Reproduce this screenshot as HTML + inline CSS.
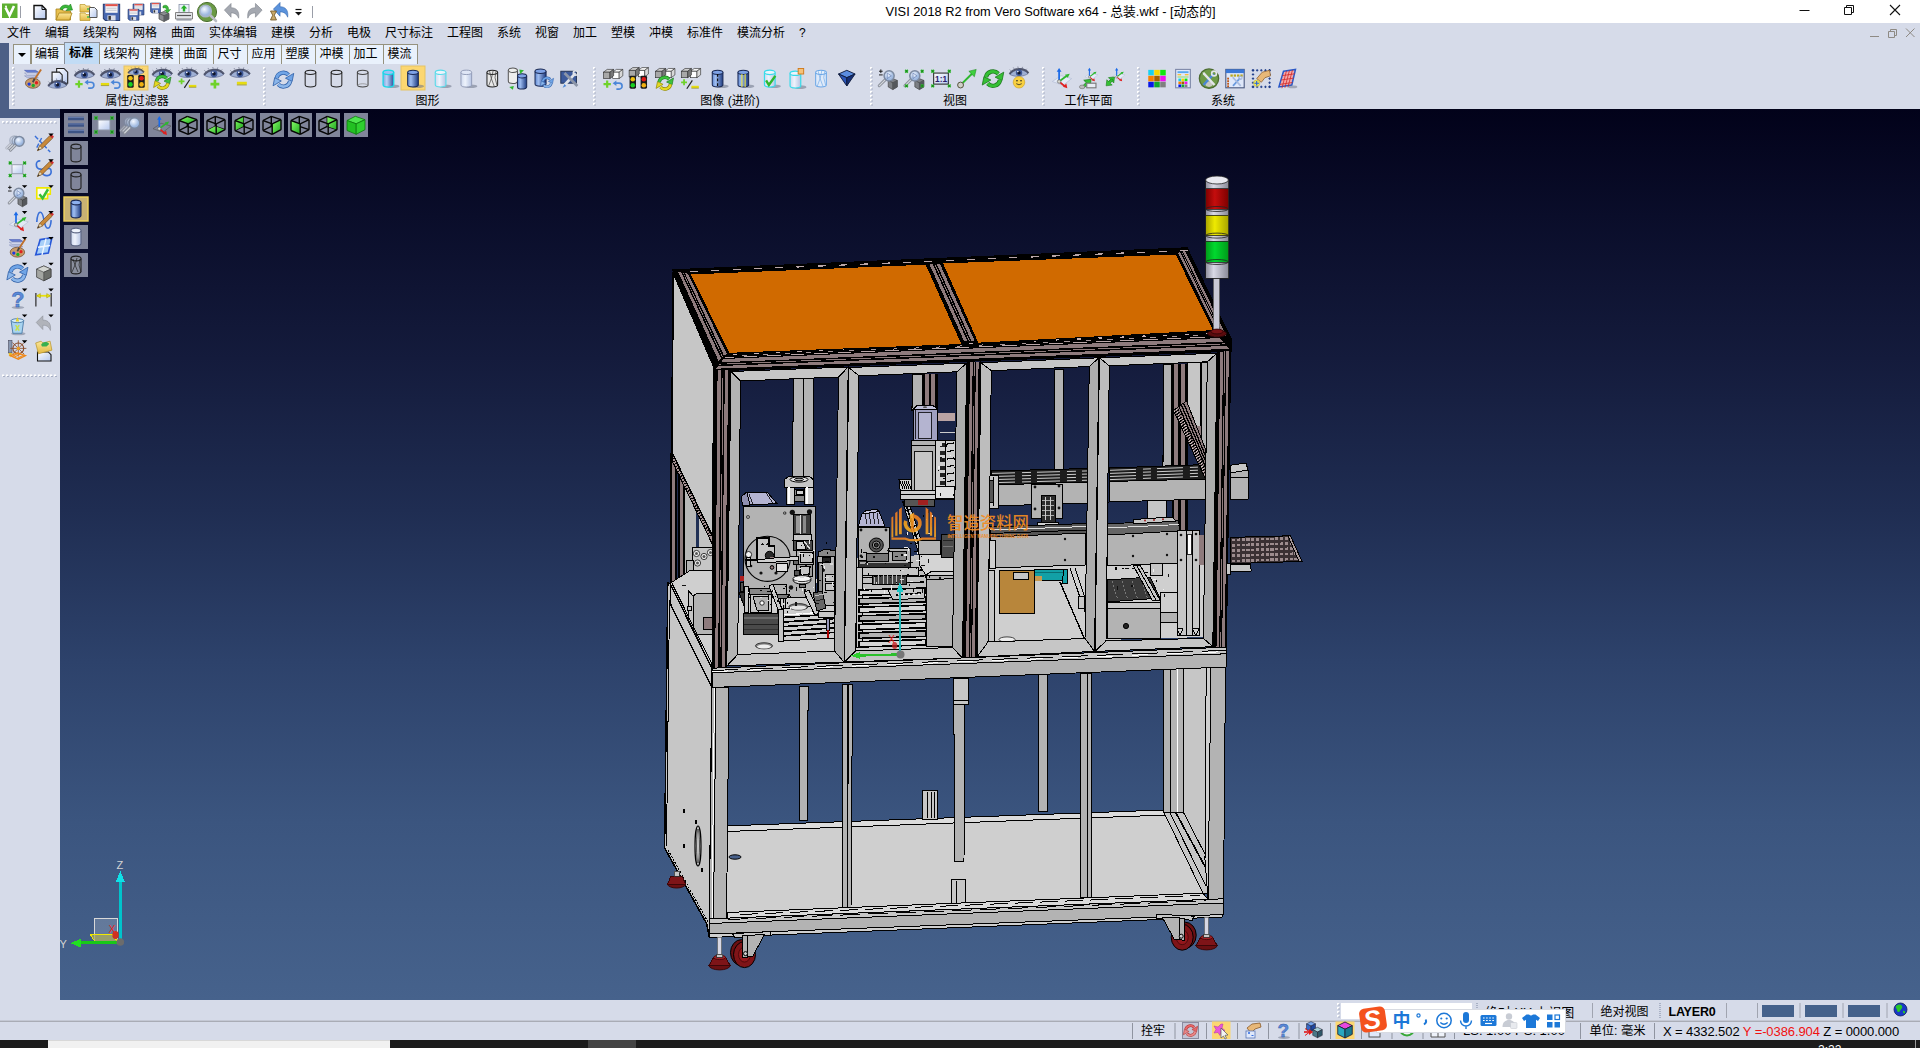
<!DOCTYPE html>
<html lang="zh-CN">
<head>
<meta charset="utf-8">
<title>VISI 2018 R2 from Vero Software x64 - 总装.wkf - [动态的]</title>
<style>
*{box-sizing:border-box;margin:0;padding:0}
html,body{width:1920px;height:1048px;overflow:hidden;background:#d6dbe9}
body{position:relative;font-family:"Liberation Sans","Noto Sans CJK SC",sans-serif;font-size:12px;color:#000}
.abs{position:absolute}
#titlebar{left:0;top:0;width:1920px;height:23px;background:#fff}
#title{left:0;top:1px;width:1920px;text-align:center;font-size:12.8px;letter-spacing:0px;padding-left:181px;white-space:nowrap}
#menubar{left:0;top:23px;width:1920px;height:20px;background:#d6dbe9}
.mi{position:absolute;top:26px;font-size:12px;line-height:15px;white-space:nowrap}
#leftblk{left:0;top:43px;width:9px;height:66px;background:#4c5f86}
.tab{position:absolute;top:44px;height:20px;background:#e9f1fc;border:1px solid #96927e;border-bottom:none;font-size:12px;line-height:18px;text-align:center;white-space:nowrap}
.tab.sel{top:42px;height:22px;background:#c2dcf5;border-color:#8a8f9a;font-weight:bold;line-height:20px}
.glabel{position:absolute;top:93.5px;font-size:12px;line-height:15px;white-space:nowrap;transform:translateX(-50%)}
.sep{position:absolute;top:66px;width:3px;height:40px;border-left:1px dotted #fff;border-right:1px dotted #9aa3b8}
#viewport{left:60px;top:109px;width:1860px;height:891px;background:linear-gradient(#02021a 0%,#0a0d2a 12%,#141b3c 28%,#1f2d52 45%,#2d426b 62%,#3b557f 80%,#46628c 100%)}
#leftpanel{left:0;top:109px;width:60px;height:911px;background:#d6dbe9}
#status1{left:0;top:1000px;width:1920px;height:21px;background:#d6dbe9}
#status2{left:0;top:1021px;width:1920px;height:19px;background:#d6dbe9;border-top:1px solid #a9acb5}
#taskbar{left:0;top:1040px;width:1920px;height:8px;background:#1c1c1c}
.st{position:absolute;font-size:12px;line-height:15px;white-space:nowrap}
</style>
</head>
<body>
<div id="titlebar" class="abs"></div>
<div id="title" class="abs">VISI 2018 R2 from Vero Software x64 - 总装.wkf - [动态的]</div>
<div id="menubar" class="abs"></div>
<div class="mi" style="left:7px">文件</div><div class="mi" style="left:45px">编辑</div><div class="mi" style="left:83px">线架构</div><div class="mi" style="left:133px">网格</div><div class="mi" style="left:171px">曲面</div><div class="mi" style="left:209px">实体编辑</div><div class="mi" style="left:271px">建模</div><div class="mi" style="left:309px">分析</div><div class="mi" style="left:347px">电极</div><div class="mi" style="left:385px">尺寸标注</div><div class="mi" style="left:447px">工程图</div><div class="mi" style="left:497px">系统</div><div class="mi" style="left:535px">视窗</div><div class="mi" style="left:573px">加工</div><div class="mi" style="left:611px">塑模</div><div class="mi" style="left:649px">冲模</div><div class="mi" style="left:687px">标准件</div><div class="mi" style="left:737px">模流分析</div><div class="mi" style="left:799px">?</div>

<div id="leftblk" class="abs"></div>
<div class="tab" style="left:13px;width:18px"><svg width="16" height="18" style="position:absolute;left:0;top:0"><path d="M4 8h8l-4 4z" fill="#000"/></svg></div><div class="tab" style="left:31px;width:34px;padding-right:2px">编辑</div><div class="tab sel" style="left:64px;width:36px;padding-right:2px">标准</div><div class="tab" style="left:99px;width:47px;padding-right:2px">线架构</div><div class="tab" style="left:145px;width:35px;padding-right:2px">建模</div><div class="tab" style="left:179px;width:35px;padding-right:2px">曲面</div><div class="tab" style="left:213px;width:35px;padding-right:2px">尺寸</div><div class="tab" style="left:247px;width:35px;padding-right:2px">应用</div><div class="tab" style="left:281px;width:35px;padding-right:2px">塑膜</div><div class="tab" style="left:315px;width:35px;padding-right:2px">冲模</div><div class="tab" style="left:349px;width:35px;padding-right:2px">加工</div><div class="tab" style="left:383px;width:35px;padding-right:2px">模流</div>

<svg class="abs" style="left:0;top:0" width="1920" height="110" viewBox="0 0 1920 110"><defs><linearGradient id="cb"><stop offset="0" stop-color="#7fa3e0"/><stop offset="0.35" stop-color="#bcd3f6"/><stop offset="1" stop-color="#2c4f9c"/></linearGradient><linearGradient id="cb2"><stop offset="0" stop-color="#5d86d0"/><stop offset="0.3" stop-color="#9fbdf0"/><stop offset="1" stop-color="#1d3a80"/></linearGradient><linearGradient id="ct"><stop offset="0" stop-color="#cfd9ee"/><stop offset="0.4" stop-color="#eef3fc"/><stop offset="1" stop-color="#b5c3e2"/></linearGradient><radialGradient id="mag" cx="0.4" cy="0.35"><stop offset="0" stop-color="#f4f8ff"/><stop offset="1" stop-color="#9db8e0"/></radialGradient><linearGradient id="pg" x2="1" y2="1"><stop offset="0" stop-color="#fff"/><stop offset="1" stop-color="#b5c8ef"/></linearGradient><linearGradient id="fold" x2="0" y2="1"><stop offset="0" stop-color="#fbe79a"/><stop offset="1" stop-color="#e3b944"/></linearGradient><linearGradient id="gcube" x2="1" y2="1"><stop offset="0" stop-color="#8aff6a"/><stop offset="1" stop-color="#1fa81f"/></linearGradient></defs>
<path d="M13 67v40" stroke="#fff" stroke-width="2" stroke-dasharray="2 2"/><path d="M14 68v40" stroke="#a8b0c4" stroke-width="1" stroke-dasharray="2 2"/>
<path d="M264 67v40" stroke="#fff" stroke-width="2" stroke-dasharray="2 2"/><path d="M265 68v40" stroke="#a8b0c4" stroke-width="1" stroke-dasharray="2 2"/>
<path d="M594 67v40" stroke="#fff" stroke-width="2" stroke-dasharray="2 2"/><path d="M595 68v40" stroke="#a8b0c4" stroke-width="1" stroke-dasharray="2 2"/>
<path d="M871 67v40" stroke="#fff" stroke-width="2" stroke-dasharray="2 2"/><path d="M872 68v40" stroke="#a8b0c4" stroke-width="1" stroke-dasharray="2 2"/>
<path d="M1043 67v40" stroke="#fff" stroke-width="2" stroke-dasharray="2 2"/><path d="M1044 68v40" stroke="#a8b0c4" stroke-width="1" stroke-dasharray="2 2"/>
<path d="M1138 67v40" stroke="#fff" stroke-width="2" stroke-dasharray="2 2"/><path d="M1139 68v40" stroke="#a8b0c4" stroke-width="1" stroke-dasharray="2 2"/>
<g transform="translate(32.8,78.6) scale(0.92)"><path d="M-9 -9h12l3 2h-12z" fill="#6c86dc" stroke="#3d50a8" stroke-width="0.6"/><path d="M-9 -6h12l3 2h-12z" fill="#e8ecfa" stroke="#7d88b8" stroke-width="0.6"/><path d="M-9 -3h12l3 2h-12z" fill="#c8cee8" stroke="#7d88b8" stroke-width="0.6"/><ellipse cx="0" cy="5" rx="8" ry="5.5" fill="#c99a6a" stroke="#6a4a2a" stroke-width="0.8"/><circle cx="-4" cy="6" r="1.8" fill="#1a3ae0"/><circle cx="0.5" cy="7.5" r="1.8" fill="#18b028"/><circle cx="4" cy="4.5" r="1.8" fill="#e02020"/><path d="M9 -10L1 2" stroke="#c0702a" stroke-width="2"/><path d="M2 0l-2 4" stroke="#444" stroke-width="2"/></g>
<g transform="translate(58.5,78.6) scale(0.92)"><path d="M-2 -11h8l4 4v12h-12z" fill="url(#pg)" stroke="#222" stroke-width="1.2"/><path d="M-7 -7h8l3 3v11h-11z" fill="url(#pg)" stroke="#222" stroke-width="1.2"/><g transform="translate(-1,7) scale(0.95)"><path d="M-10.5 1.5C-6 -4.5 5 -5.5 10.5 0.5C6 4.2 -5 5 -10.500 1.500Z" fill="#9fb0d4" stroke="#5a6488" stroke-width="0.700"/><path d="M-10.800 1C-6 -6 6 -6.800 10.800 0" fill="none" stroke="#3a4058" stroke-width="2.200" opacity="0.850"/><path d="M-9 -2.500l-1.500 -1.500M-5.500 -4.800l-1 -1.600M-1 -5.800l-0.300 -1.700M3.500 -5.500l0.600 -1.600M7.500 -3.500l1.300 -1.400" stroke="#3a4058" stroke-width="0.800" opacity="0.700"/><circle cx="0" cy="-0.300" r="3.700" fill="#3f5896"/><circle cx="0" cy="-0.300" r="1.900" fill="#10162c"/><circle cx="-1.300" cy="-1.700" r="0.900" fill="#eef2fc"/></g></g>
<g transform="translate(84.5,78.6) scale(0.92)"><g transform="translate(0,-4) scale(1)"><path d="M-10.5 1.5C-6 -4.5 5 -5.5 10.5 0.5C6 4.2 -5 5 -10.500 1.500Z" fill="#9fb0d4" stroke="#5a6488" stroke-width="0.700"/><path d="M-10.800 1C-6 -6 6 -6.800 10.800 0" fill="none" stroke="#3a4058" stroke-width="2.200" opacity="0.850"/><path d="M-9 -2.500l-1.500 -1.500M-5.500 -4.800l-1 -1.600M-1 -5.800l-0.300 -1.700M3.500 -5.500l0.600 -1.600M7.500 -3.500l1.300 -1.400" stroke="#3a4058" stroke-width="0.800" opacity="0.700"/><circle cx="0" cy="-0.300" r="3.700" fill="#3f5896"/><circle cx="0" cy="-0.300" r="1.900" fill="#10162c"/><circle cx="-1.300" cy="-1.700" r="0.900" fill="#eef2fc"/></g><path d="M-10 6h8M-6 2v8" stroke="#6fd22a" stroke-width="2.4" fill="none"/><path d="M2 4h5a3.2 3.2 0 0 1 0 6.4h-3" fill="none" stroke="#4a86d8" stroke-width="1.8"/><path d="M0 4l4 -3v6z" fill="#4a86d8"/></g>
<g transform="translate(110.5,78.6) scale(0.92)"><g transform="translate(0,-4) scale(1)"><path d="M-10.5 1.5C-6 -4.5 5 -5.5 10.5 0.5C6 4.2 -5 5 -10.500 1.500Z" fill="#9fb0d4" stroke="#5a6488" stroke-width="0.700"/><path d="M-10.800 1C-6 -6 6 -6.800 10.800 0" fill="none" stroke="#3a4058" stroke-width="2.200" opacity="0.850"/><path d="M-9 -2.500l-1.500 -1.500M-5.500 -4.800l-1 -1.600M-1 -5.800l-0.300 -1.700M3.500 -5.500l0.600 -1.600M7.500 -3.500l1.300 -1.400" stroke="#3a4058" stroke-width="0.800" opacity="0.700"/><circle cx="0" cy="-0.300" r="3.700" fill="#3f5896"/><circle cx="0" cy="-0.300" r="1.900" fill="#10162c"/><circle cx="-1.300" cy="-1.700" r="0.900" fill="#eef2fc"/></g><path d="M-10.5 6h9" stroke="#e6dc10" stroke-width="2.6" fill="none"/><path d="M-10.5 7.6h9" stroke="#8b8400" stroke-width="0.7" fill="none"/><path d="M2 4h5a3.2 3.2 0 0 1 0 6.4h-3" fill="none" stroke="#4a86d8" stroke-width="1.8"/><path d="M0 4l4 -3v6z" fill="#4a86d8"/></g>
<rect x="124" y="66" width="24" height="24" fill="#fcd771" stroke="#e5c365" stroke-width="1"/>
<g transform="translate(136.0,78.6) scale(0.92)"><g transform="translate(0,-7) scale(0.8)"><path d="M-10.5 1.5C-6 -4.5 5 -5.5 10.5 0.5C6 4.2 -5 5 -10.500 1.500Z" fill="#9fb0d4" stroke="#5a6488" stroke-width="0.700"/><path d="M-10.800 1C-6 -6 6 -6.800 10.800 0" fill="none" stroke="#3a4058" stroke-width="2.200" opacity="0.850"/><path d="M-9 -2.500l-1.500 -1.500M-5.500 -4.800l-1 -1.600M-1 -5.800l-0.300 -1.700M3.500 -5.500l0.600 -1.600M7.500 -3.500l1.300 -1.400" stroke="#3a4058" stroke-width="0.800" opacity="0.700"/><circle cx="0" cy="-0.300" r="3.700" fill="#3f5896"/><circle cx="0" cy="-0.300" r="1.900" fill="#10162c"/><circle cx="-1.300" cy="-1.700" r="0.900" fill="#eef2fc"/></g><rect x="-9.5" y="-4" width="7" height="14" rx="1.5" fill="#1a1a1a"/><circle cx="-6" cy="-0.2999999999999998" r="2.5" fill="#f0c010"/><circle cx="-6" cy="6.3" r="2.5" fill="#18d020"/><rect x="2.5" y="-4" width="7" height="14" rx="1.5" fill="#1a1a1a"/><circle cx="6" cy="-0.2999999999999998" r="2.5" fill="#e01818"/><circle cx="6" cy="6.3" r="2.5" fill="#f0b010"/></g>
<g transform="translate(162.3,78.6) scale(0.92)"><g transform="translate(0,-5) scale(1)"><path d="M-10.5 1.5C-6 -4.5 5 -5.5 10.5 0.5C6 4.2 -5 5 -10.500 1.500Z" fill="#9fb0d4" stroke="#5a6488" stroke-width="0.700"/><path d="M-10.800 1C-6 -6 6 -6.800 10.800 0" fill="none" stroke="#3a4058" stroke-width="2.200" opacity="0.850"/><path d="M-9 -2.500l-1.500 -1.500M-5.500 -4.800l-1 -1.600M-1 -5.800l-0.300 -1.700M3.500 -5.500l0.600 -1.600M7.500 -3.500l1.300 -1.400" stroke="#3a4058" stroke-width="0.800" opacity="0.700"/><circle cx="0" cy="-0.300" r="3.700" fill="#3f5896"/><circle cx="0" cy="-0.300" r="1.900" fill="#10162c"/><circle cx="-1.300" cy="-1.700" r="0.900" fill="#eef2fc"/></g><g transform="translate(0,4) scale(1.05)"><g transform="rotate(0)"><path d="M-5.9 -1.2A6 6 0 0 1 4.4 -4.1" fill="none" stroke="#1f7a1f" stroke-width="3.6"/><path d="M9 -5.4L1.8 -1.2L7.6 1.6Z" fill="#3cc23c" stroke="#1f7a1f" stroke-width="0.7"/><path d="M-5.9 -1.2A6 6 0 0 1 4.4 -4.1" fill="none" stroke="#3cc23c" stroke-width="2.4"/></g><g transform="rotate(180)"><path d="M-5.9 -1.2A6 6 0 0 1 4.4 -4.1" fill="none" stroke="#8b8400" stroke-width="3.6"/><path d="M9 -5.4L1.8 -1.2L7.6 1.6Z" fill="#e4d820" stroke="#8b8400" stroke-width="0.7"/><path d="M-5.9 -1.2A6 6 0 0 1 4.4 -4.1" fill="none" stroke="#e4d820" stroke-width="2.4"/></g></g></g>
<g transform="translate(188.0,78.6) scale(0.92)"><g transform="translate(0,-5) scale(1)"><path d="M-10.5 1.5C-6 -4.5 5 -5.5 10.5 0.5C6 4.2 -5 5 -10.500 1.500Z" fill="#9fb0d4" stroke="#5a6488" stroke-width="0.700"/><path d="M-10.800 1C-6 -6 6 -6.800 10.800 0" fill="none" stroke="#3a4058" stroke-width="2.200" opacity="0.850"/><path d="M-9 -2.500l-1.500 -1.500M-5.500 -4.800l-1 -1.600M-1 -5.800l-0.300 -1.700M3.500 -5.500l0.600 -1.600M7.500 -3.500l1.300 -1.400" stroke="#3a4058" stroke-width="0.800" opacity="0.700"/><circle cx="0" cy="-0.300" r="3.700" fill="#3f5896"/><circle cx="0" cy="-0.300" r="1.900" fill="#10162c"/><circle cx="-1.300" cy="-1.700" r="0.900" fill="#eef2fc"/></g><path d="M-10.2 3h6.4M-7 -0.20000000000000018v6.4" stroke="#6fd22a" stroke-width="1.92" fill="none"/><path d="M-4 10l6 -9" stroke="#222" stroke-width="1.3"/><path d="M0.9500000000000002 8h8.1" stroke="#e6dc10" stroke-width="2.3400000000000003" fill="none"/><path d="M0.9500000000000002 9.44h8.1" stroke="#8b8400" stroke-width="0.7" fill="none"/></g>
<g transform="translate(214.0,78.6) scale(0.92)"><g transform="translate(0,-5) scale(1)"><path d="M-10.5 1.5C-6 -4.5 5 -5.5 10.5 0.5C6 4.2 -5 5 -10.500 1.500Z" fill="#9fb0d4" stroke="#5a6488" stroke-width="0.700"/><path d="M-10.800 1C-6 -6 6 -6.800 10.800 0" fill="none" stroke="#3a4058" stroke-width="2.200" opacity="0.850"/><path d="M-9 -2.500l-1.500 -1.500M-5.500 -4.800l-1 -1.600M-1 -5.800l-0.300 -1.700M3.500 -5.500l0.600 -1.600M7.500 -3.500l1.300 -1.400" stroke="#3a4058" stroke-width="0.800" opacity="0.700"/><circle cx="0" cy="-0.300" r="3.700" fill="#3f5896"/><circle cx="0" cy="-0.300" r="1.900" fill="#10162c"/><circle cx="-1.300" cy="-1.700" r="0.900" fill="#eef2fc"/></g><path d="M-3.8 6h9.6M1 1.2000000000000002v9.6" stroke="#6fd22a" stroke-width="2.88" fill="none"/></g>
<g transform="translate(240.0,78.6) scale(0.92)"><g transform="translate(0,-5) scale(1)"><path d="M-10.5 1.5C-6 -4.5 5 -5.5 10.5 0.5C6 4.2 -5 5 -10.500 1.500Z" fill="#9fb0d4" stroke="#5a6488" stroke-width="0.700"/><path d="M-10.800 1C-6 -6 6 -6.800 10.800 0" fill="none" stroke="#3a4058" stroke-width="2.200" opacity="0.850"/><path d="M-9 -2.500l-1.500 -1.500M-5.500 -4.800l-1 -1.600M-1 -5.800l-0.300 -1.700M3.500 -5.500l0.600 -1.600M7.500 -3.500l1.300 -1.400" stroke="#3a4058" stroke-width="0.800" opacity="0.700"/><circle cx="0" cy="-0.300" r="3.700" fill="#3f5896"/><circle cx="0" cy="-0.300" r="1.900" fill="#10162c"/><circle cx="-1.300" cy="-1.700" r="0.900" fill="#eef2fc"/></g><path d="M-3.3999999999999995 5h10.799999999999999" stroke="#e6dc10" stroke-width="3.12" fill="none"/><path d="M-3.3999999999999995 6.92h10.799999999999999" stroke="#8b8400" stroke-width="0.7" fill="none"/></g>
<g transform="translate(283.4,79.6) scale(0.92)"><g transform="translate(0,0) scale(1.25)"><g transform="rotate(0)"><path d="M-5.9 -1.2A6 6 0 0 1 4.4 -4.1" fill="none" stroke="#2d5fa8" stroke-width="3.6"/><path d="M9 -5.4L1.8 -1.2L7.6 1.6Z" fill="#6fa4e6" stroke="#2d5fa8" stroke-width="0.7"/><path d="M-5.9 -1.2A6 6 0 0 1 4.4 -4.1" fill="none" stroke="#6fa4e6" stroke-width="2.4"/></g><g transform="rotate(180)"><path d="M-5.9 -1.2A6 6 0 0 1 4.4 -4.1" fill="none" stroke="#2d5fa8" stroke-width="3.6"/><path d="M9 -5.4L1.8 -1.2L7.6 1.6Z" fill="#8bb6ea" stroke="#2d5fa8" stroke-width="0.7"/><path d="M-5.9 -1.2A6 6 0 0 1 4.4 -4.1" fill="none" stroke="#8bb6ea" stroke-width="2.4"/></g></g></g>
<g transform="translate(310.5,78.6) scale(0.92)"><path d="M-5.8 -6.8v13.6a5.8 2.4 0 0 0 11.6 0v-13.6" fill="none" stroke="#222" stroke-width="1.1"/><ellipse cx="0" cy="-6.8" rx="5.8" ry="2.4" fill="none" stroke="#222" stroke-width="1.1"/></g>
<g transform="translate(336.5,78.6) scale(0.92)"><path d="M-5.8 -6.8v13.6a5.8 2.4 0 0 0 11.6 0v-13.6" fill="none" stroke="#222" stroke-width="1.1"/><ellipse cx="0" cy="-6.8" rx="5.8" ry="2.4" fill="none" stroke="#222" stroke-width="1.1"/></g>
<g transform="translate(362.7,78.6) scale(0.92)"><path d="M-5.8 -6.8v13.6a5.8 2.4 0 0 0 11.6 0v-13.6" fill="none" stroke="#444" stroke-width="1.1"/><ellipse cx="0" cy="-6.8" rx="5.8" ry="2.4" fill="none" stroke="#444" stroke-width="1.1"/><path d="M-6 8a6 2.4 0 0 1 12 0" fill="none" stroke="#888" stroke-width="0.8"/></g>
<g transform="translate(388.4,78.6) scale(0.92)"><ellipse cx="5" cy="8.3" rx="7" ry="2" fill="#6c7386" opacity="0.55"/><path d="M-5.8 -6.8v13.6a5.8 2.4 0 0 0 11.6 0v-13.6" fill="url(#cb)" stroke="#18d8e8" stroke-width="1.4"/><ellipse cx="0" cy="-6.8" rx="5.8" ry="2.4" fill="#9fc0f4" stroke="#18d8e8" stroke-width="1.4"/></g>
<rect x="401" y="66" width="24" height="24" fill="#fcd771" stroke="#e5c365" stroke-width="1"/>
<g transform="translate(413.0,78.6) scale(0.92)"><ellipse cx="5" cy="8.3" rx="7" ry="2" fill="#6c7386" opacity="0.55"/><path d="M-5.8 -6.8v13.6a5.8 2.4 0 0 0 11.6 0v-13.6" fill="url(#cb2)" stroke="#1b2a55" stroke-width="1.1"/><ellipse cx="0" cy="-6.8" rx="5.8" ry="2.4" fill="#7ea2e6" stroke="#1b2a55" stroke-width="1.1"/></g>
<g transform="translate(440.6,78.6) scale(0.92)"><ellipse cx="5" cy="8.3" rx="7" ry="2" fill="#6c7386" opacity="0.55"/><path d="M-5.8 -6.8v13.6a5.8 2.4 0 0 0 11.6 0v-13.6" fill="url(#ct)" stroke="#58dcea" stroke-width="1.2"/><ellipse cx="0" cy="-6.8" rx="5.8" ry="2.4" fill="#eef3fc" stroke="#58dcea" stroke-width="1.2"/></g>
<g transform="translate(466.3,78.6) scale(0.92)"><ellipse cx="5" cy="8.3" rx="7" ry="2" fill="#6c7386" opacity="0.55"/><path d="M-5.8 -6.8v13.6a5.8 2.4 0 0 0 11.6 0v-13.6" fill="url(#ct)" stroke="#8e98b4" stroke-width="1"/><ellipse cx="0" cy="-6.8" rx="5.8" ry="2.4" fill="#dfe6f6" stroke="#8e98b4" stroke-width="1"/></g>
<g transform="translate(492.3,78.6) scale(0.92)"><path d="M-5.8 -6.8v13.6a5.8 2.4 0 0 0 11.6 0v-13.6" fill="#e8e8e8" stroke="#222" stroke-width="1.1"/><ellipse cx="0" cy="-6.8" rx="5.8" ry="2.4" fill="#e8e8e8" stroke="#222" stroke-width="1.1"/><path d="M-3 -8l2 8l-3 8M1 -9l-2 9l3 8M4 -8l-1 7l2 8" fill="none" stroke="#333" stroke-width="0.7"/></g>
<g transform="translate(517.5,78.6) scale(0.92)"><path d="M-10 -9v12a5 2.4 0 0 0 10 0v-12" fill="#eee" stroke="#555" stroke-width="1.1"/><ellipse cx="-5" cy="-9" rx="5" ry="2.4" fill="#eee" stroke="#555" stroke-width="1.1"/><path d="M0 -3v12a5 2.4 0 0 0 10 0v-12" fill="url(#cb2)" stroke="#1b2a55" stroke-width="1.1"/><ellipse cx="5" cy="-3" rx="5" ry="2.4" fill="#7ea2e6" stroke="#1b2a55" stroke-width="1.1"/><path d="M2 -10l5 1l-4 4z" fill="#2fb82f"/><path d="M-9 9l5 -1l-1 4z" fill="#2fb82f"/></g>
<g transform="translate(543.3,78.6) scale(0.92)"><path d="M-9 -8v14a6 2.4 0 0 0 12 0v-14" fill="url(#cb2)" stroke="#1b2a55" stroke-width="1.1"/><ellipse cx="-3" cy="-8" rx="6" ry="2.4" fill="#7ea2e6" stroke="#1b2a55" stroke-width="1.1"/><g transform="translate(4,4) scale(0.8)"><g transform="rotate(0)"><path d="M-5.9 -1.2A6 6 0 0 1 4.4 -4.1" fill="none" stroke="#2d5fa8" stroke-width="3.6"/><path d="M9 -5.4L1.8 -1.2L7.6 1.6Z" fill="#6fa4e6" stroke="#2d5fa8" stroke-width="0.7"/><path d="M-5.9 -1.2A6 6 0 0 1 4.4 -4.1" fill="none" stroke="#6fa4e6" stroke-width="2.4"/></g><g transform="rotate(180)"><path d="M-5.9 -1.2A6 6 0 0 1 4.4 -4.1" fill="none" stroke="#2d5fa8" stroke-width="3.6"/><path d="M9 -5.4L1.8 -1.2L7.6 1.6Z" fill="#8bb6ea" stroke="#2d5fa8" stroke-width="0.7"/><path d="M-5.9 -1.2A6 6 0 0 1 4.4 -4.1" fill="none" stroke="#8bb6ea" stroke-width="2.4"/></g></g></g>
<g transform="translate(570.0,78.6) scale(0.92)"><rect x="-10" y="-8" width="17" height="13" fill="#3c5a9c" stroke="#22304f" stroke-width="1"/><path d="M-7 8L6 -6" stroke="#dfe3ea" stroke-width="3"/><path d="M-6 -6L8 8" stroke="#8d96a8" stroke-width="3"/><path d="M-8 10l4 -2l-2 -2z" fill="#4a86d8"/><circle cx="6" cy="-6" r="2.5" fill="none" stroke="#dfe3ea" stroke-width="1.6"/></g>
<g transform="translate(612.7,78.6) scale(0.92)"><path d="M0 -7l4 -3h7l-4 3z" fill="#f4f4f4" stroke="#333" stroke-width="0.7"/><rect x="0" y="-7" width="7" height="7" fill="#ffffff" stroke="#333" stroke-width="0.7"/><path d="M7 -7l4 -3v7l-4 3z" fill="#d8d8d8" stroke="#333" stroke-width="0.7"/><path d="M-10 -7l4 -3h7l-4 3z" fill="#d0d0d0" stroke="#333" stroke-width="0.7"/><rect x="-10" y="-7" width="7" height="7" fill="#a8a8a8" stroke="#333" stroke-width="0.7"/><path d="M-3 -7l4 -3v7l-4 3z" fill="#787878" stroke="#333" stroke-width="0.7"/><path d="M-10 6h8M-6 2v8" stroke="#6fd22a" stroke-width="2.4" fill="none"/><path d="M2 5h5a3.2 3.2 0 0 1 0 6.4h-3" fill="none" stroke="#4a86d8" stroke-width="1.8"/><path d="M0 5l4 -3v6z" fill="#4a86d8"/></g>
<g transform="translate(638.3,78.6) scale(0.92)"><path d="M0 -9l4 -3h7l-4 3z" fill="#f4f4f4" stroke="#333" stroke-width="0.7"/><rect x="0" y="-9" width="7" height="7" fill="#ffffff" stroke="#333" stroke-width="0.7"/><path d="M7 -9l4 -3v7l-4 3z" fill="#d8d8d8" stroke="#333" stroke-width="0.7"/><path d="M-10 -9l4 -3h7l-4 3z" fill="#d0d0d0" stroke="#333" stroke-width="0.7"/><rect x="-10" y="-9" width="7" height="7" fill="#a8a8a8" stroke="#333" stroke-width="0.7"/><path d="M-3 -9l4 -3v7l-4 3z" fill="#787878" stroke="#333" stroke-width="0.7"/><rect x="-9.5" y="-3" width="7" height="14" rx="1.5" fill="#1a1a1a"/><circle cx="-6" cy="0.7000000000000002" r="2.5" fill="#f0c010"/><circle cx="-6" cy="7.3" r="2.5" fill="#18d020"/><rect x="2.5" y="-3" width="7" height="14" rx="1.5" fill="#1a1a1a"/><circle cx="6" cy="0.7000000000000002" r="2.5" fill="#e01818"/><circle cx="6" cy="7.3" r="2.5" fill="#f0b010"/></g>
<g transform="translate(664.8,78.6) scale(0.92)"><path d="M0 -8l4 -3h7l-4 3z" fill="#f4f4f4" stroke="#333" stroke-width="0.7"/><rect x="0" y="-8" width="7" height="7" fill="#ffffff" stroke="#333" stroke-width="0.7"/><path d="M7 -8l4 -3v7l-4 3z" fill="#d8d8d8" stroke="#333" stroke-width="0.7"/><path d="M-10 -8l4 -3h7l-4 3z" fill="#d0d0d0" stroke="#333" stroke-width="0.7"/><rect x="-10" y="-8" width="7" height="7" fill="#a8a8a8" stroke="#333" stroke-width="0.7"/><path d="M-3 -8l4 -3v7l-4 3z" fill="#787878" stroke="#333" stroke-width="0.7"/><g transform="translate(0,5) scale(1.05)"><g transform="rotate(0)"><path d="M-5.9 -1.2A6 6 0 0 1 4.4 -4.1" fill="none" stroke="#1f7a1f" stroke-width="3.6"/><path d="M9 -5.4L1.8 -1.2L7.6 1.6Z" fill="#3cc23c" stroke="#1f7a1f" stroke-width="0.7"/><path d="M-5.9 -1.2A6 6 0 0 1 4.4 -4.1" fill="none" stroke="#3cc23c" stroke-width="2.4"/></g><g transform="rotate(180)"><path d="M-5.9 -1.2A6 6 0 0 1 4.4 -4.1" fill="none" stroke="#8b8400" stroke-width="3.6"/><path d="M9 -5.4L1.8 -1.2L7.6 1.6Z" fill="#e4d820" stroke="#8b8400" stroke-width="0.7"/><path d="M-5.9 -1.2A6 6 0 0 1 4.4 -4.1" fill="none" stroke="#e4d820" stroke-width="2.4"/></g></g></g>
<g transform="translate(690.5,78.6) scale(0.92)"><path d="M0 -8l4 -3h7l-4 3z" fill="#f4f4f4" stroke="#333" stroke-width="0.7"/><rect x="0" y="-8" width="7" height="7" fill="#ffffff" stroke="#333" stroke-width="0.7"/><path d="M7 -8l4 -3v7l-4 3z" fill="#d8d8d8" stroke="#333" stroke-width="0.7"/><path d="M-10 -8l4 -3h7l-4 3z" fill="#d0d0d0" stroke="#333" stroke-width="0.7"/><rect x="-10" y="-8" width="7" height="7" fill="#a8a8a8" stroke="#333" stroke-width="0.7"/><path d="M-3 -8l4 -3v7l-4 3z" fill="#787878" stroke="#333" stroke-width="0.7"/><path d="M-10.2 4h6.4M-7 0.7999999999999998v6.4" stroke="#6fd22a" stroke-width="1.92" fill="none"/><path d="M-4 11l6 -9" stroke="#222" stroke-width="1.3"/><path d="M0.9500000000000002 9h8.1" stroke="#e6dc10" stroke-width="2.3400000000000003" fill="none"/><path d="M0.9500000000000002 10.44h8.1" stroke="#8b8400" stroke-width="0.7" fill="none"/></g>
<g transform="translate(717.6,78.6) scale(0.92)"><ellipse cx="5" cy="8.3" rx="7" ry="2" fill="#6c7386" opacity="0.55"/><path d="M-5.8 -6.8v13.6a5.8 2.4 0 0 0 11.6 0v-13.6" fill="url(#cb2)" stroke="#1b2a55" stroke-width="1.1"/><ellipse cx="0" cy="-6.8" rx="5.8" ry="2.4" fill="#7ea2e6" stroke="#1b2a55" stroke-width="1.1"/><path d="M0 -5v14" stroke="#111" stroke-width="1.3" stroke-dasharray="3 2"/></g>
<g transform="translate(743.3,78.6) scale(0.92)"><ellipse cx="5" cy="8.3" rx="7" ry="2" fill="#6c7386" opacity="0.55"/><path d="M-5.8 -6.8v13.6a5.8 2.4 0 0 0 11.6 0v-13.6" fill="url(#cb2)" stroke="#1b2a55" stroke-width="1.1"/><ellipse cx="0" cy="-6.8" rx="5.8" ry="2.4" fill="#7ea2e6" stroke="#1b2a55" stroke-width="1.1"/><path d="M-1.5 -5v14M2 -5v14" stroke="#e8e040" stroke-width="1.2"/></g>
<g transform="translate(769.8,78.6) scale(0.92)"><ellipse cx="5" cy="8.3" rx="7" ry="2" fill="#6c7386" opacity="0.55"/><path d="M-5.8 -6.8v13.6a5.8 2.4 0 0 0 11.6 0v-13.6" fill="url(#ct)" stroke="#38dcea" stroke-width="1.3"/><ellipse cx="0" cy="-6.8" rx="5.8" ry="2.4" fill="#eef3fc" stroke="#38dcea" stroke-width="1.3"/><path d="M-4 2l3 5l7 -10" fill="none" stroke="#2eb82e" stroke-width="2.6"/></g>
<g transform="translate(795.4,78.6) scale(0.92)"><ellipse cx="5" cy="9.3" rx="7" ry="2" fill="#6c7386" opacity="0.55"/><path d="M-5.8 -5.8v13.6a5.8 2.4 0 0 0 11.6 0v-13.6" fill="url(#ct)" stroke="#38dcea" stroke-width="1.3"/><ellipse cx="0" cy="-5.8" rx="5.8" ry="2.4" fill="#eef3fc" stroke="#38dcea" stroke-width="1.3"/><rect x="3" y="-11" width="6" height="6" fill="#f4c27a" stroke="#d07818" stroke-width="1"/></g>
<g transform="translate(821.0,78.6) scale(0.92)"><path d="M-5.8 -6.8v13.6a5.8 2.4 0 0 0 11.6 0v-13.6" fill="#dfeaf9" stroke="#6aa6e6" stroke-width="1.1"/><ellipse cx="0" cy="-6.8" rx="5.8" ry="2.4" fill="#eaf2fc" stroke="#6aa6e6" stroke-width="1.1"/><path d="M-3 -8l2 8l-3 8M1 -9l-2 9l3 8M4 -8l-1 7l2 8" fill="none" stroke="#6aa6e6" stroke-width="0.7"/></g>
<g transform="translate(846.8,78.6) scale(0.92)"><path d="M-9 -5l9 -4l9 4l-9 4z" fill="#5b8de0" stroke="#0e1a3c" stroke-width="1"/><path d="M-9 -5l9 4v9z" fill="#2a55b8" stroke="#0e1a3c" stroke-width="1"/><path d="M9 -5l-9 4v9z" fill="#152f78" stroke="#0e1a3c" stroke-width="1"/></g>
<g transform="translate(888.2,78.6) scale(0.92)"><path d="M0 2l5 -2l5 2v7l-5 3l-5 -3z" fill="#7c7f84" stroke="#333" stroke-width="0.6"/><path d="M0 2l5 2.5l5 -2.5" fill="none" stroke="#333" stroke-width="0.6"/><path d="M5 4.5v7" stroke="#333" stroke-width="0.6"/><path d="M5 4.5l5 -2.5v7l-5 3z" fill="#55585c"/><path d="M-2.8 0.8l-7 7" stroke="#8a8f99" stroke-width="3.2" stroke-linecap="round"/><path d="M-2.8 0.8l-7 7" stroke="#d6d9df" stroke-width="1.2" stroke-linecap="round"/><circle cx="1" cy="-3" r="5.5" fill="url(#mag)" stroke="#7d8aa0" stroke-width="1.6"/><path d="M-1 -6l4.5 3l-4.5 3z" fill="none" stroke="#6d86b8" stroke-width="0.8"/><path d="M-10 -8h4M-8 -10v4M-10 -4h4" stroke="#111" stroke-width="1"/></g>
<g transform="translate(914.8,78.6) scale(0.92)"><path d="M0 2l5 -2l5 2v7l-5 3l-5 -3z" fill="#7c7f84" stroke="#333" stroke-width="0.6"/><path d="M0 2l5 2.5l5 -2.5" fill="none" stroke="#333" stroke-width="0.6"/><path d="M5 4.5v7" stroke="#333" stroke-width="0.6"/><path d="M5 4.5l5 -2.5v7l-5 3z" fill="#55585c"/><path d="M-3.8 0.8l-7 7" stroke="#8a8f99" stroke-width="3.2" stroke-linecap="round"/><path d="M-3.8 0.8l-7 7" stroke="#d6d9df" stroke-width="1.2" stroke-linecap="round"/><circle cx="0" cy="-3" r="5.5" fill="url(#mag)" stroke="#7d8aa0" stroke-width="1.6"/><path d="M-2 -6l4.5 3l-4.5 3z" fill="none" stroke="#6d86b8" stroke-width="0.8"/><path d="M-10.5 -9.5l3 3M-7.5 -9.5l-3 3" stroke="#2eb82e" stroke-width="1.6"/><rect x="-10" y="-9" width="2" height="2" fill="#1d8a1d"/><path d="M6.5 -9.5l3 3M9.5 -9.5l-3 3" stroke="#2eb82e" stroke-width="1.6"/><rect x="7" y="-9" width="2" height="2" fill="#1d8a1d"/><path d="M-10.5 6.5l3 3M-7.5 6.5l-3 3" stroke="#2eb82e" stroke-width="1.6"/><rect x="-10" y="7" width="2" height="2" fill="#1d8a1d"/><path d="M6.5 6.5l3 3M9.5 6.5l-3 3" stroke="#2eb82e" stroke-width="1.6"/><rect x="7" y="7" width="2" height="2" fill="#1d8a1d"/></g>
<g transform="translate(941.0,78.6) scale(0.92)"><rect x="-8" y="-6" width="16" height="12" fill="url(#pg)" stroke="#333" stroke-width="1.2"/><path d="M-10.5 -9.5l3 3M-7.5 -9.5l-3 3" stroke="#2eb82e" stroke-width="1.6"/><rect x="-10" y="-9" width="2" height="2" fill="#1d8a1d"/><path d="M7.5 -9.5l3 3M10.5 -9.5l-3 3" stroke="#2eb82e" stroke-width="1.6"/><rect x="8" y="-9" width="2" height="2" fill="#1d8a1d"/><path d="M-10.5 6.5l3 3M-7.5 6.5l-3 3" stroke="#2eb82e" stroke-width="1.6"/><rect x="-10" y="7" width="2" height="2" fill="#1d8a1d"/><path d="M7.5 6.5l3 3M10.5 6.5l-3 3" stroke="#2eb82e" stroke-width="1.6"/><rect x="8" y="7" width="2" height="2" fill="#1d8a1d"/><text x="0" y="3.5" font-size="9" font-weight="bold" text-anchor="middle" fill="#2a1a6a" font-family="Liberation Sans, sans-serif">1:1</text></g>
<g transform="translate(967.0,78.6) scale(0.92)"><path d="M-6 6L7 -7" stroke="#2eb82e" stroke-width="2.2"/><path d="M10 -10l-8 2l6 6z" fill="#3fd03f" stroke="#1d8a1d" stroke-width="0.6"/><circle cx="-7" cy="7" r="3.2" fill="#cfcfc8" stroke="#4a4a30" stroke-width="1"/></g>
<g transform="translate(993.0,78.6) scale(0.92)"><g transform="translate(0,0) scale(1.3)"><g transform="rotate(0)"><path d="M-5.9 -1.2A6 6 0 0 1 4.4 -4.1" fill="none" stroke="#1f7a1f" stroke-width="3.6"/><path d="M9 -5.4L1.8 -1.2L7.6 1.6Z" fill="#35c035" stroke="#1f7a1f" stroke-width="0.7"/><path d="M-5.9 -1.2A6 6 0 0 1 4.4 -4.1" fill="none" stroke="#35c035" stroke-width="2.4"/></g><g transform="rotate(180)"><path d="M-5.9 -1.2A6 6 0 0 1 4.4 -4.1" fill="none" stroke="#1f7a1f" stroke-width="3.6"/><path d="M9 -5.4L1.8 -1.2L7.6 1.6Z" fill="#35c035" stroke="#1f7a1f" stroke-width="0.7"/><path d="M-5.9 -1.2A6 6 0 0 1 4.4 -4.1" fill="none" stroke="#35c035" stroke-width="2.4"/></g></g></g>
<g transform="translate(1019.0,78.6) scale(0.92)"><g transform="translate(0,-6) scale(0.95)"><path d="M-10.5 1.5C-6 -4.5 5 -5.5 10.5 0.5C6 4.2 -5 5 -10.500 1.500Z" fill="#9fb0d4" stroke="#5a6488" stroke-width="0.700"/><path d="M-10.800 1C-6 -6 6 -6.800 10.800 0" fill="none" stroke="#3a4058" stroke-width="2.200" opacity="0.850"/><path d="M-9 -2.500l-1.500 -1.500M-5.500 -4.800l-1 -1.600M-1 -5.800l-0.300 -1.700M3.500 -5.500l0.600 -1.600M7.500 -3.500l1.300 -1.400" stroke="#3a4058" stroke-width="0.800" opacity="0.700"/><circle cx="0" cy="-0.300" r="3.700" fill="#3f5896"/><circle cx="0" cy="-0.300" r="1.900" fill="#10162c"/><circle cx="-1.300" cy="-1.700" r="0.900" fill="#eef2fc"/></g><circle cx="0" cy="4" r="6.3" fill="#f8d040" stroke="#c89a18" stroke-width="0.6"/><circle cx="-2.2" cy="2.3" r="0.9" fill="#222"/><circle cx="2.2" cy="2.3" r="0.9" fill="#222"/><path d="M-3 5.5q3 2.5 6 0" fill="none" stroke="#222" stroke-width="0.8"/></g>
<g transform="translate(1062.0,78.6) scale(0.92)"><g transform="translate(0,0) scale(1.05)"><path d="M-10 3l9 -6l11 3l-9 7z" fill="#e4ebf8" stroke="#b4bdd4" stroke-width="0.7"/><path d="M-3 3V-8" stroke="#1a6ae8" stroke-width="1.8"/><path d="M-3 -11l-2.5 4h5z" fill="#1a6ae8"/><path d="M-3 3L5 -3" stroke="#2eb82e" stroke-width="1.8"/><path d="M8 -5l-5 1l3 3z" fill="#2eb82e"/><path d="M-3 3L3 8" stroke="#e02020" stroke-width="1.8"/><path d="M5.5 10l-1 -5l-3.5 3.5z" fill="#e02020"/><circle cx="-3" cy="3" r="1.8" fill="#d8d8d0" stroke="#555" stroke-width="0.6"/></g></g>
<g transform="translate(1088.6,78.6) scale(0.92)"><g transform="translate(3,-4) scale(0.7)"><path d="M-10 3l9 -6l11 3l-9 7z" fill="#e4ebf8" stroke="#b4bdd4" stroke-width="0.7"/><path d="M-3 3V-8" stroke="#1a6ae8" stroke-width="1.8"/><path d="M-3 -11l-2.5 4h5z" fill="#1a6ae8"/><path d="M-3 3L5 -3" stroke="#2eb82e" stroke-width="1.8"/><path d="M8 -5l-5 1l3 3z" fill="#2eb82e"/><path d="M-3 3L3 8" stroke="#e02020" stroke-width="1.8"/><path d="M5.5 10l-1 -5l-3.5 3.5z" fill="#e02020"/><circle cx="-3" cy="3" r="1.8" fill="#d8d8d0" stroke="#555" stroke-width="0.6"/></g><g transform="translate(-4,3) rotate(-45) scale(0.9)"><path d="M-6 2h6v-4l7 5.5l-7 5.5v-4h-6z" fill="#35c035" stroke="#1a7a1a" stroke-width="0.8"/></g><rect x="-2" y="5" width="10" height="5" fill="#e8ecf4" stroke="#777" stroke-width="1.2"/><ellipse cx="-7" cy="9" rx="3" ry="2" fill="#bbb" stroke="#666" stroke-width="0.6"/></g>
<g transform="translate(1114.0,78.6) scale(0.92)"><g transform="translate(5,-4) scale(0.7)"><path d="M-10 3l9 -6l11 3l-9 7z" fill="#e4ebf8" stroke="#b4bdd4" stroke-width="0.7"/><path d="M-3 3V-8" stroke="#1a6ae8" stroke-width="1.8"/><path d="M-3 -11l-2.5 4h5z" fill="#1a6ae8"/><path d="M-3 3L5 -3" stroke="#2eb82e" stroke-width="1.8"/><path d="M8 -5l-5 1l3 3z" fill="#2eb82e"/><path d="M-3 3L3 8" stroke="#e02020" stroke-width="1.8"/><path d="M5.5 10l-1 -5l-3.5 3.5z" fill="#e02020"/><circle cx="-3" cy="3" r="1.8" fill="#d8d8d0" stroke="#555" stroke-width="0.6"/></g><g transform="translate(-5,0) rotate(-45) scale(0.75)"><path d="M-6 2h6v-4l7 5.5l-7 5.5v-4h-6z" fill="#35c035" stroke="#1a7a1a" stroke-width="0.8"/></g><g transform="translate(-3,6) rotate(135) scale(0.75)"><path d="M-6 2h6v-4l7 5.5l-7 5.5v-4h-6z" fill="#35c035" stroke="#1a7a1a" stroke-width="0.8"/></g></g>
<g transform="translate(1157.0,78.6) scale(0.92)"><rect x="-9.5" y="-9.5" width="6" height="6" fill="#18d0f0"/><rect x="-3.0" y="-9.5" width="6" height="6" fill="#f8d800"/><rect x="3.5" y="-9.5" width="6" height="6" fill="#10e810"/><rect x="-9.5" y="-3.0" width="6" height="6" fill="#f88000"/><rect x="-3.0" y="-3.0" width="6" height="6" fill="#a86000"/><rect x="3.5" y="-3.0" width="6" height="6" fill="#f010f0"/><rect x="-9.5" y="3.5" width="6" height="6" fill="#0818e8"/><rect x="-3.0" y="3.5" width="6" height="6" fill="#10a830"/><rect x="3.5" y="3.5" width="6" height="6" fill="#808080"/></g>
<g transform="translate(1183.0,78.6) scale(0.92)"><rect x="-8" y="-10" width="16" height="20" fill="#dfe8fa" stroke="#7d88a8" stroke-width="1.2"/><rect x="-6" y="-8" width="12" height="2" fill="#58a8f0"/><rect x="-6" y="-5" width="4" height="1.5" fill="#f8c040"/><rect x="2" y="-5" width="4" height="1.5" fill="#f8c040"/><rect x="-6" y="-2.5" width="12" height="1.5" fill="#a8e088"/><rect x="-5.0" y="0.0" width="3" height="2.8" fill="#18d0f0"/><rect x="-1.6" y="0.0" width="3" height="2.8" fill="#f8d800"/><rect x="1.7999999999999998" y="0.0" width="3" height="2.8" fill="#10e810"/><rect x="-5.0" y="3.2" width="3" height="2.8" fill="#f88000"/><rect x="-1.6" y="3.2" width="3" height="2.8" fill="#a86000"/><rect x="1.7999999999999998" y="3.2" width="3" height="2.8" fill="#f010f0"/><rect x="-5.0" y="6.4" width="3" height="2.8" fill="#0818e8"/><rect x="-1.6" y="6.4" width="3" height="2.8" fill="#10a830"/><rect x="1.7999999999999998" y="6.4" width="3" height="2.8" fill="#808080"/></g>
<g transform="translate(1209.0,78.6) scale(0.92)"><circle cx="0" cy="0" r="10.5" fill="#6e9a48" stroke="#4c6c30" stroke-width="1.4"/><ellipse cx="0" cy="6" rx="4" ry="3" fill="#c8c8c0"/><path d="M-6 7L5 -5" stroke="#4a86d8" stroke-width="2.6"/><path d="M-6 -6L6 7" stroke="#e4e6ea" stroke-width="2.6"/><circle cx="5.5" cy="-5.5" r="2.6" fill="none" stroke="#e4e6ea" stroke-width="1.8"/><path d="M-7 -7l3 1l-2 2z" fill="#e4e6ea"/></g>
<g transform="translate(1235.0,78.6) scale(0.92)"><rect x="-10" y="-10" width="20" height="20" fill="#dfe8fa" stroke="#4a5a80" stroke-width="1.2"/><rect x="-10" y="-10" width="20" height="4" fill="#3a78d8"/><rect x="-5.0" y="-4.5" width="2.6" height="2.4" fill="#b8a820"/><rect x="-1.4" y="-4.5" width="2.6" height="2.4" fill="#b8a820"/><rect x="2.2" y="-4.5" width="2.6" height="2.4" fill="#b8a820"/><rect x="5.800000000000001" y="-4.5" width="2.6" height="2.4" fill="#b8a820"/><rect x="-8.5" y="-1.0" width="2" height="2" fill="#c05818"/><rect x="-8.5" y="1.7999999999999998" width="2" height="2" fill="#c05818"/><rect x="-8.5" y="4.6" width="2" height="2" fill="#c05818"/><rect x="-8.5" y="7.399999999999999" width="2" height="2" fill="#c05818"/><g transform="translate(2,3) scale(0.7)" opacity="0.8"><path d="M-6 7L5 -5" stroke="#4a86d8" stroke-width="2.6"/><path d="M-6 -6L6 7" stroke="#9ab0d8" stroke-width="2.6"/><circle cx="5.5" cy="-5.5" r="2.6" fill="none" stroke="#9ab0d8" stroke-width="1.8"/><path d="M-7 -7l3 1l-2 2z" fill="#9ab0d8"/></g></g>
<g transform="translate(1261.3,78.6) scale(0.92)"><path d="M-10.3 -9h2.6M-9.0 -10.3v2.6" stroke="#1a3a88" stroke-width="1"/><path d="M-10.3 9h2.6M-9.0 7.7v2.6" stroke="#1a3a88" stroke-width="1"/><path d="M-10.3 -9.0h2.6M-9 -10.3v2.6" stroke="#1a3a88" stroke-width="1"/><path d="M7.7 -9.0h2.6M9 -10.3v2.6" stroke="#1a3a88" stroke-width="1"/><path d="M-5.8 -9h2.6M-4.5 -10.3v2.6" stroke="#1a3a88" stroke-width="1"/><path d="M-5.8 9h2.6M-4.5 7.7v2.6" stroke="#1a3a88" stroke-width="1"/><path d="M-10.3 -4.5h2.6M-9 -5.8v2.6" stroke="#1a3a88" stroke-width="1"/><path d="M7.7 -4.5h2.6M9 -5.8v2.6" stroke="#1a3a88" stroke-width="1"/><path d="M-1.3 -9h2.6M0.0 -10.3v2.6" stroke="#1a3a88" stroke-width="1"/><path d="M-1.3 9h2.6M0.0 7.7v2.6" stroke="#1a3a88" stroke-width="1"/><path d="M-10.3 0.0h2.6M-9 -1.3v2.6" stroke="#1a3a88" stroke-width="1"/><path d="M7.7 0.0h2.6M9 -1.3v2.6" stroke="#1a3a88" stroke-width="1"/><path d="M3.2 -9h2.6M4.5 -10.3v2.6" stroke="#1a3a88" stroke-width="1"/><path d="M3.2 9h2.6M4.5 7.7v2.6" stroke="#1a3a88" stroke-width="1"/><path d="M-10.3 4.5h2.6M-9 3.2v2.6" stroke="#1a3a88" stroke-width="1"/><path d="M7.7 4.5h2.6M9 3.2v2.6" stroke="#1a3a88" stroke-width="1"/><path d="M7.7 -9h2.6M9.0 -10.3v2.6" stroke="#1a3a88" stroke-width="1"/><path d="M7.7 9h2.6M9.0 7.7v2.6" stroke="#1a3a88" stroke-width="1"/><path d="M-10.3 9.0h2.6M-9 7.7v2.6" stroke="#1a3a88" stroke-width="1"/><path d="M7.7 9.0h2.6M9 7.7v2.6" stroke="#1a3a88" stroke-width="1"/><path d="M-5 0l6 -7l8 -2l1 6l-6 2l-4 5z" fill="#e8b878" stroke="#8a5a28" stroke-width="0.8"/><circle cx="-5" cy="5" r="3.4" fill="#f0e860" stroke="#c8b820" stroke-width="0.6"/><path d="M-7.5 5h5M-5 2.5v5" stroke="#2060e0" stroke-width="1.2"/></g>
<g transform="translate(1287.2,78.6) scale(0.92)"><path d="M-4 -8l13 -2l-4 17l-14 2z" fill="#f4a8a8" stroke="#2858c8" stroke-width="1.6"/><path d="M-0.75 -8.5l-5 19" stroke="#d02020" stroke-width="0.8"/><path d="M-5.25 -3.25l13.5 -2" stroke="#d02020" stroke-width="0.8"/><path d="M2.5 -9.0l-5 19" stroke="#d02020" stroke-width="0.8"/><path d="M-6.5 1.5l13.5 -2" stroke="#d02020" stroke-width="0.8"/><path d="M5.75 -9.5l-5 19" stroke="#d02020" stroke-width="0.8"/><path d="M-7.75 6.25l13.5 -2" stroke="#d02020" stroke-width="0.8"/><ellipse cx="6" cy="9" rx="5" ry="1.5" fill="#6c7386" opacity="0.5"/></g></svg>
<div class="glabel" style="left:137px">属性/过滤器</div><div class="glabel" style="left:427.5px">图形</div><div class="glabel" style="left:730px">图像 (进阶)</div><div class="glabel" style="left:955px">视图</div><div class="glabel" style="left:1088.6px">工作平面</div><div class="glabel" style="left:1223px">系统</div>

<svg class="abs" style="left:0;top:0" width="1920" height="44" viewBox="0 0 1920 44"><rect x="2" y="3.5" width="15.5" height="14.5" fill="#5cb030"/><path d="M5.5 7.5l4 8l4.5 -9.5" fill="none" stroke="#fff" stroke-width="2.6"/><circle cx="6" cy="6.5" r="1" fill="#fff"/>
<path d="M20.5 6v12M312.5 6v12" stroke="#9a9ea8" stroke-width="1"/>
<path d="M34 5.5h8l4 4v9.5h-12z" fill="url(#pg)" stroke="#111" stroke-width="1.4"/><path d="M42 5.5v4h4" fill="none" stroke="#111" stroke-width="1"/>
<path d="M56 9h6l1.5 2h7v9h-14.5z" fill="#e8c050" stroke="#a8841c" stroke-width="0.8"/><path d="M56 20l3 -7h13l-2.5 7z" fill="url(#fold)" stroke="#a8841c" stroke-width="0.8"/><path d="M60 9c1 -4 6 -5 9 -3l1.5 -2l2 6l-6.5 0.5l2 -2c-2 -1.2 -4.5 -1 -5.5 1.5z" fill="#38b838" stroke="#1a7a1a" stroke-width="0.6"/>
<path d="M80 4.5h5l1 1.5h4v6h-10z" fill="url(#fold)" stroke="#b89428" stroke-width="0.7"/><path d="M80 13h5l1 1.5h4v6h-10z" fill="url(#fold)" stroke="#b89428" stroke-width="0.7"/><path d="M87 9h4M87 17h4" stroke="#48c048" stroke-width="1.4"/><path d="M89.5 7.5h5l2.5 2.5v7.5h-7.5z" fill="url(#pg)" stroke="#555" stroke-width="1"/>
<g transform="translate(111.5,12.3) scale(1.02)"><path d="M-8 -8h16v16h-14l-2 -2z" fill="#4868b0" stroke="#283c70" stroke-width="1"/><rect x="-6" y="-8" width="12" height="8.5" fill="#f4f4f6"/><rect x="-6" y="-8" width="12" height="2" fill="#e05048"/><path d="M-5 -4h10M-5 -2h10" stroke="#b8bcc8" stroke-width="0.8"/><rect x="-4" y="3" width="8" height="5" fill="#d8dce8"/><rect x="-3" y="3.6" width="2.4" height="3.8" fill="#333"/></g>
<g transform="translate(138.5,9.5) scale(0.68)"><path d="M-8 -8h16v16h-14l-2 -2z" fill="#4868b0" stroke="#283c70" stroke-width="1"/><rect x="-6" y="-8" width="12" height="8.5" fill="#f4f4f6"/><rect x="-6" y="-8" width="12" height="2" fill="#e05048"/><path d="M-5 -4h10M-5 -2h10" stroke="#b8bcc8" stroke-width="0.8"/><rect x="-4" y="3" width="8" height="5" fill="#d8dce8"/><rect x="-3" y="3.6" width="2.4" height="3.8" fill="#333"/></g><g transform="translate(133.5,14.8) scale(0.68)"><path d="M-8 -8h16v16h-14l-2 -2z" fill="#4868b0" stroke="#283c70" stroke-width="1"/><rect x="-6" y="-8" width="12" height="8.5" fill="#f4f4f6"/><rect x="-6" y="-8" width="12" height="2" fill="#e05048"/><path d="M-5 -4h10M-5 -2h10" stroke="#b8bcc8" stroke-width="0.8"/><rect x="-4" y="3" width="8" height="5" fill="#d8dce8"/><rect x="-3" y="3.6" width="2.4" height="3.8" fill="#333"/></g>
<g transform="translate(155.5,8) scale(0.62)"><path d="M-8 -8h16v16h-14l-2 -2z" fill="#4868b0" stroke="#283c70" stroke-width="1"/><rect x="-6" y="-8" width="12" height="8.5" fill="#f4f4f6"/><rect x="-6" y="-8" width="12" height="2" fill="#e05048"/><path d="M-5 -4h10M-5 -2h10" stroke="#b8bcc8" stroke-width="0.8"/><rect x="-4" y="3" width="8" height="5" fill="#d8dce8"/><rect x="-3" y="3.6" width="2.4" height="3.8" fill="#333"/></g><path d="M159 13.5l5 -2l5 2v5.5l-5 2.5l-5 -2.5z" fill="#8a8d92" stroke="#444" stroke-width="0.7"/><path d="M159 13.5l5 2.2l5 -2.2M164 15.7v5.8" fill="none" stroke="#444" stroke-width="0.7"/><path d="M164 15.7l5 -2.2v5.5l-5 2.5z" fill="#5c5f64"/><path d="M163 6c3 -2 6 0 5.5 4l2 -0.5l-3 3.5l-3 -3l2 0.3c0.3 -2 -1 -3.2 -3.5 -2.3z" fill="#38b838" stroke="#1a7a1a" stroke-width="0.5"/>
<rect x="179" y="4.5" width="10" height="8" fill="#eaf0fa" stroke="#8a94a8" stroke-width="0.8"/><path d="M184 5l3.2 3.5h-2v3h-2.4v-3h-2z" fill="#28b028"/><path d="M175.5 12.5h17v6.5h-17z" fill="#e4e6ea" stroke="#777" stroke-width="0.9"/><path d="M176.5 19h15v1.6h-15z" fill="#9a9ea8"/><path d="M177 15.5h14" stroke="#555" stroke-width="1.2"/>
<circle cx="207" cy="12" r="9.6" fill="#6a9a44" stroke="#4c7030" stroke-width="1"/><path d="M210 15l6 6" stroke="#b8bcc4" stroke-width="2.6" stroke-linecap="round"/><circle cx="205.5" cy="11" r="5.8" fill="url(#mag)" stroke="#a8b4c8" stroke-width="1.6"/>
<g transform="translate(232,12) scale(0.95,0.95)"><path d="M-8 -2l7 -7v4.5c6 0 9 4 8 11c-1.5 -4 -4 -5.5 -8 -5.5v4.5z" fill="#a4a8b0" stroke="#7a7f88" stroke-width="0.6"/></g><g transform="translate(254.5,12) scale(-0.95,0.95)"><path d="M-8 -2l7 -7v4.5c6 0 9 4 8 11c-1.5 -4 -4 -5.5 -8 -5.5v4.5z" fill="#a4a8b0" stroke="#7a7f88" stroke-width="0.6"/></g>
<g transform="translate(281,11) scale(0.95,0.95)"><path d="M-8 -2l7 -7v4.5c6 0 9 4 8 11c-1.5 -4 -4 -5.5 -8 -5.5v4.5z" fill="#5b93dc" stroke="#2d5fa8" stroke-width="0.6"/></g><path d="M270.5 11h6l-2.2 4.2l2.2 4.8h-6l2.2 -4.8z" fill="#c8a868" stroke="#6a5020" stroke-width="0.8"/>
<path d="M295.5 9.5h6" stroke="#111" stroke-width="1.2"/><path d="M295 12h7l-3.5 3.5z" fill="#111"/>
<path d="M1799.5 10.5h10" stroke="#111" stroke-width="1"/>
<path d="M1844.5 7.5h7v7h-7z M1846.5 7.5v-2h7v7h-2" fill="none" stroke="#111" stroke-width="1"/>
<path d="M1890 5l10 10M1900 5l-10 10" stroke="#111" stroke-width="1.1"/>
<path d="M1870 36.500h9" stroke="#8e8a84" stroke-width="1"/>
<path d="M1888.500 31.500h6v6h-6z M1890.500 31.500v-2h6v6h-2" fill="none" stroke="#8e8a84" stroke-width="1"/>
<path d="M1906 28.500l8.500 8.500M1914.500 28.500l-8.500 8.500" stroke="#8e8a84" stroke-width="1"/></svg>

<div id="leftpanel" class="abs"></div>
<div id="viewport" class="abs"></div>
<svg class="abs" style="left:0;top:0" width="1920" height="1048" viewBox="0 0 1920 1048" shape-rendering="crispEdges">
<polygon points="793.8,378.0 813.9,378.0 813.5,478.0 792.0,478.0" fill="#b3b3b3" stroke="#000" stroke-width="1" />
<line x1="804.0" y1="378.0" x2="803.0" y2="478.0" stroke="#000" stroke-width="1" />
<polygon points="912.2,374.0 922.0,374.0 922.0,410.0 912.0,410.0" fill="#b3b3b3" stroke="#000" stroke-width="1" />
<polygon points="922.0,374.0 922.0,410.0 937.4,410.0 937.4,374.0" fill="#000" stroke="#000" stroke-width="1" />
<polygon points="924.5,374.0 924.5,410.0 928.5,410.0 928.5,374.0" fill="#8e7b7d" stroke="none" stroke-width="0" />
<polygon points="931.2,374.0 931.2,410.0 935.2,410.0 935.2,374.0" fill="#8e7b7d" stroke="none" stroke-width="0" />
<polygon points="1054.9,369.0 1064.0,369.0 1063.5,472.0 1054.0,472.0" fill="#b3b3b3" stroke="#000" stroke-width="1" />
<polygon points="1163.2,364.0 1171.8,364.0 1172.0,470.0 1163.0,470.0" fill="#b3b3b3" stroke="#000" stroke-width="1" />
<polygon points="1172.0,364.0 1172.0,470.0 1187.0,470.0 1187.0,364.0" fill="#000" stroke="#000" stroke-width="1" />
<polygon points="1174.4,364.0 1174.4,470.0 1178.3,470.0 1178.3,364.0" fill="#8e7b7d" stroke="none" stroke-width="0" />
<polygon points="1181.0,364.0 1181.0,470.0 1184.9,470.0 1184.9,364.0" fill="#8e7b7d" stroke="none" stroke-width="0" />
<polygon points="1187.0,363.0 1200.4,362.5 1200.4,426.0 1187.0,426.0" fill="#c6c6c6" stroke="#000" stroke-width="1" />
<rect x="1194.0" y="426.0" width="11.0" height="24.0" fill="#8e7b7d" stroke="none" stroke-width="0" />
<polygon points="1201.6,362.0 1207.5,362.0 1207.5,470.0 1201.6,470.0" fill="#b3b3b3" stroke="#000" stroke-width="1" />
<polygon points="799.3,686.0 808.2,686.0 807.2,820.6 799.5,820.6" fill="#b3b3b3" stroke="#000" stroke-width="1" />
<polygon points="1038.7,674.0 1048.0,674.0 1047.5,811.0 1038.7,811.0" fill="#b3b3b3" stroke="#000" stroke-width="1" />
<polygon points="726.8,825.9 1164.0,810.0 1203.0,893.2 726.8,912.7" fill="#cfcfcf" stroke="#000" stroke-width="1" />
<polygon points="726.8,825.9 1164.0,810.0 1166.5,815.0 726.8,831.5" fill="#dcdcdc" stroke="#000" stroke-width="1" />
<ellipse cx="735.0" cy="857.0" rx="6.0" ry="2.2" fill="#48608a" stroke="#000" stroke-width="1" shape-rendering="auto" />
<polygon points="1164.0,812.6 1183.6,812.6 1208.0,860.0 1208.0,893.0 1203.0,893.2" fill="#c6c6c6" stroke="#000" stroke-width="1" />
<line x1="1170.0" y1="813.0" x2="1206.0" y2="886.0" stroke="#000" stroke-width="1" />
<line x1="1176.0" y1="813.0" x2="1208.0" y2="872.0" stroke="#000" stroke-width="1.6" />
<polygon points="1163.4,668.0 1183.6,668.0 1183.6,812.6 1163.4,812.6" fill="#b3b3b3" stroke="#000" stroke-width="1" />
<line x1="1170.0" y1="668.0" x2="1170.0" y2="812.0" stroke="#000" stroke-width="1" />
<line x1="1177.0" y1="668.0" x2="1177.0" y2="812.0" stroke="#fff" stroke-width="1" />
<polygon points="1183.6,668.0 1208.0,667.0 1208.0,860.0 1183.6,812.6" fill="#c6c6c6" stroke="#000" stroke-width="1" />
<polygon points="842.5,684.0 852.5,684.0 851.0,908.4 842.4,908.4" fill="#b3b3b3" stroke="#000" stroke-width="1" />
<line x1="848.0" y1="684.0" x2="847.5" y2="908.0" stroke="#000" stroke-width="1.5" />
<polygon points="1080.9,673.0 1091.5,673.0 1091.5,897.8 1081.0,897.8" fill="#b3b3b3" stroke="#000" stroke-width="1" />
<line x1="1087.5" y1="673.0" x2="1087.5" y2="897.0" stroke="#000" stroke-width="1.5" />
<polygon points="953.6,681.0 964.8,681.0 964.0,861.0 955.0,861.0" fill="#b3b3b3" stroke="#000" stroke-width="1" />
<rect x="953.6" y="678.7" width="14.6" height="26.0" fill="#c6c6c6" stroke="#000" stroke-width="1" />
<line x1="953.6" y1="700.0" x2="968.0" y2="700.0" stroke="#000" stroke-width="1" />
<rect x="922.7" y="790.3" width="14.6" height="29.0" fill="#c6c6c6" stroke="#000" stroke-width="1" />
<line x1="927.0" y1="792.0" x2="927.0" y2="818.0" stroke="#000" stroke-width="1" />
<line x1="931.0" y1="792.0" x2="931.0" y2="818.0" stroke="#000" stroke-width="1" />
<line x1="934.0" y1="792.0" x2="934.0" y2="818.0" stroke="#000" stroke-width="1" />
<rect x="951.6" y="879.0" width="14.0" height="26.0" fill="#c6c6c6" stroke="#000" stroke-width="1" />
<line x1="956.0" y1="881.0" x2="956.0" y2="903.0" stroke="#000" stroke-width="1" />
<polygon points="737.0,598.0 835.0,594.0 834.5,651.0 737.7,654.5" fill="#cfcfcf" stroke="none" stroke-width="1" />
<polygon points="855.7,588.0 953.0,585.0 952.0,647.5 855.7,651.0" fill="#cfcfcf" stroke="none" stroke-width="1" />
<polygon points="988.0,567.0 1086.0,565.0 1085.0,640.0 988.0,644.0" fill="#cfcfcf" stroke="none" stroke-width="1" />
<polygon points="1105.0,566.0 1204.0,563.0 1203.0,637.0 1105.0,640.0" fill="#cfcfcf" stroke="none" stroke-width="1" />
<polygon points="856.0,558.0 926.0,555.0 926.0,592.0 856.0,594.0" fill="#c0c0c0" stroke="none" stroke-width="0" />
<line x1="858.0" y1="572.0" x2="924.0" y2="570.0" stroke="#000" stroke-width="1.2" />
<line x1="858.0" y1="578.0" x2="924.0" y2="576.0" stroke="#000" stroke-width="1.2" />
<line x1="858.0" y1="584.0" x2="924.0" y2="582.0" stroke="#000" stroke-width="1.2" />
<rect x="743.0" y="506.0" width="72.6" height="91.0" fill="#b3b3b3" stroke="#000" stroke-width="1" />
<polygon points="746.8,492.0 767.0,492.0 777.0,503.5 750.0,505.0" fill="#b4b4d2" stroke="#000" stroke-width="1" />
<polygon points="741.0,497.0 746.8,492.0 750.0,505.0 743.0,506.0" fill="#9090b0" stroke="#000" stroke-width="1" />
<line x1="749.0" y1="494.0" x2="753.0" y2="504.0" stroke="#000" stroke-width="0.8" />
<line x1="766.0" y1="493.0" x2="773.0" y2="503.0" stroke="#000" stroke-width="0.8" />
<polygon points="784.0,480.0 789.0,476.0 809.0,476.0 813.8,480.0 813.8,487.0 784.0,487.0" fill="#c6c6c6" stroke="#000" stroke-width="1" />
<ellipse cx="799.0" cy="479.5" rx="9.0" ry="2.6" fill="#e4e4e4" stroke="#000" stroke-width="1" shape-rendering="auto" />
<ellipse cx="799.0" cy="479.5" rx="4.5" ry="1.3" fill="#b3b3b3" stroke="#000" stroke-width="1" shape-rendering="auto" />
<rect x="786.5" y="487.0" width="8.0" height="17.0" fill="#cfcfcf" stroke="#000" stroke-width="1" />
<rect x="804.5" y="487.0" width="8.5" height="17.0" fill="#cfcfcf" stroke="#000" stroke-width="1" />
<rect x="794.5" y="489.0" width="10.0" height="12.0" fill="#8a8a8a" stroke="#000" stroke-width="1" />
<line x1="794.5" y1="495.0" x2="804.5" y2="495.0" stroke="#000" stroke-width="1" />
<rect x="796.0" y="490.0" width="7.0" height="4.0" fill="#cfcfcf" stroke="#000" stroke-width="1" />
<line x1="789.0" y1="487.0" x2="789.0" y2="504.0" stroke="#fff" stroke-width="1.2" />
<line x1="807.0" y1="487.0" x2="807.0" y2="504.0" stroke="#fff" stroke-width="1.2" />
<ellipse cx="748.0" cy="517.0" rx="1.8" ry="1.8" fill="#111" stroke="none" stroke-width="0" shape-rendering="auto" />
<ellipse cx="784.8" cy="513.0" rx="1.6" ry="1.6" fill="#111" stroke="none" stroke-width="0" shape-rendering="auto" />
<ellipse cx="792.3" cy="512.3" rx="2.6" ry="2.6" fill="#111" stroke="none" stroke-width="0" shape-rendering="auto" />
<ellipse cx="809.5" cy="511.8" rx="2.6" ry="2.6" fill="#111" stroke="none" stroke-width="0" shape-rendering="auto" />
<ellipse cx="751.0" cy="566.0" rx="1.3" ry="1.3" fill="#111" stroke="none" stroke-width="0" shape-rendering="auto" />
<ellipse cx="761.0" cy="573.0" rx="1.6" ry="1.6" fill="#111" stroke="none" stroke-width="0" shape-rendering="auto" />
<ellipse cx="776.0" cy="573.0" rx="1.6" ry="1.6" fill="#111" stroke="none" stroke-width="0" shape-rendering="auto" />
<ellipse cx="791.0" cy="587.5" rx="2.2" ry="2.2" fill="#111" stroke="none" stroke-width="0" shape-rendering="auto" />
<ellipse cx="772.0" cy="567.0" rx="1.8" ry="1.8" fill="#111" stroke="none" stroke-width="0" shape-rendering="auto" />
<ellipse cx="748.0" cy="517.0" rx="0.9" ry="0.9" fill="#cfcfcf" stroke="none" stroke-width="0" shape-rendering="auto" />
<ellipse cx="784.8" cy="513.0" rx="0.8" ry="0.8" fill="#cfcfcf" stroke="none" stroke-width="0" shape-rendering="auto" />
<rect x="793.0" y="514.5" width="17.5" height="20.0" fill="#3c3c3c" stroke="#000" stroke-width="1" />
<rect x="796.0" y="516.0" width="3.5" height="17.0" fill="#9a9a9a" stroke="none" stroke-width="0" />
<rect x="803.0" y="516.0" width="3.0" height="17.0" fill="#8a8a8a" stroke="none" stroke-width="0" />
<line x1="800.5" y1="515.0" x2="800.5" y2="534.0" stroke="#ddd" stroke-width="1" />
<polygon points="794.0,534.0 811.0,534.0 812.0,540.0 793.0,540.0" fill="#c6c6c6" stroke="#000" stroke-width="1" />
<rect x="793.0" y="540.0" width="19.0" height="10.0" fill="#4a4a4a" stroke="#000" stroke-width="1" />
<polygon points="796.0,541.0 803.0,541.0 806.0,549.0 796.0,549.0" fill="#cfcfcf" stroke="#000" stroke-width="1" />
<line x1="804.0" y1="541.0" x2="810.0" y2="549.0" stroke="#ddd" stroke-width="1" />
<rect x="796.0" y="550.0" width="17.0" height="14.0" fill="#b3b3b3" stroke="#000" stroke-width="1" />
<rect x="800.0" y="552.0" width="12.0" height="10.0" fill="#c6c6c6" stroke="#000" stroke-width="1" />
<rect x="793.0" y="556.0" width="5.0" height="8.0" fill="#666" stroke="#000" stroke-width="1" />
<rect x="796.0" y="564.0" width="16.0" height="12.0" fill="#9c9c9c" stroke="#000" stroke-width="1" />
<rect x="800.0" y="566.0" width="9.0" height="8.0" fill="#c6c6c6" stroke="#000" stroke-width="1" />
<rect x="794.0" y="570.0" width="5.0" height="5.0" fill="#555" stroke="#000" stroke-width="1" />
<ellipse cx="802.0" cy="580.0" rx="9.0" ry="4.0" fill="#e8e8e8" stroke="#000" stroke-width="1" shape-rendering="auto" />
<ellipse cx="802.0" cy="578.6" rx="9.0" ry="3.0" fill="#f4f4f4" stroke="#000" stroke-width="0.8" shape-rendering="auto" />
<rect x="799.0" y="584.0" width="6.0" height="3.0" fill="#777" stroke="#000" stroke-width="1" />
<ellipse cx="767.6" cy="558.8" rx="22.6" ry="22.6" fill="none" stroke="#000" stroke-width="1.1" shape-rendering="auto" />
<polygon points="757.0,538.0 769.0,538.0 769.0,546.0 774.5,546.0 774.5,560.0 757.0,560.0" fill="#c6c6c6" stroke="#000" stroke-width="1.3" />
<polygon points="761.0,545.0 762.5,542.5 764.0,545.0" fill="#111" stroke="none" stroke-width="0" />
<polygon points="766.0,545.0 767.5,542.5 769.0,545.0" fill="#111" stroke="none" stroke-width="0" />
<ellipse cx="769.5" cy="555.5" rx="4.2" ry="4.2" fill="#2a2a2a" stroke="#000" stroke-width="1" shape-rendering="auto" />
<rect x="770.0" y="556.5" width="4.0" height="4.0" fill="#9a7f80" stroke="none" stroke-width="0" />
<polygon points="757.0,560.0 774.0,558.0 798.0,556.5 798.0,560.0 776.0,562.0 757.0,563.0" fill="#cfcfcf" stroke="#000" stroke-width="1" />
<rect x="776.0" y="563.0" width="11.0" height="8.0" fill="#e0e0e0" stroke="#000" stroke-width="1" />
<ellipse cx="772.0" cy="567.5" rx="1.8" ry="1.8" fill="#9a7f80" stroke="#000" stroke-width="1" shape-rendering="auto" />
<ellipse cx="748.6" cy="554.5" rx="3.0" ry="3.0" fill="#f4f4f4" stroke="#000" stroke-width="0.8" shape-rendering="auto" />
<polygon points="746.0,557.0 751.0,557.0 750.0,566.0 747.0,566.0" fill="#c6c6c6" stroke="#000" stroke-width="1" />
<line x1="745.0" y1="560.0" x2="757.0" y2="560.0" stroke="#000" stroke-width="1.4" />
<rect x="739.5" y="576.0" width="4.0" height="5.0" fill="#b02020" stroke="none" stroke-width="0" />
<rect x="740.0" y="582.0" width="3.5" height="9.0" fill="#555" stroke="#000" stroke-width="1" />
<polygon points="739.0,592.0 744.0,592.0 744.0,606.0" fill="#333" stroke="#000" stroke-width="1" />
<rect x="817.5" y="556.0" width="17.0" height="52.0" fill="#b3b3b3" stroke="#000" stroke-width="1" />
<polygon points="818.0,552.0 826.0,549.0 835.0,551.0 835.0,556.0 818.0,556.0" fill="#888" stroke="#000" stroke-width="1" />
<rect x="822.0" y="557.0" width="8.0" height="5.0" fill="#222" stroke="#000" stroke-width="1" />
<rect x="825.0" y="574.0" width="9.0" height="7.0" fill="#c6c6c6" stroke="#000" stroke-width="1" />
<rect x="825.0" y="583.0" width="9.0" height="7.0" fill="#c6c6c6" stroke="#000" stroke-width="1" />
<ellipse cx="823.0" cy="570.0" rx="2.0" ry="2.0" fill="#111" stroke="none" stroke-width="0" shape-rendering="auto" />
<ellipse cx="822.0" cy="565.0" rx="1.5" ry="1.5" fill="#fff" stroke="none" stroke-width="0" shape-rendering="auto" />
<rect x="818.0" y="562.0" width="4.0" height="40.0" fill="#8a8a8a" stroke="#000" stroke-width="1" />
<rect x="744.5" y="586.0" width="4.0" height="26.0" fill="#c6c6c6" stroke="#000" stroke-width="1" />
<rect x="749.0" y="588.0" width="22.0" height="6.0" fill="#888" stroke="#000" stroke-width="1" />
<rect x="750.0" y="594.0" width="21.0" height="18.0" fill="#c6c6c6" stroke="#000" stroke-width="1" />
<polygon points="753.0,597.0 768.0,596.0 768.0,610.0 757.0,610.0" fill="#b3b3b3" stroke="#000" stroke-width="1" />
<ellipse cx="762.0" cy="603.0" rx="2.2" ry="2.2" fill="#fff" stroke="#000" stroke-width="0.8" shape-rendering="auto" />
<rect x="773.0" y="584.0" width="13.0" height="10.0" fill="#b3b3b3" stroke="#000" stroke-width="1" />
<polygon points="771.0,594.0 790.0,594.0 787.0,598.0 774.0,598.0" fill="#777" stroke="#000" stroke-width="1" />
<rect x="777.0" y="598.0" width="3.0" height="14.0" fill="#b3b3b3" stroke="#000" stroke-width="1" />
<rect x="783.0" y="598.0" width="2.5" height="10.0" fill="#b3b3b3" stroke="#000" stroke-width="1" />
<polygon points="769.0,586.0 773.0,584.0 783.0,612.0 779.0,612.0" fill="#c6c6c6" stroke="#000" stroke-width="1" />
<polygon points="781.0,609.0 834.0,605.0 834.5,638.0 783.0,641.0" fill="#cfcfcf" stroke="#000" stroke-width="1" />
<line x1="783.0" y1="617.5" x2="834.0" y2="614.0" stroke="#000" stroke-width="1.7" />
<line x1="783.0" y1="622.1" x2="834.0" y2="618.6" stroke="#000" stroke-width="1.7" />
<line x1="783.0" y1="626.7" x2="834.0" y2="623.2" stroke="#000" stroke-width="1.7" />
<line x1="783.0" y1="631.3" x2="834.0" y2="627.8" stroke="#000" stroke-width="1.7" />
<line x1="783.0" y1="635.9" x2="834.0" y2="632.4" stroke="#000" stroke-width="1.7" />
<line x1="783.0" y1="615.0" x2="834.0" y2="611.5" stroke="#fff" stroke-width="1.2" />
<rect x="743.0" y="613.0" width="35.5" height="21.5" fill="#4a4a4a" stroke="#000" stroke-width="1" />
<line x1="744.0" y1="618.0" x2="778.0" y2="618.0" stroke="#6a6a6a" stroke-width="1.2" />
<line x1="744.0" y1="624.0" x2="778.0" y2="624.0" stroke="#222" stroke-width="1" />
<line x1="744.0" y1="629.0" x2="778.0" y2="629.0" stroke="#333" stroke-width="1" />
<rect x="778.5" y="609.0" width="5.0" height="32.0" fill="#c6c6c6" stroke="#000" stroke-width="1" />
<polygon points="803.9,592.0 809.0,590.5 820.0,613.0 814.7,615.0" fill="#c6c6c6" stroke="#000" stroke-width="1" />
<polygon points="813.0,593.0 822.0,591.0 826.0,608.0 817.0,611.0" fill="#666" stroke="#000" stroke-width="1" />
<line x1="815.0" y1="596.0" x2="823.0" y2="594.0" stroke="#bbb" stroke-width="1" />
<line x1="816.0" y1="601.0" x2="824.5" y2="599.0" stroke="#222" stroke-width="1" />
<polygon points="818.0,612.0 834.0,611.0 834.0,617.0 819.0,618.0" fill="#c6c6c6" stroke="#000" stroke-width="1" />
<ellipse cx="798.4" cy="606.8" rx="9.5" ry="3.2" fill="#7a7a7a" stroke="#333" stroke-width="1" shape-rendering="auto" />
<ellipse cx="798.4" cy="607.6" rx="8.0" ry="2.2" fill="#e4e4e4" stroke="none" stroke-width="0" shape-rendering="auto" />
<ellipse cx="764.0" cy="645.8" rx="8.5" ry="3.0" fill="#8a8a8a" stroke="#333" stroke-width="1" shape-rendering="auto" />
<ellipse cx="764.0" cy="646.6" rx="7.0" ry="2.0" fill="#eeeeee" stroke="none" stroke-width="0" shape-rendering="auto" />
<rect x="826.0" y="618.0" width="3.0" height="12.0" fill="#9999bb" stroke="#000" stroke-width="1" />
<rect x="827.0" y="630.0" width="2.0" height="8.0" fill="#aa0000" stroke="none" stroke-width="0" />
<rect x="913.4" y="409.0" width="23.6" height="31.0" fill="#a0a0c0" stroke="#000" stroke-width="1" />
<polygon points="913.4,409.0 917.0,405.5 933.0,405.5 937.0,409.0" fill="#c0c0da" stroke="#000" stroke-width="1" />
<ellipse cx="925.0" cy="407.2" rx="2.0" ry="0.9" fill="#555" stroke="none" stroke-width="0" shape-rendering="auto" />
<rect x="918.0" y="412.0" width="13.0" height="26.0" fill="#b4b4d0" stroke="#000" stroke-width="0.8" />
<line x1="915.5" y1="410.0" x2="915.5" y2="439.0" stroke="#000" stroke-width="0.8" />
<rect x="937.5" y="413.0" width="17.5" height="7.5" fill="#b9a3a3" stroke="none" stroke-width="0" />
<line x1="940.0" y1="433.0" x2="955.0" y2="432.0" stroke="#ccc" stroke-width="1" />
<rect x="911.6" y="440.0" width="23.6" height="58.0" fill="#b3b3b3" stroke="#000" stroke-width="1" />
<rect x="914.5" y="451.0" width="18.0" height="45.0" fill="#c6c6c6" stroke="#000" stroke-width="0.9" />
<line x1="911.6" y1="445.0" x2="935.0" y2="445.0" stroke="#000" stroke-width="1" />
<rect x="935.2" y="440.0" width="19.8" height="50.0" fill="#d0d0d0" stroke="#000" stroke-width="1" />
<rect x="940.0" y="443.0" width="6.0" height="4.0" fill="#222" stroke="none" stroke-width="0" />
<line x1="947.0" y1="444.0" x2="954.0" y2="443.0" stroke="#000" stroke-width="1.2" />
<rect x="940.0" y="450.5" width="6.0" height="4.0" fill="#222" stroke="none" stroke-width="0" />
<line x1="947.0" y1="451.5" x2="954.0" y2="450.5" stroke="#000" stroke-width="1.2" />
<rect x="940.0" y="458.0" width="6.0" height="4.0" fill="#222" stroke="none" stroke-width="0" />
<line x1="947.0" y1="459.0" x2="954.0" y2="458.0" stroke="#000" stroke-width="1.2" />
<rect x="940.0" y="465.5" width="6.0" height="4.0" fill="#222" stroke="none" stroke-width="0" />
<line x1="947.0" y1="466.5" x2="954.0" y2="465.5" stroke="#000" stroke-width="1.2" />
<rect x="940.0" y="473.0" width="6.0" height="4.0" fill="#222" stroke="none" stroke-width="0" />
<line x1="947.0" y1="474.0" x2="954.0" y2="473.0" stroke="#000" stroke-width="1.2" />
<rect x="940.0" y="480.5" width="6.0" height="4.0" fill="#222" stroke="none" stroke-width="0" />
<line x1="947.0" y1="481.5" x2="954.0" y2="480.5" stroke="#000" stroke-width="1.2" />
<line x1="945.0" y1="440.0" x2="945.0" y2="490.0" stroke="#000" stroke-width="1" />
<polygon points="899.0,479.8 911.6,479.8 911.6,498.0 901.0,498.0" fill="#cfcfcf" stroke="#000" stroke-width="1" />
<line x1="900.0" y1="481.0" x2="903.0" y2="489.0" stroke="#000" stroke-width="1" />
<line x1="902.0" y1="481.0" x2="905.0" y2="489.0" stroke="#000" stroke-width="1" />
<line x1="904.0" y1="481.0" x2="907.0" y2="489.0" stroke="#000" stroke-width="1" />
<line x1="906.0" y1="481.0" x2="909.0" y2="489.0" stroke="#000" stroke-width="1" />
<line x1="908.0" y1="481.0" x2="911.0" y2="489.0" stroke="#000" stroke-width="1" />
<rect x="900.8" y="490.0" width="53.4" height="9.0" fill="#cfcfcf" stroke="#000" stroke-width="1" />
<line x1="900.8" y1="494.0" x2="954.0" y2="494.0" stroke="#000" stroke-width="1" />
<rect x="935.0" y="486.0" width="19.0" height="12.0" fill="#e0e0e0" stroke="#000" stroke-width="1" />
<polygon points="902.6,501.5 908.0,499.5 932.0,574.0 926.0,577.6" fill="#c6c6c6" stroke="#000" stroke-width="1" />
<line x1="905.0" y1="502.0" x2="929.0" y2="576.0" stroke="#000" stroke-width="1.6" />
<line x1="903.0" y1="503.0" x2="908.0" y2="501.0" stroke="#000" stroke-width="1.3" />
<line x1="905.6" y1="511.1" x2="910.6" y2="509.1" stroke="#000" stroke-width="1.3" />
<line x1="908.2" y1="519.2" x2="913.2" y2="517.2" stroke="#000" stroke-width="1.3" />
<line x1="910.9" y1="527.4" x2="915.9" y2="525.4" stroke="#000" stroke-width="1.3" />
<line x1="913.5" y1="535.5" x2="918.5" y2="533.5" stroke="#000" stroke-width="1.3" />
<line x1="916.1" y1="543.6" x2="921.1" y2="541.6" stroke="#000" stroke-width="1.3" />
<line x1="918.8" y1="551.8" x2="923.8" y2="549.8" stroke="#000" stroke-width="1.3" />
<line x1="921.4" y1="559.9" x2="926.4" y2="557.9" stroke="#000" stroke-width="1.3" />
<rect x="904.0" y="499.0" width="30.0" height="7.0" fill="#555" stroke="#000" stroke-width="1" />
<rect x="918.0" y="500.0" width="10.0" height="5.0" fill="#a02020" stroke="none" stroke-width="0" />
<polygon points="858.0,527.0 862.0,514.0 879.0,511.5 885.0,526.0" fill="#b4b4d2" stroke="#000" stroke-width="1" />
<polygon points="862.0,514.0 866.0,510.5 877.0,509.5 879.0,511.5" fill="#c8c8e0" stroke="#000" stroke-width="1" />
<line x1="865.0" y1="512.5" x2="867.0" y2="524.0" stroke="#000" stroke-width="0.8" />
<line x1="869.0" y1="512.5" x2="871.0" y2="524.0" stroke="#000" stroke-width="0.8" />
<line x1="873.0" y1="512.5" x2="875.0" y2="524.0" stroke="#000" stroke-width="0.8" />
<line x1="877.0" y1="512.5" x2="879.0" y2="524.0" stroke="#000" stroke-width="0.8" />
<rect x="858.0" y="527.0" width="31.0" height="33.0" fill="#b3b3b3" stroke="#000" stroke-width="1" />
<ellipse cx="876.3" cy="545.0" rx="7.0" ry="7.0" fill="#555" stroke="#000" stroke-width="1" shape-rendering="auto" />
<ellipse cx="876.3" cy="545.0" rx="4.0" ry="4.0" fill="#999" stroke="#000" stroke-width="1" shape-rendering="auto" />
<ellipse cx="876.3" cy="545.0" rx="2.0" ry="2.0" fill="#333" stroke="#000" stroke-width="1" shape-rendering="auto" />
<ellipse cx="861.0" cy="530.0" rx="1.4" ry="1.4" fill="#111" stroke="none" stroke-width="0" shape-rendering="auto" />
<ellipse cx="886.0" cy="530.0" rx="1.4" ry="1.4" fill="#111" stroke="none" stroke-width="0" shape-rendering="auto" />
<ellipse cx="861.0" cy="556.0" rx="1.4" ry="1.4" fill="#111" stroke="none" stroke-width="0" shape-rendering="auto" />
<rect x="858.0" y="560.0" width="52.0" height="7.0" fill="#333" stroke="#000" stroke-width="1" />
<rect x="866.0" y="553.0" width="22.0" height="8.0" fill="#777" stroke="#000" stroke-width="1" />
<rect x="888.0" y="548.0" width="22.0" height="14.0" fill="#b3b3b3" stroke="#000" stroke-width="1" />
<rect x="892.0" y="551.0" width="14.0" height="9.0" fill="#888" stroke="#000" stroke-width="1" />
<line x1="860.0" y1="563.0" x2="908.0" y2="562.0" stroke="#aaa" stroke-width="1.2" />
<rect x="858.0" y="567.0" width="60.0" height="8.0" fill="#c6c6c6" stroke="#000" stroke-width="1" />
<rect x="872.0" y="575.0" width="34.0" height="9.0" fill="#444" stroke="#000" stroke-width="1" />
<line x1="874.0" y1="575.0" x2="874.0" y2="584.0" stroke="#bbb" stroke-width="1" />
<line x1="878.5" y1="575.0" x2="878.5" y2="584.0" stroke="#bbb" stroke-width="1" />
<line x1="883.0" y1="575.0" x2="883.0" y2="584.0" stroke="#bbb" stroke-width="1" />
<line x1="887.5" y1="575.0" x2="887.5" y2="584.0" stroke="#bbb" stroke-width="1" />
<line x1="892.0" y1="575.0" x2="892.0" y2="584.0" stroke="#bbb" stroke-width="1" />
<line x1="896.5" y1="575.0" x2="896.5" y2="584.0" stroke="#bbb" stroke-width="1" />
<line x1="901.0" y1="575.0" x2="901.0" y2="584.0" stroke="#bbb" stroke-width="1" />
<rect x="856.0" y="567.0" width="6.0" height="80.0" fill="#c6c6c6" stroke="#000" stroke-width="1" />
<polygon points="919.5,553.6 953.0,553.0 953.0,576.0 926.3,576.0 919.5,565.0" fill="#d4d4d4" stroke="#000" stroke-width="1" />
<rect x="918.9" y="540.0" width="22.0" height="14.0" fill="#b3b3b3" stroke="#000" stroke-width="1" />
<rect x="941.0" y="534.0" width="13.0" height="23.0" fill="#4a4a4a" stroke="#000" stroke-width="1" />
<line x1="943.0" y1="540.0" x2="953.0" y2="540.0" stroke="#222" stroke-width="1" />
<line x1="943.0" y1="546.0" x2="953.0" y2="546.0" stroke="#777" stroke-width="1" />
<rect x="926.0" y="575.0" width="27.5" height="71.0" fill="#b3b3b3" stroke="#000" stroke-width="1" />
<line x1="926.0" y1="580.0" x2="953.5" y2="578.5" stroke="#000" stroke-width="1" />
<ellipse cx="940.0" cy="578.0" rx="1.2" ry="1.2" fill="#111" stroke="none" stroke-width="0" shape-rendering="auto" />
<polygon points="926.0,575.0 932.0,571.0 955.0,571.0 953.5,575.0" fill="#cfcfcf" stroke="#000" stroke-width="1" />
<polygon points="859.0,590.0 926.0,588.0 926.0,593.4 859.0,595.4" fill="#d6d6d6" stroke="#000" stroke-width="1.6" />
<polygon points="859.0,598.6 926.0,596.6 926.0,602.0 859.0,604.0" fill="#b2b2b2" stroke="#000" stroke-width="1.6" />
<polygon points="859.0,607.2 926.0,605.2 926.0,610.6 859.0,612.6" fill="#d6d6d6" stroke="#000" stroke-width="1.6" />
<polygon points="859.0,615.8 926.0,613.8 926.0,619.2 859.0,621.2" fill="#b2b2b2" stroke="#000" stroke-width="1.6" />
<polygon points="859.0,624.4 926.0,622.4 926.0,627.8 859.0,629.8" fill="#d6d6d6" stroke="#000" stroke-width="1.6" />
<polygon points="859.0,633.0 926.0,631.0 926.0,636.4 859.0,638.4" fill="#b2b2b2" stroke="#000" stroke-width="1.6" />
<polygon points="859.0,641.6 926.0,639.6 926.0,645.0 859.0,647.0" fill="#d6d6d6" stroke="#000" stroke-width="1.6" />
<polygon points="888.0,590.0 924.0,588.0 924.0,598.0 893.0,600.0" fill="#c6c6c6" stroke="#000" stroke-width="1" />
<line x1="896.0" y1="595.0" x2="921.0" y2="593.0" stroke="#000" stroke-width="1.6" />
<ellipse cx="899.0" cy="594.8" rx="1.0" ry="1.0" fill="#fff" stroke="none" stroke-width="0" shape-rendering="auto" />
<ellipse cx="904.0" cy="594.6" rx="1.0" ry="1.0" fill="#fff" stroke="none" stroke-width="0" shape-rendering="auto" />
<ellipse cx="909.0" cy="594.5" rx="1.0" ry="1.0" fill="#fff" stroke="none" stroke-width="0" shape-rendering="auto" />
<ellipse cx="914.0" cy="594.3" rx="1.0" ry="1.0" fill="#fff" stroke="none" stroke-width="0" shape-rendering="auto" />
<ellipse cx="919.0" cy="594.2" rx="1.0" ry="1.0" fill="#fff" stroke="none" stroke-width="0" shape-rendering="auto" />
<polygon points="1147.0,499.0 1166.5,499.0 1166.5,526.0 1147.0,526.0" fill="#c6c6c6" stroke="#000" stroke-width="1" />
<polygon points="1172.0,470.0 1172.0,531.0 1187.0,531.0 1187.0,470.0" fill="#000" stroke="#000" stroke-width="1" />
<polygon points="1174.4,470.0 1174.4,531.0 1178.3,531.0 1178.3,470.0" fill="#8e7b7d" stroke="none" stroke-width="0" />
<polygon points="1181.0,470.0 1181.0,531.0 1184.9,531.0 1184.9,470.0" fill="#8e7b7d" stroke="none" stroke-width="0" />
<polygon points="991.0,471.0 1089.0,468.5 1089.0,482.0 991.0,485.0" fill="#1c1c1c" stroke="#000" stroke-width="1" />
<line x1="992.0" y1="473.4" x2="1089.0" y2="470.9" stroke="#e0e0e0" stroke-width="0.9" stroke-dasharray="23 7 9 6" shape-rendering="auto"/>
<line x1="992.0" y1="476.5" x2="1089.0" y2="474.0" stroke="#e0e0e0" stroke-width="0.9" stroke-dasharray="23 7 9 6" shape-rendering="auto"/>
<line x1="992.0" y1="479.6" x2="1089.0" y2="477.1" stroke="#e0e0e0" stroke-width="0.9" stroke-dasharray="23 7 9 6" shape-rendering="auto"/>
<line x1="992.0" y1="482.7" x2="1089.0" y2="480.2" stroke="#e0e0e0" stroke-width="0.9" stroke-dasharray="23 7 9 6" shape-rendering="auto"/>
<polygon points="991.0,485.0 1089.0,482.0 1089.0,503.0 991.0,506.0" fill="#b3b3b3" stroke="#000" stroke-width="1" />
<polygon points="1109.0,468.0 1207.0,464.5 1207.0,479.0 1109.0,481.5" fill="#1c1c1c" stroke="#000" stroke-width="1" />
<line x1="1110.0" y1="470.3" x2="1207.0" y2="466.8" stroke="#e0e0e0" stroke-width="0.9" stroke-dasharray="26 7 8 6" shape-rendering="auto"/>
<line x1="1110.0" y1="473.4" x2="1207.0" y2="469.9" stroke="#e0e0e0" stroke-width="0.9" stroke-dasharray="26 7 8 6" shape-rendering="auto"/>
<line x1="1110.0" y1="476.5" x2="1207.0" y2="473.0" stroke="#e0e0e0" stroke-width="0.9" stroke-dasharray="26 7 8 6" shape-rendering="auto"/>
<line x1="1110.0" y1="479.6" x2="1207.0" y2="476.1" stroke="#e0e0e0" stroke-width="0.9" stroke-dasharray="26 7 8 6" shape-rendering="auto"/>
<polygon points="1109.0,481.5 1207.0,479.0 1207.0,499.0 1109.0,502.0" fill="#b3b3b3" stroke="#000" stroke-width="1" />
<rect x="989.0" y="475.0" width="9.0" height="33.0" fill="#c6c6c6" stroke="#000" stroke-width="1" />
<line x1="993.0" y1="477.0" x2="993.0" y2="506.0" stroke="#000" stroke-width="1" />
<rect x="989.0" y="480.0" width="4.0" height="22.0" fill="#555" stroke="#000" stroke-width="1" />
<rect x="1031.6" y="484.0" width="30.7" height="34.0" fill="#b3b3b3" stroke="#000" stroke-width="1" />
<rect x="1041.0" y="495.0" width="14.0" height="27.0" fill="#2c2c2c" stroke="#000" stroke-width="1" />
<line x1="1045.0" y1="497.0" x2="1045.0" y2="520.0" stroke="#ccc" stroke-width="1" />
<line x1="1050.0" y1="497.0" x2="1050.0" y2="520.0" stroke="#ccc" stroke-width="1" />
<line x1="1042.0" y1="500.0" x2="1054.0" y2="500.0" stroke="#ccc" stroke-width="0.8" />
<line x1="1042.0" y1="505.0" x2="1054.0" y2="505.0" stroke="#ccc" stroke-width="0.8" />
<line x1="1042.0" y1="510.0" x2="1054.0" y2="510.0" stroke="#ccc" stroke-width="0.8" />
<line x1="1042.0" y1="515.0" x2="1054.0" y2="515.0" stroke="#ccc" stroke-width="0.8" />
<polygon points="1038.0,522.0 1058.0,522.0 1060.0,529.0 1036.0,529.0" fill="#cfcfcf" stroke="#000" stroke-width="1" />
<ellipse cx="1035.0" cy="487.0" rx="1.4" ry="1.4" fill="#111" stroke="none" stroke-width="0" shape-rendering="auto" />
<ellipse cx="1059.0" cy="486.0" rx="1.4" ry="1.4" fill="#111" stroke="none" stroke-width="0" shape-rendering="auto" />
<ellipse cx="1035.0" cy="509.0" rx="1.4" ry="1.4" fill="#111" stroke="none" stroke-width="0" shape-rendering="auto" />
<ellipse cx="1059.0" cy="508.0" rx="1.4" ry="1.4" fill="#111" stroke="none" stroke-width="0" shape-rendering="auto" />
<polygon points="990.0,527.0 1086.0,523.5 1086.0,534.0 990.0,537.0" fill="#555" stroke="#000" stroke-width="1" />
<line x1="990.0" y1="530.0" x2="1086.0" y2="526.5" stroke="#ddd" stroke-width="1" />
<line x1="990.0" y1="533.5" x2="1086.0" y2="530.0" stroke="#000" stroke-width="1" />
<polygon points="990.0,537.0 1086.0,533.0 1085.0,565.0 990.0,568.0" fill="#b3b3b3" stroke="#000" stroke-width="1" />
<ellipse cx="1065.0" cy="539.0" rx="1.2" ry="1.2" fill="#111" stroke="none" stroke-width="0" shape-rendering="auto" />
<ellipse cx="1065.0" cy="560.0" rx="1.2" ry="1.2" fill="#111" stroke="none" stroke-width="0" shape-rendering="auto" />
<rect x="989.0" y="540.0" width="6.0" height="28.0" fill="#cfcfcf" stroke="#000" stroke-width="1" />
<polygon points="1107.0,524.0 1178.0,520.0 1180.0,531.0 1107.0,535.0" fill="#666" stroke="#000" stroke-width="1" />
<line x1="1107.0" y1="528.0" x2="1179.0" y2="524.5" stroke="#ddd" stroke-width="1" />
<polygon points="1107.0,535.0 1178.6,531.0 1178.6,563.0 1107.0,566.0" fill="#b3b3b3" stroke="#000" stroke-width="1" />
<ellipse cx="1133.0" cy="536.0" rx="1.2" ry="1.2" fill="#111" stroke="none" stroke-width="0" shape-rendering="auto" />
<ellipse cx="1167.0" cy="534.0" rx="1.2" ry="1.2" fill="#111" stroke="none" stroke-width="0" shape-rendering="auto" />
<ellipse cx="1133.0" cy="556.0" rx="1.2" ry="1.2" fill="#111" stroke="none" stroke-width="0" shape-rendering="auto" />
<ellipse cx="1167.0" cy="555.0" rx="1.2" ry="1.2" fill="#111" stroke="none" stroke-width="0" shape-rendering="auto" />
<polygon points="1133.0,519.5 1172.0,517.0 1176.0,521.0 1133.0,524.0" fill="#c6c6c6" stroke="#000" stroke-width="1" />
<ellipse cx="1145.0" cy="520.5" rx="1.0" ry="1.0" fill="#a02020" stroke="none" stroke-width="0" shape-rendering="auto" />
<ellipse cx="1154.0" cy="519.9" rx="1.0" ry="1.0" fill="#a02020" stroke="none" stroke-width="0" shape-rendering="auto" />
<ellipse cx="1163.0" cy="519.3" rx="1.0" ry="1.0" fill="#a02020" stroke="none" stroke-width="0" shape-rendering="auto" />
<rect x="999.7" y="570.5" width="35.1" height="42.8" fill="#b8863b" stroke="#000" stroke-width="1" />
<rect x="1013.0" y="572.0" width="15.0" height="7.0" fill="#c6c6c6" stroke="#000" stroke-width="1" />
<rect x="1034.8" y="569.4" width="29.7" height="11.0" fill="#12a0a6" stroke="#000" stroke-width="1" />
<line x1="1035.0" y1="572.0" x2="1064.0" y2="572.0" stroke="#0a6f74" stroke-width="1" />
<rect x="1034.8" y="576.0" width="7.0" height="5.0" fill="#c79a50" stroke="none" stroke-width="0" />
<polygon points="1064.0,569.0 1067.0,569.0 1067.0,583.0 1062.0,583.0" fill="#12a0a6" stroke="#000" stroke-width="1" />
<line x1="1070.0" y1="568.0" x2="1085.0" y2="612.0" stroke="#000" stroke-width="1" />
<line x1="1075.0" y1="568.0" x2="1085.0" y2="598.0" stroke="#000" stroke-width="1" />
<line x1="1060.0" y1="582.0" x2="1085.0" y2="640.0" stroke="#000" stroke-width="1.4" />
<rect x="1078.0" y="596.0" width="6.0" height="12.0" fill="#c6c6c6" stroke="#000" stroke-width="1" />
<ellipse cx="1007.0" cy="639.5" rx="8.0" ry="2.6" fill="#eeeeee" stroke="#444" stroke-width="1" shape-rendering="auto" />
<rect x="988.0" y="570.0" width="6.0" height="72.0" fill="#c6c6c6" stroke="#000" stroke-width="1" />
<polygon points="1107.0,580.0 1150.0,577.0 1160.0,598.0 1107.0,602.0" fill="#3a3a3a" stroke="#000" stroke-width="1" />
<line x1="1112.0" y1="581.0" x2="1118.0" y2="600.0" stroke="#777" stroke-width="1" stroke-dasharray="2 2"/>
<line x1="1122.0" y1="581.0" x2="1128.0" y2="600.0" stroke="#777" stroke-width="1" stroke-dasharray="2 2"/>
<line x1="1132.0" y1="581.0" x2="1138.0" y2="600.0" stroke="#777" stroke-width="1" stroke-dasharray="2 2"/>
<line x1="1142.0" y1="581.0" x2="1148.0" y2="600.0" stroke="#777" stroke-width="1" stroke-dasharray="2 2"/>
<polygon points="1133.0,565.0 1140.0,565.0 1160.0,600.0 1152.0,600.0" fill="#c6c6c6" stroke="#000" stroke-width="1" />
<line x1="1137.0" y1="566.0" x2="1156.0" y2="600.0" stroke="#000" stroke-width="1" />
<rect x="1107.0" y="602.0" width="53.0" height="6.0" fill="#c6c6c6" stroke="#000" stroke-width="1" />
<rect x="1107.0" y="608.0" width="53.0" height="30.0" fill="#b3b3b3" stroke="#000" stroke-width="1" />
<ellipse cx="1126.0" cy="626.0" rx="2.6" ry="2.6" fill="#222" stroke="#000" stroke-width="1" shape-rendering="auto" />
<rect x="1160.0" y="592.0" width="18.0" height="20.0" fill="#cfcfcf" stroke="#000" stroke-width="1" />
<rect x="1160.0" y="612.0" width="18.0" height="10.0" fill="#b3b3b3" stroke="#000" stroke-width="1" />
<rect x="1150.0" y="563.0" width="12.0" height="12.0" fill="#c6c6c6" stroke="#000" stroke-width="1" />
<rect x="1177.5" y="530.0" width="22.0" height="105.0" fill="#c6c6c6" stroke="#000" stroke-width="1" />
<line x1="1186.0" y1="530.0" x2="1186.0" y2="635.0" stroke="#000" stroke-width="1" />
<line x1="1192.0" y1="530.0" x2="1192.0" y2="635.0" stroke="#000" stroke-width="1" />
<rect x="1187.0" y="534.0" width="4.0" height="20.0" fill="#fff" stroke="#000" stroke-width="0.8" />
<ellipse cx="1181.0" cy="535.0" rx="1.3" ry="1.3" fill="#111" stroke="none" stroke-width="0" shape-rendering="auto" />
<ellipse cx="1196.0" cy="534.0" rx="1.3" ry="1.3" fill="#111" stroke="none" stroke-width="0" shape-rendering="auto" />
<ellipse cx="1181.0" cy="560.0" rx="1.3" ry="1.3" fill="#111" stroke="none" stroke-width="0" shape-rendering="auto" />
<ellipse cx="1196.0" cy="560.0" rx="1.3" ry="1.3" fill="#111" stroke="none" stroke-width="0" shape-rendering="auto" />
<polygon points="1177.0,628.0 1183.0,628.0 1180.0,636.0" fill="#cfcfcf" stroke="#000" stroke-width="1" />
<polygon points="1192.0,628.0 1199.0,628.0 1196.0,636.0" fill="#cfcfcf" stroke="#000" stroke-width="1" />
<rect x="1199.0" y="535.0" width="8.0" height="30.0" fill="#8e7b7d" stroke="none" stroke-width="0" />
<rect x="807.0" y="547.5" width="1.0" height="1.0" fill="#000" stroke="none" stroke-width="0" />
<rect x="808.6" y="540.4" width="1.0" height="4.0" fill="#f0f0f0" stroke="none" stroke-width="0" />
<rect x="810.7" y="554.3" width="2.0" height="4.0" fill="#d8d8d8" stroke="none" stroke-width="0" />
<rect x="799.0" y="553.0" width="4.0" height="1.0" fill="#f0f0f0" stroke="none" stroke-width="0" />
<rect x="796.0" y="552.8" width="1.0" height="4.0" fill="#000" stroke="none" stroke-width="0" />
<rect x="815.6" y="579.4" width="1.0" height="4.0" fill="#d8d8d8" stroke="none" stroke-width="0" />
<rect x="819.6" y="564.3" width="4.0" height="1.0" fill="#d8d8d8" stroke="none" stroke-width="0" />
<rect x="802.2" y="587.7" width="1.0" height="3.0" fill="#f0f0f0" stroke="none" stroke-width="0" />
<rect x="808.5" y="554.9" width="1.0" height="1.0" fill="#111" stroke="none" stroke-width="0" />
<rect x="815.0" y="602.5" width="3.0" height="1.0" fill="#000" stroke="none" stroke-width="0" />
<rect x="798.7" y="567.8" width="2.0" height="1.0" fill="#f0f0f0" stroke="none" stroke-width="0" />
<rect x="795.6" y="586.8" width="1.0" height="4.0" fill="#111" stroke="none" stroke-width="0" />
<rect x="817.8" y="580.1" width="3.0" height="1.0" fill="#111" stroke="none" stroke-width="0" />
<rect x="813.0" y="586.5" width="1.0" height="1.0" fill="#f0f0f0" stroke="none" stroke-width="0" />
<rect x="805.4" y="565.3" width="2.0" height="1.0" fill="#111" stroke="none" stroke-width="0" />
<rect x="800.7" y="544.9" width="1.0" height="1.0" fill="#000" stroke="none" stroke-width="0" />
<rect x="823.5" y="566.2" width="1.0" height="3.0" fill="#f0f0f0" stroke="none" stroke-width="0" />
<rect x="816.0" y="603.1" width="3.0" height="1.0" fill="#111" stroke="none" stroke-width="0" />
<rect x="821.3" y="564.9" width="1.0" height="1.0" fill="#000" stroke="none" stroke-width="0" />
<rect x="803.3" y="553.7" width="1.0" height="3.0" fill="#000" stroke="none" stroke-width="0" />
<rect x="799.8" y="576.6" width="4.0" height="1.0" fill="#d8d8d8" stroke="none" stroke-width="0" />
<rect x="832.0" y="585.8" width="1.0" height="2.0" fill="#d8d8d8" stroke="none" stroke-width="0" />
<rect x="809.7" y="566.3" width="1.0" height="2.0" fill="#000" stroke="none" stroke-width="0" />
<rect x="801.6" y="610.8" width="1.0" height="3.0" fill="#d8d8d8" stroke="none" stroke-width="0" />
<rect x="796.1" y="536.0" width="1.0" height="1.0" fill="#d8d8d8" stroke="none" stroke-width="0" />
<rect x="795.0" y="602.4" width="2.0" height="4.0" fill="#111" stroke="none" stroke-width="0" />
<rect x="832.2" y="581.8" width="1.0" height="3.0" fill="#f0f0f0" stroke="none" stroke-width="0" />
<rect x="833.7" y="571.4" width="1.0" height="3.0" fill="#000" stroke="none" stroke-width="0" />
<rect x="824.0" y="592.3" width="3.0" height="1.0" fill="#000" stroke="none" stroke-width="0" />
<rect x="832.0" y="576.1" width="1.0" height="1.0" fill="#111" stroke="none" stroke-width="0" />
<rect x="833.1" y="601.6" width="2.0" height="1.0" fill="#111" stroke="none" stroke-width="0" />
<rect x="824.9" y="576.5" width="4.0" height="1.0" fill="#d8d8d8" stroke="none" stroke-width="0" />
<rect x="826.5" y="610.9" width="1.0" height="1.0" fill="#000" stroke="none" stroke-width="0" />
<rect x="802.0" y="573.5" width="1.0" height="1.0" fill="#f0f0f0" stroke="none" stroke-width="0" />
<rect x="804.4" y="588.6" width="2.0" height="2.0" fill="#111" stroke="none" stroke-width="0" />
<rect x="832.2" y="563.7" width="1.0" height="1.0" fill="#000" stroke="none" stroke-width="0" />
<rect x="807.5" y="572.7" width="1.0" height="4.0" fill="#111" stroke="none" stroke-width="0" />
<rect x="826.0" y="542.4" width="1.0" height="2.0" fill="#000" stroke="none" stroke-width="0" />
<rect x="813.1" y="549.6" width="2.0" height="1.0" fill="#f0f0f0" stroke="none" stroke-width="0" />
<rect x="812.5" y="592.5" width="1.0" height="1.0" fill="#000" stroke="none" stroke-width="0" />
<rect x="795.1" y="580.9" width="3.0" height="1.0" fill="#d8d8d8" stroke="none" stroke-width="0" />
<rect x="833.2" y="586.0" width="2.0" height="1.0" fill="#000" stroke="none" stroke-width="0" />
<rect x="794.9" y="596.8" width="1.0" height="1.0" fill="#000" stroke="none" stroke-width="0" />
<rect x="827.0" y="552.0" width="1.0" height="2.0" fill="#000" stroke="none" stroke-width="0" />
<rect x="824.5" y="560.8" width="4.0" height="2.0" fill="#000" stroke="none" stroke-width="0" />
<rect x="830.4" y="562.9" width="3.0" height="2.0" fill="#d8d8d8" stroke="none" stroke-width="0" />
<rect x="750.0" y="588.3" width="4.0" height="1.0" fill="#000" stroke="none" stroke-width="0" />
<rect x="772.0" y="605.7" width="1.0" height="1.0" fill="#d8d8d8" stroke="none" stroke-width="0" />
<rect x="777.4" y="599.6" width="2.0" height="2.0" fill="#000" stroke="none" stroke-width="0" />
<rect x="784.6" y="585.6" width="1.0" height="1.0" fill="#000" stroke="none" stroke-width="0" />
<rect x="767.4" y="599.7" width="2.0" height="1.0" fill="#d8d8d8" stroke="none" stroke-width="0" />
<rect x="771.9" y="589.6" width="2.0" height="2.0" fill="#f0f0f0" stroke="none" stroke-width="0" />
<rect x="767.4" y="590.9" width="4.0" height="1.0" fill="#000" stroke="none" stroke-width="0" />
<rect x="782.6" y="587.8" width="2.0" height="1.0" fill="#000" stroke="none" stroke-width="0" />
<rect x="774.9" y="596.0" width="1.0" height="1.0" fill="#000" stroke="none" stroke-width="0" />
<rect x="787.2" y="602.0" width="1.0" height="2.0" fill="#000" stroke="none" stroke-width="0" />
<rect x="788.5" y="590.1" width="1.0" height="2.0" fill="#000" stroke="none" stroke-width="0" />
<rect x="789.5" y="607.3" width="1.0" height="2.0" fill="#f0f0f0" stroke="none" stroke-width="0" />
<rect x="759.6" y="589.5" width="2.0" height="1.0" fill="#000" stroke="none" stroke-width="0" />
<rect x="759.5" y="596.8" width="2.0" height="1.0" fill="#d8d8d8" stroke="none" stroke-width="0" />
<rect x="757.6" y="610.9" width="1.0" height="1.0" fill="#000" stroke="none" stroke-width="0" />
<rect x="747.9" y="591.6" width="1.0" height="1.0" fill="#f0f0f0" stroke="none" stroke-width="0" />
<rect x="783.1" y="602.9" width="2.0" height="2.0" fill="#d8d8d8" stroke="none" stroke-width="0" />
<rect x="770.2" y="603.6" width="1.0" height="1.0" fill="#000" stroke="none" stroke-width="0" />
<rect x="763.6" y="586.0" width="1.0" height="1.0" fill="#000" stroke="none" stroke-width="0" />
<rect x="772.0" y="590.2" width="1.0" height="2.0" fill="#111" stroke="none" stroke-width="0" />
<rect x="789.7" y="595.7" width="1.0" height="2.0" fill="#000" stroke="none" stroke-width="0" />
<rect x="787.2" y="611.1" width="1.0" height="2.0" fill="#111" stroke="none" stroke-width="0" />
<rect x="900.1" y="570.3" width="1.0" height="1.0" fill="#000" stroke="none" stroke-width="0" />
<rect x="876.1" y="581.8" width="1.0" height="2.0" fill="#d8d8d8" stroke="none" stroke-width="0" />
<rect x="894.9" y="556.0" width="3.0" height="1.0" fill="#000" stroke="none" stroke-width="0" />
<rect x="902.1" y="575.3" width="3.0" height="2.0" fill="#111" stroke="none" stroke-width="0" />
<rect x="904.1" y="589.3" width="2.0" height="1.0" fill="#000" stroke="none" stroke-width="0" />
<rect x="885.1" y="562.6" width="1.0" height="1.0" fill="#111" stroke="none" stroke-width="0" />
<rect x="886.9" y="550.3" width="3.0" height="1.0" fill="#111" stroke="none" stroke-width="0" />
<rect x="861.0" y="555.8" width="2.0" height="2.0" fill="#111" stroke="none" stroke-width="0" />
<rect x="922.4" y="588.9" width="1.0" height="4.0" fill="#111" stroke="none" stroke-width="0" />
<rect x="872.6" y="555.7" width="2.0" height="2.0" fill="#111" stroke="none" stroke-width="0" />
<rect x="891.7" y="556.4" width="1.0" height="4.0" fill="#000" stroke="none" stroke-width="0" />
<rect x="867.6" y="572.6" width="1.0" height="3.0" fill="#000" stroke="none" stroke-width="0" />
<rect x="863.7" y="588.2" width="1.0" height="2.0" fill="#f0f0f0" stroke="none" stroke-width="0" />
<rect x="868.0" y="578.4" width="1.0" height="1.0" fill="#d8d8d8" stroke="none" stroke-width="0" />
<rect x="900.0" y="578.8" width="4.0" height="1.0" fill="#d8d8d8" stroke="none" stroke-width="0" />
<rect x="896.1" y="582.1" width="1.0" height="1.0" fill="#000" stroke="none" stroke-width="0" />
<rect x="866.9" y="563.1" width="1.0" height="2.0" fill="#d8d8d8" stroke="none" stroke-width="0" />
<rect x="861.4" y="548.8" width="1.0" height="4.0" fill="#000" stroke="none" stroke-width="0" />
<rect x="888.6" y="550.9" width="4.0" height="1.0" fill="#000" stroke="none" stroke-width="0" />
<rect x="908.0" y="567.9" width="1.0" height="1.0" fill="#000" stroke="none" stroke-width="0" />
<rect x="873.5" y="575.3" width="3.0" height="2.0" fill="#000" stroke="none" stroke-width="0" />
<rect x="890.1" y="576.7" width="1.0" height="1.0" fill="#000" stroke="none" stroke-width="0" />
<rect x="880.2" y="575.4" width="1.0" height="2.0" fill="#000" stroke="none" stroke-width="0" />
<rect x="890.5" y="588.8" width="1.0" height="1.0" fill="#111" stroke="none" stroke-width="0" />
<rect x="905.5" y="560.0" width="3.0" height="2.0" fill="#d8d8d8" stroke="none" stroke-width="0" />
<rect x="871.3" y="589.1" width="1.0" height="3.0" fill="#000" stroke="none" stroke-width="0" />
<rect x="912.9" y="588.7" width="1.0" height="3.0" fill="#000" stroke="none" stroke-width="0" />
<rect x="863.0" y="551.8" width="4.0" height="1.0" fill="#000" stroke="none" stroke-width="0" />
<rect x="898.4" y="574.5" width="2.0" height="1.0" fill="#000" stroke="none" stroke-width="0" />
<rect x="891.4" y="584.8" width="1.0" height="3.0" fill="#f0f0f0" stroke="none" stroke-width="0" />
<rect x="903.7" y="565.0" width="2.0" height="1.0" fill="#111" stroke="none" stroke-width="0" />
<rect x="866.1" y="561.9" width="2.0" height="1.0" fill="#000" stroke="none" stroke-width="0" />
<rect x="921.0" y="556.2" width="1.0" height="1.0" fill="#000" stroke="none" stroke-width="0" />
<rect x="884.3" y="589.9" width="1.0" height="4.0" fill="#f0f0f0" stroke="none" stroke-width="0" />
<rect x="908.6" y="583.9" width="1.0" height="2.0" fill="#111" stroke="none" stroke-width="0" />
<rect x="900.5" y="554.3" width="2.0" height="2.0" fill="#000" stroke="none" stroke-width="0" />
<rect x="909.8" y="581.0" width="3.0" height="1.0" fill="#f0f0f0" stroke="none" stroke-width="0" />
<rect x="919.2" y="587.5" width="4.0" height="1.0" fill="#000" stroke="none" stroke-width="0" />
<rect x="920.5" y="565.3" width="4.0" height="1.0" fill="#111" stroke="none" stroke-width="0" />
<rect x="890.5" y="586.3" width="1.0" height="4.0" fill="#f0f0f0" stroke="none" stroke-width="0" />
<rect x="942.2" y="458.7" width="2.0" height="2.0" fill="#111" stroke="none" stroke-width="0" />
<rect x="944.7" y="479.5" width="1.0" height="1.0" fill="#000" stroke="none" stroke-width="0" />
<rect x="939.7" y="492.7" width="1.0" height="3.0" fill="#111" stroke="none" stroke-width="0" />
<rect x="953.9" y="467.2" width="1.0" height="1.0" fill="#000" stroke="none" stroke-width="0" />
<rect x="942.2" y="447.1" width="1.0" height="1.0" fill="#d8d8d8" stroke="none" stroke-width="0" />
<rect x="939.6" y="443.1" width="2.0" height="3.0" fill="#d8d8d8" stroke="none" stroke-width="0" />
<rect x="939.8" y="457.1" width="2.0" height="1.0" fill="#111" stroke="none" stroke-width="0" />
<rect x="938.3" y="470.2" width="1.0" height="1.0" fill="#000" stroke="none" stroke-width="0" />
<rect x="942.9" y="478.2" width="3.0" height="1.0" fill="#000" stroke="none" stroke-width="0" />
<rect x="938.3" y="465.8" width="2.0" height="3.0" fill="#f0f0f0" stroke="none" stroke-width="0" />
<rect x="952.7" y="494.0" width="4.0" height="2.0" fill="#000" stroke="none" stroke-width="0" />
<rect x="950.1" y="454.5" width="1.0" height="1.0" fill="#f0f0f0" stroke="none" stroke-width="0" />
<rect x="937.5" y="485.5" width="1.0" height="1.0" fill="#000" stroke="none" stroke-width="0" />
<rect x="947.6" y="459.0" width="1.0" height="1.0" fill="#f0f0f0" stroke="none" stroke-width="0" />
<rect x="948.6" y="448.3" width="1.0" height="1.0" fill="#d8d8d8" stroke="none" stroke-width="0" />
<rect x="939.5" y="456.6" width="1.0" height="4.0" fill="#111" stroke="none" stroke-width="0" />
<rect x="953.9" y="457.6" width="1.0" height="2.0" fill="#000" stroke="none" stroke-width="0" />
<rect x="945.8" y="443.6" width="1.0" height="3.0" fill="#000" stroke="none" stroke-width="0" />
<rect x="916.9" y="551.3" width="1.0" height="3.0" fill="#f0f0f0" stroke="none" stroke-width="0" />
<rect x="931.5" y="517.2" width="1.0" height="1.0" fill="#111" stroke="none" stroke-width="0" />
<rect x="923.2" y="515.1" width="1.0" height="2.0" fill="#000" stroke="none" stroke-width="0" />
<rect x="910.6" y="562.3" width="2.0" height="1.0" fill="#111" stroke="none" stroke-width="0" />
<rect x="903.7" y="547.4" width="4.0" height="1.0" fill="#f0f0f0" stroke="none" stroke-width="0" />
<rect x="914.2" y="550.6" width="4.0" height="1.0" fill="#000" stroke="none" stroke-width="0" />
<rect x="907.2" y="574.0" width="2.0" height="1.0" fill="#000" stroke="none" stroke-width="0" />
<rect x="906.3" y="534.2" width="2.0" height="1.0" fill="#000" stroke="none" stroke-width="0" />
<rect x="911.2" y="514.1" width="2.0" height="4.0" fill="#f0f0f0" stroke="none" stroke-width="0" />
<rect x="928.5" y="574.9" width="1.0" height="3.0" fill="#000" stroke="none" stroke-width="0" />
<rect x="909.5" y="526.7" width="1.0" height="1.0" fill="#111" stroke="none" stroke-width="0" />
<rect x="927.9" y="532.9" width="2.0" height="1.0" fill="#d8d8d8" stroke="none" stroke-width="0" />
<rect x="931.3" y="514.7" width="2.0" height="2.0" fill="#f0f0f0" stroke="none" stroke-width="0" />
<rect x="908.4" y="547.5" width="1.0" height="3.0" fill="#f0f0f0" stroke="none" stroke-width="0" />
<rect x="902.1" y="569.9" width="2.0" height="1.0" fill="#d8d8d8" stroke="none" stroke-width="0" />
<rect x="911.5" y="520.7" width="1.0" height="4.0" fill="#111" stroke="none" stroke-width="0" />
<rect x="931.4" y="522.6" width="1.0" height="4.0" fill="#000" stroke="none" stroke-width="0" />
<rect x="903.6" y="554.4" width="3.0" height="2.0" fill="#f0f0f0" stroke="none" stroke-width="0" />
<rect x="927.7" y="510.1" width="1.0" height="3.0" fill="#111" stroke="none" stroke-width="0" />
<rect x="928.0" y="558.7" width="1.0" height="4.0" fill="#111" stroke="none" stroke-width="0" />
<rect x="915.7" y="559.6" width="4.0" height="1.0" fill="#f0f0f0" stroke="none" stroke-width="0" />
<rect x="925.6" y="518.8" width="1.0" height="1.0" fill="#d8d8d8" stroke="none" stroke-width="0" />
<rect x="911.1" y="574.5" width="1.0" height="1.0" fill="#000" stroke="none" stroke-width="0" />
<rect x="907.1" y="532.0" width="1.0" height="3.0" fill="#f0f0f0" stroke="none" stroke-width="0" />
<rect x="915.7" y="567.7" width="1.0" height="1.0" fill="#111" stroke="none" stroke-width="0" />
<rect x="910.0" y="543.1" width="2.0" height="1.0" fill="#000" stroke="none" stroke-width="0" />
<rect x="1139.0" y="572.3" width="1.0" height="1.0" fill="#d8d8d8" stroke="none" stroke-width="0" />
<rect x="1122.4" y="568.2" width="2.0" height="1.0" fill="#000" stroke="none" stroke-width="0" />
<rect x="1152.9" y="569.4" width="1.0" height="3.0" fill="#f0f0f0" stroke="none" stroke-width="0" />
<rect x="1168.3" y="573.9" width="1.0" height="3.0" fill="#111" stroke="none" stroke-width="0" />
<rect x="1125.4" y="567.7" width="4.0" height="1.0" fill="#111" stroke="none" stroke-width="0" />
<rect x="1143.8" y="572.0" width="4.0" height="1.0" fill="#000" stroke="none" stroke-width="0" />
<rect x="1117.0" y="586.3" width="1.0" height="4.0" fill="#111" stroke="none" stroke-width="0" />
<rect x="1132.4" y="567.5" width="2.0" height="1.0" fill="#000" stroke="none" stroke-width="0" />
<rect x="1163.8" y="593.8" width="1.0" height="3.0" fill="#111" stroke="none" stroke-width="0" />
<rect x="1115.1" y="567.1" width="2.0" height="3.0" fill="#000" stroke="none" stroke-width="0" />
<rect x="1162.5" y="588.6" width="1.0" height="1.0" fill="#f0f0f0" stroke="none" stroke-width="0" />
<rect x="1155.9" y="579.9" width="1.0" height="2.0" fill="#000" stroke="none" stroke-width="0" />
<rect x="1130.6" y="585.3" width="2.0" height="2.0" fill="#111" stroke="none" stroke-width="0" />
<rect x="1152.5" y="579.3" width="3.0" height="1.0" fill="#f0f0f0" stroke="none" stroke-width="0" />
<polygon points="1173.4,410.5 1186.5,401.0 1205.0,448.0 1205.0,478.0" fill="#8e7b7d" stroke="#000" stroke-width="1" />
<line x1="1178.9" y1="406.5" x2="1205.0" y2="465.4" stroke="#000" stroke-width="1.3" />
<line x1="1181.3" y1="404.8" x2="1205.0" y2="460.0" stroke="#000" stroke-width="1.3" />
<line x1="1183.6" y1="403.1" x2="1205.0" y2="454.6" stroke="#000" stroke-width="1.3" />
<line x1="1173.4" y1="410.5" x2="1178.0" y2="407.2" stroke="#000" stroke-width="1.1" />
<line x1="1174.5" y1="412.8" x2="1179.1" y2="409.5" stroke="#000" stroke-width="1.1" />
<line x1="1175.6" y1="415.2" x2="1180.2" y2="411.9" stroke="#000" stroke-width="1.1" />
<line x1="1176.7" y1="417.5" x2="1181.3" y2="414.2" stroke="#000" stroke-width="1.1" />
<line x1="1177.8" y1="419.9" x2="1182.4" y2="416.6" stroke="#000" stroke-width="1.1" />
<line x1="1178.9" y1="422.2" x2="1183.5" y2="418.9" stroke="#000" stroke-width="1.1" />
<line x1="1180.0" y1="424.5" x2="1184.6" y2="421.2" stroke="#000" stroke-width="1.1" />
<line x1="1181.1" y1="426.9" x2="1185.7" y2="423.6" stroke="#000" stroke-width="1.1" />
<line x1="1182.1" y1="429.2" x2="1186.7" y2="425.9" stroke="#000" stroke-width="1.1" />
<line x1="1183.2" y1="431.6" x2="1187.8" y2="428.3" stroke="#000" stroke-width="1.1" />
<line x1="1184.3" y1="433.9" x2="1188.9" y2="430.6" stroke="#000" stroke-width="1.1" />
<line x1="1185.4" y1="436.2" x2="1190.0" y2="432.9" stroke="#000" stroke-width="1.1" />
<line x1="1186.5" y1="438.6" x2="1191.1" y2="435.3" stroke="#000" stroke-width="1.1" />
<line x1="1187.6" y1="440.9" x2="1192.2" y2="437.6" stroke="#000" stroke-width="1.1" />
<line x1="1188.7" y1="443.2" x2="1193.3" y2="439.9" stroke="#000" stroke-width="1.1" />
<line x1="1189.8" y1="445.6" x2="1194.4" y2="442.3" stroke="#000" stroke-width="1.1" />
<line x1="1190.9" y1="447.9" x2="1195.5" y2="444.6" stroke="#000" stroke-width="1.1" />
<line x1="1192.0" y1="450.3" x2="1196.6" y2="447.0" stroke="#000" stroke-width="1.1" />
<line x1="1193.1" y1="452.6" x2="1197.7" y2="449.3" stroke="#000" stroke-width="1.1" />
<line x1="1194.2" y1="454.9" x2="1198.8" y2="451.6" stroke="#000" stroke-width="1.1" />
<line x1="1195.3" y1="457.3" x2="1199.9" y2="454.0" stroke="#000" stroke-width="1.1" />
<line x1="1196.3" y1="459.6" x2="1200.9" y2="456.3" stroke="#000" stroke-width="1.1" />
<line x1="1197.4" y1="462.0" x2="1202.0" y2="458.7" stroke="#000" stroke-width="1.1" />
<line x1="1198.5" y1="464.3" x2="1203.1" y2="461.0" stroke="#000" stroke-width="1.1" />
<line x1="1199.6" y1="466.6" x2="1204.2" y2="463.3" stroke="#000" stroke-width="1.1" />
<line x1="1200.7" y1="469.0" x2="1205.3" y2="465.7" stroke="#000" stroke-width="1.1" />
<line x1="1201.8" y1="471.3" x2="1206.4" y2="468.0" stroke="#000" stroke-width="1.1" />
<line x1="1202.9" y1="473.7" x2="1207.5" y2="470.4" stroke="#000" stroke-width="1.1" />
<line x1="1174.4" y1="411.3" x2="1178.1" y2="408.7" stroke="#e8dcdc" stroke-width="0.8" stroke-dasharray="1 1"/>
<line x1="1175.5" y1="413.6" x2="1179.2" y2="411.0" stroke="#e8dcdc" stroke-width="0.8" stroke-dasharray="1 1"/>
<line x1="1176.6" y1="415.9" x2="1180.3" y2="413.3" stroke="#e8dcdc" stroke-width="0.8" stroke-dasharray="1 1"/>
<line x1="1177.7" y1="418.3" x2="1181.4" y2="415.7" stroke="#e8dcdc" stroke-width="0.8" stroke-dasharray="1 1"/>
<line x1="1178.8" y1="420.6" x2="1182.5" y2="418.0" stroke="#e8dcdc" stroke-width="0.8" stroke-dasharray="1 1"/>
<line x1="1179.9" y1="423.0" x2="1183.6" y2="420.4" stroke="#e8dcdc" stroke-width="0.8" stroke-dasharray="1 1"/>
<line x1="1181.0" y1="425.3" x2="1184.7" y2="422.7" stroke="#e8dcdc" stroke-width="0.8" stroke-dasharray="1 1"/>
<line x1="1182.1" y1="427.6" x2="1185.8" y2="425.0" stroke="#e8dcdc" stroke-width="0.8" stroke-dasharray="1 1"/>
<line x1="1183.2" y1="430.0" x2="1186.9" y2="427.4" stroke="#e8dcdc" stroke-width="0.8" stroke-dasharray="1 1"/>
<line x1="1184.3" y1="432.3" x2="1188.0" y2="429.7" stroke="#e8dcdc" stroke-width="0.8" stroke-dasharray="1 1"/>
<line x1="1185.4" y1="434.7" x2="1189.1" y2="432.1" stroke="#e8dcdc" stroke-width="0.8" stroke-dasharray="1 1"/>
<line x1="1186.5" y1="437.0" x2="1190.2" y2="434.4" stroke="#e8dcdc" stroke-width="0.8" stroke-dasharray="1 1"/>
<line x1="1187.6" y1="439.3" x2="1191.3" y2="436.7" stroke="#e8dcdc" stroke-width="0.8" stroke-dasharray="1 1"/>
<line x1="1188.7" y1="441.7" x2="1192.4" y2="439.1" stroke="#e8dcdc" stroke-width="0.8" stroke-dasharray="1 1"/>
<line x1="1189.7" y1="444.0" x2="1193.4" y2="441.4" stroke="#e8dcdc" stroke-width="0.8" stroke-dasharray="1 1"/>
<line x1="1190.8" y1="446.4" x2="1194.5" y2="443.8" stroke="#e8dcdc" stroke-width="0.8" stroke-dasharray="1 1"/>
<line x1="1191.9" y1="448.7" x2="1195.6" y2="446.1" stroke="#e8dcdc" stroke-width="0.8" stroke-dasharray="1 1"/>
<line x1="1193.0" y1="451.0" x2="1196.7" y2="448.4" stroke="#e8dcdc" stroke-width="0.8" stroke-dasharray="1 1"/>
<line x1="1194.1" y1="453.4" x2="1197.8" y2="450.8" stroke="#e8dcdc" stroke-width="0.8" stroke-dasharray="1 1"/>
<line x1="1195.2" y1="455.7" x2="1198.9" y2="453.1" stroke="#e8dcdc" stroke-width="0.8" stroke-dasharray="1 1"/>
<line x1="1196.3" y1="458.1" x2="1200.0" y2="455.5" stroke="#e8dcdc" stroke-width="0.8" stroke-dasharray="1 1"/>
<line x1="1197.4" y1="460.4" x2="1201.1" y2="457.8" stroke="#e8dcdc" stroke-width="0.8" stroke-dasharray="1 1"/>
<line x1="1198.5" y1="462.7" x2="1202.2" y2="460.1" stroke="#e8dcdc" stroke-width="0.8" stroke-dasharray="1 1"/>
<line x1="1199.6" y1="465.1" x2="1203.3" y2="462.5" stroke="#e8dcdc" stroke-width="0.8" stroke-dasharray="1 1"/>
<line x1="1200.7" y1="467.4" x2="1204.4" y2="464.8" stroke="#e8dcdc" stroke-width="0.8" stroke-dasharray="1 1"/>
<line x1="1201.8" y1="469.8" x2="1205.5" y2="467.2" stroke="#e8dcdc" stroke-width="0.8" stroke-dasharray="1 1"/>
<line x1="1202.9" y1="472.1" x2="1206.6" y2="469.5" stroke="#e8dcdc" stroke-width="0.8" stroke-dasharray="1 1"/>
<line x1="1204.0" y1="474.4" x2="1207.7" y2="471.8" stroke="#e8dcdc" stroke-width="0.8" stroke-dasharray="1 1"/>
<polygon points="684.5,478.0 696.0,502.0 696.0,583.0 684.5,583.0" fill="#b8b8b8" stroke="none" stroke-width="0" />
<polygon points="698.5,508.0 712.5,537.0 712.5,583.0 698.5,583.0" fill="#c2c2c2" stroke="none" stroke-width="0" />
<polygon points="670.0,453.0 670.0,583.0 676.5,583.0 676.5,453.0" fill="#000" stroke="#000" stroke-width="1" />
<polygon points="671.6,453.0 671.6,583.0 674.9,583.0 674.9,453.0" fill="#8e7b7d" stroke="none" stroke-width="0" />
<polygon points="678.0,462.0 678.0,583.0 684.0,583.0 684.0,474.0" fill="#000" stroke="#000" stroke-width="1" />
<polygon points="679.5,465.0 679.5,583.0 682.5,583.0 682.5,471.0" fill="#8e7b7d" stroke="none" stroke-width="0" />
<rect x="692.0" y="547.6" width="21.0" height="23.0" fill="#c6c6c6" stroke="#000" stroke-width="1" />
<rect x="686.0" y="560.0" width="7.0" height="22.0" fill="#b3b3b3" stroke="#000" stroke-width="1" />
<ellipse cx="696.5" cy="553.5" rx="3.1" ry="3.1" fill="#f4f4f4" stroke="#222" stroke-width="0.9" shape-rendering="auto" />
<ellipse cx="696.5" cy="553.5" rx="1.5" ry="1.5" fill="#555" stroke="none" stroke-width="0" shape-rendering="auto" />
<ellipse cx="704.0" cy="556.5" rx="3.1" ry="3.1" fill="#f4f4f4" stroke="#222" stroke-width="0.9" shape-rendering="auto" />
<ellipse cx="704.0" cy="556.5" rx="1.5" ry="1.5" fill="#555" stroke="none" stroke-width="0" shape-rendering="auto" />
<ellipse cx="710.5" cy="552.5" rx="3.1" ry="3.1" fill="#f4f4f4" stroke="#222" stroke-width="0.9" shape-rendering="auto" />
<ellipse cx="710.5" cy="552.5" rx="1.5" ry="1.5" fill="#555" stroke="none" stroke-width="0" shape-rendering="auto" />
<ellipse cx="697.5" cy="563.0" rx="3.1" ry="3.1" fill="#f4f4f4" stroke="#222" stroke-width="0.9" shape-rendering="auto" />
<ellipse cx="697.5" cy="563.0" rx="1.5" ry="1.5" fill="#555" stroke="none" stroke-width="0" shape-rendering="auto" />
<polygon points="670.0,583.4 690.0,570.5 712.0,570.5 712.0,668.0" fill="#cfcfcf" stroke="#000" stroke-width="1" />
<rect x="682.0" y="584.5" width="4.0" height="1.6" fill="#111" stroke="none" stroke-width="0" />
<polygon points="693.0,596.0 698.0,593.0 712.0,593.0 712.0,634.0 693.0,634.0" fill="#b3b3b3" stroke="#000" stroke-width="1" />
<rect x="703.0" y="617.0" width="9.0" height="12.0" fill="#8e7b7d" stroke="#000" stroke-width="1" />
<polygon points="693.0,596.0 688.0,590.0 688.0,622.0 693.0,634.0" fill="#c6c6c6" stroke="#000" stroke-width="1" />
<rect x="687.5" y="606.0" width="4.0" height="4.0" fill="#c6c6c6" stroke="#000" stroke-width="1" />
<polygon points="667.8,583.0 670.0,583.4 711.9,668.2 711.9,687.7 709.3,937.5 706.7,923.7 664.6,848.0" fill="#c6c6c6" stroke="#000" stroke-width="1.5" />
<line x1="670.0" y1="583.4" x2="670.0" y2="603.0" stroke="#000" stroke-width="1" />
<line x1="670.0" y1="603.0" x2="711.9" y2="687.7" stroke="#000" stroke-width="1.4" />
<line x1="672.0" y1="583.4" x2="712.0" y2="664.0" stroke="#000" stroke-width="1" />
<line x1="668.0" y1="850.0" x2="708.0" y2="922.0" stroke="#000" stroke-width="1" stroke-dasharray="2 1.5"/>
<line x1="669.5" y1="600.0" x2="666.5" y2="846.0" stroke="#000" stroke-width="1" />
<ellipse cx="698.0" cy="846.0" rx="3.0" ry="20.0" fill="#cfcfcf" stroke="#000" stroke-width="1.2" shape-rendering="auto" />
<ellipse cx="698.0" cy="846.0" rx="1.5" ry="17.0" fill="#c6c6c6" stroke="#000" stroke-width="0.6" shape-rendering="auto" />
<rect x="683.2" y="809.0" width="1.6" height="4.0" fill="#000" stroke="none" stroke-width="0" />
<rect x="683.2" y="844.0" width="1.6" height="4.0" fill="#000" stroke="none" stroke-width="0" />
<rect x="695.2" y="820.0" width="1.6" height="4.0" fill="#000" stroke="none" stroke-width="0" />
<rect x="701.2" y="868.0" width="1.6" height="4.0" fill="#000" stroke="none" stroke-width="0" />
<polygon points="673.0,272.0 714.0,367.0 712.7,537.0 672.0,453.0" fill="#c6c6c6" stroke="#000" stroke-width="1.8" />
<polygon points="672.0,453.0 712.7,537.0 712.7,545.0 672.0,461.0" fill="#a79395" stroke="#000" stroke-width="1" />
<line x1="673.2" y1="455.5" x2="670.3" y2="457.4" stroke="#000" stroke-width="1" />
<line x1="674.4" y1="457.9" x2="671.5" y2="459.8" stroke="#000" stroke-width="1" />
<line x1="675.6" y1="460.4" x2="672.7" y2="462.3" stroke="#000" stroke-width="1" />
<line x1="676.8" y1="462.9" x2="673.9" y2="464.8" stroke="#000" stroke-width="1" />
<line x1="678.0" y1="465.4" x2="675.1" y2="467.3" stroke="#000" stroke-width="1" />
<line x1="679.2" y1="467.8" x2="676.3" y2="469.7" stroke="#000" stroke-width="1" />
<line x1="680.4" y1="470.3" x2="677.5" y2="472.2" stroke="#000" stroke-width="1" />
<line x1="681.6" y1="472.8" x2="678.7" y2="474.7" stroke="#000" stroke-width="1" />
<line x1="682.8" y1="475.2" x2="679.9" y2="477.1" stroke="#000" stroke-width="1" />
<line x1="684.0" y1="477.7" x2="681.1" y2="479.6" stroke="#000" stroke-width="1" />
<line x1="685.2" y1="480.2" x2="682.3" y2="482.1" stroke="#000" stroke-width="1" />
<line x1="686.4" y1="482.6" x2="683.5" y2="484.5" stroke="#000" stroke-width="1" />
<line x1="687.6" y1="485.1" x2="684.7" y2="487.0" stroke="#000" stroke-width="1" />
<line x1="688.8" y1="487.6" x2="685.9" y2="489.5" stroke="#000" stroke-width="1" />
<line x1="690.0" y1="490.1" x2="687.1" y2="492.0" stroke="#000" stroke-width="1" />
<line x1="691.2" y1="492.5" x2="688.3" y2="494.4" stroke="#000" stroke-width="1" />
<line x1="692.4" y1="495.0" x2="689.5" y2="496.9" stroke="#000" stroke-width="1" />
<line x1="693.5" y1="497.5" x2="690.6" y2="499.4" stroke="#000" stroke-width="1" />
<line x1="694.7" y1="499.9" x2="691.8" y2="501.8" stroke="#000" stroke-width="1" />
<line x1="695.9" y1="502.4" x2="693.0" y2="504.3" stroke="#000" stroke-width="1" />
<line x1="697.1" y1="504.9" x2="694.2" y2="506.8" stroke="#000" stroke-width="1" />
<line x1="698.3" y1="507.4" x2="695.4" y2="509.3" stroke="#000" stroke-width="1" />
<line x1="699.5" y1="509.8" x2="696.6" y2="511.7" stroke="#000" stroke-width="1" />
<line x1="700.7" y1="512.3" x2="697.8" y2="514.2" stroke="#000" stroke-width="1" />
<line x1="701.9" y1="514.8" x2="699.0" y2="516.7" stroke="#000" stroke-width="1" />
<line x1="703.1" y1="517.2" x2="700.2" y2="519.1" stroke="#000" stroke-width="1" />
<line x1="704.3" y1="519.7" x2="701.4" y2="521.6" stroke="#000" stroke-width="1" />
<line x1="705.5" y1="522.2" x2="702.6" y2="524.1" stroke="#000" stroke-width="1" />
<line x1="706.7" y1="524.6" x2="703.8" y2="526.5" stroke="#000" stroke-width="1" />
<line x1="707.9" y1="527.1" x2="705.0" y2="529.0" stroke="#000" stroke-width="1" />
<line x1="709.1" y1="529.6" x2="706.2" y2="531.5" stroke="#000" stroke-width="1" />
<line x1="710.3" y1="532.1" x2="707.4" y2="534.0" stroke="#000" stroke-width="1" />
<line x1="711.5" y1="534.5" x2="708.6" y2="536.4" stroke="#000" stroke-width="1" />
<polygon points="673.0,270.0 1187.0,248.0 1231.0,339.0 1231.0,351.0 714.0,370.7 714.0,365.0" fill="#000" stroke="#000" stroke-width="1.5" />
<polygon points="675.0,271.5 716.0,364.0 729.0,353.3 690.0,274.0" fill="#000" stroke="#000" stroke-width="1" />
<polygon points="678.3,272.1 718.9,361.6 721.5,359.5 681.3,272.6" fill="#8e7b7d" stroke="none" stroke-width="0" />
<polygon points="682.8,272.8 722.8,358.4 723.4,357.9 683.5,272.9" fill="#8e7b7d" stroke="none" stroke-width="0" />
<polygon points="684.9,273.1 724.6,356.9 727.2,354.8 687.9,273.6" fill="#8e7b7d" stroke="none" stroke-width="0" />
<polygon points="1176.0,254.0 1213.6,330.6 1229.0,338.0 1186.0,249.5" fill="#000" stroke="#000" stroke-width="1" />
<polygon points="1178.2,253.0 1217.0,332.2 1220.1,333.7 1180.2,252.1" fill="#8e7b7d" stroke="none" stroke-width="0" />
<polygon points="1181.2,251.7 1221.6,334.4 1222.4,334.8 1181.7,251.4" fill="#8e7b7d" stroke="none" stroke-width="0" />
<polygon points="1182.6,251.0 1223.8,335.5 1226.8,337.0 1184.6,250.1" fill="#8e7b7d" stroke="none" stroke-width="0" />
<polygon points="926.0,264.5 962.0,344.5 978.0,343.2 942.0,263.5" fill="#000" stroke="#000" stroke-width="1" />
<polygon points="929.5,264.3 965.5,344.2 968.7,344.0 932.7,264.1" fill="#8e7b7d" stroke="none" stroke-width="0" />
<polygon points="934.3,264.0 970.3,343.8 971.1,343.8 935.1,263.9" fill="#8e7b7d" stroke="none" stroke-width="0" />
<polygon points="936.6,263.8 972.6,343.6 975.8,343.4 939.8,263.6" fill="#8e7b7d" stroke="none" stroke-width="0" />
<polygon points="729.0,352.3 1214.0,330.8 1231.0,339.0 1231.0,351.2 714.0,370.9 714.0,365.0" fill="#000" stroke="#000" stroke-width="1" />
<polygon points="725.0,357.3 1218.6,336.3 1219.1,336.9 724.5,357.9" fill="#b9a6a8" stroke="none" stroke-width="0" />
<polygon points="723.6,359.0 1220.1,338.1 1223.2,341.8 720.9,362.3" fill="#8e7b7d" stroke="none" stroke-width="0" />
<polygon points="719.7,363.8 1224.5,343.4 1225.2,344.3 719.1,364.6" fill="#8e7b7d" stroke="none" stroke-width="0" />
<polygon points="717.9,366.1 1226.6,345.9 1229.0,348.8 715.8,368.7" fill="#8e7b7d" stroke="none" stroke-width="0" />
<line x1="733.0" y1="354.3" x2="737.0" y2="354.1" stroke="#c9b4b6" stroke-width="1.2" />
<line x1="742.0" y1="355.7" x2="747.0" y2="355.4" stroke="#a8989a" stroke-width="1" />
<line x1="754.5" y1="353.4" x2="758.5" y2="353.2" stroke="#c9b4b6" stroke-width="1.2" />
<line x1="763.5" y1="354.8" x2="768.5" y2="354.5" stroke="#a8989a" stroke-width="1" />
<line x1="776.0" y1="352.4" x2="780.0" y2="352.2" stroke="#c9b4b6" stroke-width="1.2" />
<line x1="785.0" y1="353.8" x2="790.0" y2="353.5" stroke="#a8989a" stroke-width="1" />
<line x1="797.5" y1="351.5" x2="801.5" y2="351.3" stroke="#c9b4b6" stroke-width="1.2" />
<line x1="806.5" y1="352.9" x2="811.5" y2="352.6" stroke="#a8989a" stroke-width="1" />
<line x1="819.0" y1="350.5" x2="823.0" y2="350.3" stroke="#c9b4b6" stroke-width="1.2" />
<line x1="828.0" y1="351.9" x2="833.0" y2="351.6" stroke="#a8989a" stroke-width="1" />
<line x1="840.5" y1="349.6" x2="844.5" y2="349.4" stroke="#c9b4b6" stroke-width="1.2" />
<line x1="849.5" y1="351.0" x2="854.5" y2="350.7" stroke="#a8989a" stroke-width="1" />
<line x1="862.0" y1="348.6" x2="866.0" y2="348.4" stroke="#c9b4b6" stroke-width="1.2" />
<line x1="871.0" y1="350.0" x2="876.0" y2="349.7" stroke="#a8989a" stroke-width="1" />
<line x1="883.5" y1="347.7" x2="887.5" y2="347.5" stroke="#c9b4b6" stroke-width="1.2" />
<line x1="892.5" y1="349.1" x2="897.5" y2="348.8" stroke="#a8989a" stroke-width="1" />
<line x1="905.0" y1="346.7" x2="909.0" y2="346.5" stroke="#c9b4b6" stroke-width="1.2" />
<line x1="914.0" y1="348.1" x2="919.0" y2="347.8" stroke="#a8989a" stroke-width="1" />
<line x1="926.5" y1="345.8" x2="930.5" y2="345.6" stroke="#c9b4b6" stroke-width="1.2" />
<line x1="935.5" y1="347.2" x2="940.5" y2="346.9" stroke="#a8989a" stroke-width="1" />
<line x1="948.0" y1="344.8" x2="952.0" y2="344.6" stroke="#c9b4b6" stroke-width="1.2" />
<line x1="957.0" y1="346.2" x2="962.0" y2="345.9" stroke="#a8989a" stroke-width="1" />
<line x1="969.5" y1="343.8" x2="973.5" y2="343.6" stroke="#c9b4b6" stroke-width="1.2" />
<line x1="978.5" y1="345.2" x2="983.5" y2="344.9" stroke="#a8989a" stroke-width="1" />
<line x1="991.0" y1="342.9" x2="995.0" y2="342.7" stroke="#c9b4b6" stroke-width="1.2" />
<line x1="1000.0" y1="344.3" x2="1005.0" y2="344.0" stroke="#a8989a" stroke-width="1" />
<line x1="1012.5" y1="341.9" x2="1016.5" y2="341.7" stroke="#c9b4b6" stroke-width="1.2" />
<line x1="1021.5" y1="343.3" x2="1026.5" y2="343.0" stroke="#a8989a" stroke-width="1" />
<line x1="1034.0" y1="341.0" x2="1038.0" y2="340.8" stroke="#c9b4b6" stroke-width="1.2" />
<line x1="1043.0" y1="342.4" x2="1048.0" y2="342.1" stroke="#a8989a" stroke-width="1" />
<line x1="1055.5" y1="340.0" x2="1059.5" y2="339.8" stroke="#c9b4b6" stroke-width="1.2" />
<line x1="1064.5" y1="341.4" x2="1069.5" y2="341.1" stroke="#a8989a" stroke-width="1" />
<line x1="1077.0" y1="339.1" x2="1081.0" y2="338.9" stroke="#c9b4b6" stroke-width="1.2" />
<line x1="1086.0" y1="340.5" x2="1091.0" y2="340.2" stroke="#a8989a" stroke-width="1" />
<line x1="1098.5" y1="338.1" x2="1102.5" y2="337.9" stroke="#c9b4b6" stroke-width="1.2" />
<line x1="1107.5" y1="339.5" x2="1112.5" y2="339.2" stroke="#a8989a" stroke-width="1" />
<line x1="1120.0" y1="337.2" x2="1124.0" y2="337.0" stroke="#c9b4b6" stroke-width="1.2" />
<line x1="1129.0" y1="338.6" x2="1134.0" y2="338.3" stroke="#a8989a" stroke-width="1" />
<line x1="1141.5" y1="336.2" x2="1145.5" y2="336.0" stroke="#c9b4b6" stroke-width="1.2" />
<line x1="1150.5" y1="337.6" x2="1155.5" y2="337.3" stroke="#a8989a" stroke-width="1" />
<line x1="1163.0" y1="335.3" x2="1167.0" y2="335.1" stroke="#c9b4b6" stroke-width="1.2" />
<line x1="1172.0" y1="336.7" x2="1177.0" y2="336.4" stroke="#a8989a" stroke-width="1" />
<line x1="1184.5" y1="334.3" x2="1188.5" y2="334.1" stroke="#c9b4b6" stroke-width="1.2" />
<line x1="1193.5" y1="335.7" x2="1198.5" y2="335.4" stroke="#a8989a" stroke-width="1" />
<line x1="1206.0" y1="333.4" x2="1210.0" y2="333.2" stroke="#c9b4b6" stroke-width="1.2" />
<line x1="1215.0" y1="334.8" x2="1220.0" y2="334.5" stroke="#a8989a" stroke-width="1" />
<line x1="690.0" y1="271.6" x2="698.0" y2="271.2" stroke="#b9a6a8" stroke-width="1.2" />
<line x1="711.3" y1="270.7" x2="719.3" y2="270.3" stroke="#b9a6a8" stroke-width="1.2" />
<line x1="732.6" y1="269.7" x2="740.6" y2="269.4" stroke="#b9a6a8" stroke-width="1.2" />
<line x1="753.9" y1="268.8" x2="761.9" y2="268.5" stroke="#b9a6a8" stroke-width="1.2" />
<line x1="775.2" y1="267.9" x2="783.2" y2="267.6" stroke="#b9a6a8" stroke-width="1.2" />
<line x1="796.5" y1="267.0" x2="804.5" y2="266.7" stroke="#b9a6a8" stroke-width="1.2" />
<line x1="817.8" y1="266.1" x2="825.8" y2="265.8" stroke="#b9a6a8" stroke-width="1.2" />
<line x1="839.1" y1="265.2" x2="847.1" y2="264.8" stroke="#b9a6a8" stroke-width="1.2" />
<line x1="860.4" y1="264.3" x2="868.4" y2="263.9" stroke="#b9a6a8" stroke-width="1.2" />
<line x1="881.7" y1="263.4" x2="889.7" y2="263.0" stroke="#b9a6a8" stroke-width="1.2" />
<line x1="903.0" y1="262.5" x2="911.0" y2="262.1" stroke="#b9a6a8" stroke-width="1.2" />
<line x1="924.3" y1="261.5" x2="932.3" y2="261.2" stroke="#b9a6a8" stroke-width="1.2" />
<line x1="945.6" y1="260.6" x2="953.6" y2="260.3" stroke="#b9a6a8" stroke-width="1.2" />
<line x1="966.9" y1="259.7" x2="974.9" y2="259.4" stroke="#b9a6a8" stroke-width="1.2" />
<line x1="988.2" y1="258.8" x2="996.2" y2="258.5" stroke="#b9a6a8" stroke-width="1.2" />
<line x1="1009.5" y1="257.9" x2="1017.5" y2="257.5" stroke="#b9a6a8" stroke-width="1.2" />
<line x1="1030.8" y1="257.0" x2="1038.8" y2="256.6" stroke="#b9a6a8" stroke-width="1.2" />
<line x1="1052.1" y1="256.1" x2="1060.1" y2="255.7" stroke="#b9a6a8" stroke-width="1.2" />
<line x1="1073.4" y1="255.2" x2="1081.4" y2="254.8" stroke="#b9a6a8" stroke-width="1.2" />
<line x1="1094.7" y1="254.3" x2="1102.7" y2="253.9" stroke="#b9a6a8" stroke-width="1.2" />
<line x1="1116.0" y1="253.3" x2="1124.0" y2="253.0" stroke="#b9a6a8" stroke-width="1.2" />
<line x1="1137.3" y1="252.4" x2="1145.3" y2="252.1" stroke="#b9a6a8" stroke-width="1.2" />
<line x1="1158.6" y1="251.5" x2="1166.6" y2="251.2" stroke="#b9a6a8" stroke-width="1.2" />
<line x1="1179.9" y1="250.6" x2="1187.9" y2="250.3" stroke="#b9a6a8" stroke-width="1.2" />
<polygon points="690.0,274.0 926.0,264.2 962.0,344.5 729.0,353.3" fill="#d06a00" stroke="#000" stroke-width="1" />
<polygon points="942.3,263.0 1176.0,254.0 1213.6,330.6 978.0,343.2" fill="#d06a00" stroke="#000" stroke-width="1" />
<polygon points="731.0,371.5 848.2,367.0 838.5,377.0 740.5,381.0" fill="#c6c6c6" stroke="#000" stroke-width="1" />
<polygon points="726.8,666.0 844.0,662.0 834.5,651.0 737.7,654.5" fill="#c6c6c6" stroke="#000" stroke-width="1" />
<polygon points="731.0,371.5 740.5,381.0 737.7,654.5 726.8,666.0" fill="#b3b3b3" stroke="#000" stroke-width="1" />
<polygon points="848.2,367.0 838.5,377.0 834.5,651.0 844.0,662.0" fill="#adadad" stroke="#000" stroke-width="1" />
<polygon points="848.8,367.5 966.6,363.2 956.9,371.8 858.9,375.8" fill="#c6c6c6" stroke="#000" stroke-width="1" />
<polygon points="844.5,662.0 962.5,658.0 952.5,647.5 855.7,651.0" fill="#c6c6c6" stroke="#000" stroke-width="1" />
<polygon points="848.8,367.5 858.9,375.8 855.7,651.0 844.5,662.0" fill="#bdbdbd" stroke="#000" stroke-width="1" />
<polygon points="966.6,363.2 956.9,371.8 952.5,647.5 962.5,658.0" fill="#adadad" stroke="#000" stroke-width="1" />
<polygon points="981.0,362.7 1099.0,357.8 1089.3,366.5 991.3,370.7" fill="#c6c6c6" stroke="#000" stroke-width="1" />
<polygon points="977.0,657.0 1094.5,651.4 1085.0,638.5 988.0,642.0" fill="#c6c6c6" stroke="#000" stroke-width="1" />
<polygon points="981.0,362.7 991.3,370.7 988.0,642.0 977.0,657.0" fill="#bdbdbd" stroke="#000" stroke-width="1" />
<polygon points="1099.0,357.8 1089.3,366.5 1085.0,638.5 1094.5,651.4" fill="#adadad" stroke="#000" stroke-width="1" />
<polygon points="1099.5,357.8 1217.0,353.2 1207.3,361.8 1109.3,365.8" fill="#c6c6c6" stroke="#000" stroke-width="1" />
<polygon points="1095.0,651.4 1212.8,646.7 1203.4,638.3 1106.0,641.0" fill="#c6c6c6" stroke="#000" stroke-width="1" />
<polygon points="1099.5,357.8 1109.3,365.8 1106.0,641.0 1095.0,651.4" fill="#bdbdbd" stroke="#000" stroke-width="1" />
<polygon points="1217.0,353.2 1207.3,361.8 1203.4,638.3 1212.8,646.7" fill="#adadad" stroke="#000" stroke-width="1" />
<polygon points="714.0,370.7 712.0,668.0 726.5,667.0 730.5,370.0" fill="#000" stroke="#000" stroke-width="1" />
<polygon points="717.6,370.5 715.2,667.8 718.1,667.6 720.9,370.4" fill="#8e7b7d" stroke="none" stroke-width="0" />
<polygon points="722.6,370.3 719.5,667.5 720.3,667.4 723.4,370.3" fill="#8e7b7d" stroke="none" stroke-width="0" />
<polygon points="724.9,370.2 721.6,667.3 724.5,667.1 728.2,370.1" fill="#8e7b7d" stroke="none" stroke-width="0" />
<polygon points="967.2,362.5 963.0,658.0 976.8,657.0 980.4,362.0" fill="#000" stroke="#000" stroke-width="1" />
<polygon points="970.1,362.4 966.0,657.8 968.8,657.6 972.7,362.3" fill="#8e7b7d" stroke="none" stroke-width="0" />
<polygon points="974.1,362.2 970.2,657.5 970.9,657.4 974.7,362.2" fill="#8e7b7d" stroke="none" stroke-width="0" />
<polygon points="975.9,362.2 972.1,657.3 974.9,657.1 978.6,362.1" fill="#8e7b7d" stroke="none" stroke-width="0" />
<polygon points="1217.5,352.0 1213.8,647.0 1226.4,647.0 1230.8,351.0" fill="#000" stroke="#000" stroke-width="1" />
<polygon points="1220.4,351.8 1216.5,647.0 1219.1,647.0 1223.1,351.6" fill="#8e7b7d" stroke="none" stroke-width="0" />
<polygon points="1224.4,351.5 1220.3,647.0 1221.0,647.0 1225.1,351.4" fill="#8e7b7d" stroke="none" stroke-width="0" />
<polygon points="1226.3,351.3 1222.1,647.0 1224.6,647.0 1228.9,351.1" fill="#8e7b7d" stroke="none" stroke-width="0" />
<polygon points="712.0,668.2 1226.0,647.2 1226.0,653.8 712.0,672.8" fill="#c6c6c6" stroke="#000" stroke-width="1" />
<polygon points="712.0,672.8 1226.0,653.8 1226.0,667.0 712.0,687.5" fill="#b3b3b3" stroke="#000" stroke-width="1" />
<line x1="712.0" y1="670.5" x2="1226.0" y2="650.3" stroke="#000" stroke-width="1" stroke-dasharray="26 9"/>
<line x1="712.0" y1="671.6" x2="1226.0" y2="651.6" stroke="#fff" stroke-width="1" stroke-dasharray="16 19"/>
<polygon points="712.0,687.5 729.0,687.5 726.5,921.0 709.3,921.0" fill="#b3b3b3" stroke="#000" stroke-width="1" />
<line x1="714.5" y1="688.0" x2="712.0" y2="920.0" stroke="#fff" stroke-width="1" />
<line x1="716.0" y1="688.0" x2="713.5" y2="920.0" stroke="#000" stroke-width="1" />
<polygon points="1211.0,667.0 1225.5,667.0 1223.5,899.5 1208.0,899.5" fill="#b3b3b3" stroke="#000" stroke-width="1" />
<polygon points="1206.2,667.5 1211.0,667.3 1208.0,899.0 1205.0,860.0" fill="#cfcfcf" stroke="#000" stroke-width="1" />
<polygon points="727.0,912.5 1203.0,893.2 1208.0,899.4 727.0,918.2" fill="#dadada" stroke="#000" stroke-width="1" />
<line x1="740.0" y1="914.5" x2="1200.0" y2="895.5" stroke="#000" stroke-width="1" stroke-dasharray="18 7"/>
<polygon points="709.3,918.8 1223.5,898.8 1223.5,903.0 709.3,923.5" fill="#c6c6c6" stroke="#000" stroke-width="1" />
<polygon points="709.3,923.5 1223.5,903.0 1223.5,914.5 709.3,934.0" fill="#b3b3b3" stroke="#000" stroke-width="1" />
<line x1="728.0" y1="919.5" x2="1206.0" y2="900.8" stroke="#000" stroke-width="1" stroke-dasharray="20 8"/>
<polygon points="709.3,934.0 1223.5,914.5 1222.0,917.0 710.0,937.5" fill="#cfcfcf" stroke="#000" stroke-width="1" />
<polygon points="732.5,933.6 770.5,931.6 770.5,935.6 734.5,937.6" fill="#c6c6c6" stroke="#000" stroke-width="1" />
<ellipse cx="741.5" cy="952.6" rx="11.0" ry="13.0" fill="#6a0f12" stroke="#000" stroke-width="1" shape-rendering="auto" />
<ellipse cx="744.5" cy="954.6" rx="11.0" ry="13.0" fill="#7f1418" stroke="#000" stroke-width="1" shape-rendering="auto" />
<ellipse cx="744.5" cy="954.6" rx="6.0" ry="7.5" fill="#93171c" stroke="#50090b" stroke-width="1" shape-rendering="auto" />
<polygon points="742.5,935.6 764.5,934.6 752.5,956.6 742.5,957.6" fill="#b3b3b3" stroke="#000" stroke-width="1" />
<line x1="747.5" y1="935.6" x2="747.5" y2="956.6" stroke="#000" stroke-width="1" />
<ellipse cx="745.5" cy="953.6" rx="2.0" ry="2.0" fill="#cfcfcf" stroke="#000" stroke-width="1" shape-rendering="auto" />
<rect x="717.8" y="937.4" width="3.6" height="18.0" fill="#d8d8e4" stroke="#777" stroke-width="0.8" />
<ellipse cx="719.6" cy="965.4" rx="10.5" ry="4.5" fill="#6a0f12" stroke="#3c0608" stroke-width="1" shape-rendering="auto" />
<polygon points="709.1,965.4 713.6,957.4 725.6,957.4 730.1,965.4" fill="#7e1418" stroke="#3c0608" stroke-width="1" />
<ellipse cx="719.6" cy="957.4" rx="6.0" ry="2.2" fill="#a32025" stroke="#3c0608" stroke-width="0.8" shape-rendering="auto" />
<rect x="716.6" y="954.4" width="6.0" height="3.0" fill="#c6c6c6" stroke="#333" stroke-width="0.8" />
<polygon points="1194.2,916.2 1156.2,914.2 1156.2,918.2 1192.2,920.2" fill="#c6c6c6" stroke="#000" stroke-width="1" />
<ellipse cx="1185.2" cy="935.2" rx="11.0" ry="13.0" fill="#6a0f12" stroke="#000" stroke-width="1" shape-rendering="auto" />
<ellipse cx="1182.2" cy="937.2" rx="11.0" ry="13.0" fill="#7f1418" stroke="#000" stroke-width="1" shape-rendering="auto" />
<ellipse cx="1182.2" cy="937.2" rx="6.0" ry="7.5" fill="#93171c" stroke="#50090b" stroke-width="1" shape-rendering="auto" />
<polygon points="1184.2,918.2 1162.2,917.2 1174.2,939.2 1184.2,940.2" fill="#b3b3b3" stroke="#000" stroke-width="1" />
<line x1="1179.2" y1="918.2" x2="1179.2" y2="939.2" stroke="#000" stroke-width="1" />
<ellipse cx="1181.2" cy="936.2" rx="2.0" ry="2.0" fill="#cfcfcf" stroke="#000" stroke-width="1" shape-rendering="auto" />
<rect x="1204.8" y="917.4" width="3.6" height="18.0" fill="#d8d8e4" stroke="#777" stroke-width="0.8" />
<ellipse cx="1206.6" cy="945.4" rx="10.5" ry="4.5" fill="#6a0f12" stroke="#3c0608" stroke-width="1" shape-rendering="auto" />
<polygon points="1196.1,945.4 1200.6,937.4 1212.6,937.4 1217.1,945.4" fill="#7e1418" stroke="#3c0608" stroke-width="1" />
<ellipse cx="1206.6" cy="937.4" rx="6.0" ry="2.2" fill="#a32025" stroke="#3c0608" stroke-width="0.8" shape-rendering="auto" />
<rect x="1203.6" y="934.4" width="6.0" height="3.0" fill="#c6c6c6" stroke="#333" stroke-width="0.8" />
<ellipse cx="676.6" cy="884.0" rx="9.0" ry="4.0" fill="#6a0f12" stroke="#3c0608" stroke-width="1" shape-rendering="auto" />
<polygon points="667.6,884.0 671.0,876.0 682.0,876.0 685.6,884.0" fill="#7e1418" stroke="#3c0608" stroke-width="1" />
<rect x="674.0" y="871.0" width="5.0" height="5.0" fill="#c6c6c6" stroke="#333" stroke-width="0.8" />
<rect x="1213.6" y="278.0" width="5.4" height="52.0" fill="#c9c9d6" stroke="#777" stroke-width="0.8" />
<ellipse cx="1217.0" cy="333.5" rx="9.5" ry="3.6" fill="#5a0b0e" stroke="#2a0405" stroke-width="1" shape-rendering="auto" />
<ellipse cx="1217.0" cy="331.5" rx="6.0" ry="2.4" fill="#7a1216" stroke="#2a0405" stroke-width="0.8" shape-rendering="auto" />
<defs><linearGradient id="cg"><stop offset="0" stop-color="#8d8d9c"/><stop offset="0.35" stop-color="#d9d9e6"/><stop offset="1" stop-color="#8a8a98"/></linearGradient><linearGradient id="cr"><stop offset="0" stop-color="#7d0000"/><stop offset="0.4" stop-color="#c40d0d"/><stop offset="1" stop-color="#7d0000"/></linearGradient><linearGradient id="cy"><stop offset="0" stop-color="#a9a400"/><stop offset="0.4" stop-color="#eeea00"/><stop offset="1" stop-color="#a9a400"/></linearGradient><linearGradient id="cgn"><stop offset="0" stop-color="#009a1a"/><stop offset="0.4" stop-color="#00d92e"/><stop offset="1" stop-color="#009a1a"/></linearGradient></defs>
<rect x="1205.6" y="180" width="22.9" height="98" fill="url(#cg)" stroke="#222" stroke-width="0.8"/>
<rect x="1205.6" y="188.6" width="22.9" height="20.400000000000006" fill="url(#cr)" stroke="#222" stroke-width="0.8"/>
<rect x="1205.6" y="215" width="22.9" height="20.599999999999994" fill="url(#cy)" stroke="#222" stroke-width="0.8"/>
<rect x="1205.6" y="241.3" width="22.9" height="20.69999999999999" fill="url(#cgn)" stroke="#222" stroke-width="0.8"/>
<ellipse cx="1217.0" cy="180.0" rx="11.4" ry="4.0" fill="#e9e9f0" stroke="#222" stroke-width="0.8" shape-rendering="auto" />
<ellipse cx="1217.0" cy="209.0" rx="11.4" ry="2.5" fill="none" stroke="#222" stroke-width="0.8" shape-rendering="auto" />
<ellipse cx="1217.0" cy="235.6" rx="11.4" ry="2.5" fill="none" stroke="#222" stroke-width="0.8" shape-rendering="auto" />
<ellipse cx="1217.0" cy="262.0" rx="11.4" ry="2.5" fill="none" stroke="#222" stroke-width="0.8" shape-rendering="auto" />
<polygon points="1230.0,465.3 1246.0,463.0 1248.0,470.0 1248.0,499.0 1230.0,500.0" fill="#b3b3b3" stroke="#000" stroke-width="1" />
<polygon points="1230.0,465.3 1246.0,463.0 1248.0,470.0 1230.0,473.0" fill="#c6c6c6" stroke="#000" stroke-width="1" />
<line x1="1230.0" y1="478.0" x2="1248.0" y2="477.0" stroke="#000" stroke-width="1" />
<polygon points="1230.0,537.4 1290.5,535.8 1302.0,561.4 1230.0,563.7" fill="#3a3033" stroke="#000" stroke-width="1" />
<line x1="1232.0" y1="540.0" x2="1289.1" y2="538.4" stroke="#9d8c8e" stroke-width="2.6" stroke-dasharray="3.2 1.6"/>
<line x1="1232.0" y1="545.3" x2="1291.3" y2="543.5" stroke="#9d8c8e" stroke-width="2.6" stroke-dasharray="3.2 1.6"/>
<line x1="1232.0" y1="550.5" x2="1293.5" y2="548.6" stroke="#9d8c8e" stroke-width="2.6" stroke-dasharray="3.2 1.6"/>
<line x1="1232.0" y1="555.8" x2="1295.7" y2="553.7" stroke="#9d8c8e" stroke-width="2.6" stroke-dasharray="3.2 1.6"/>
<line x1="1232.0" y1="561.1" x2="1297.9" y2="558.8" stroke="#9d8c8e" stroke-width="2.6" stroke-dasharray="3.2 1.6"/>
<polygon points="1288.0,536.0 1290.5,535.8 1302.0,561.4 1299.0,561.6" fill="#a89899" stroke="#000" stroke-width="1" />
<polygon points="1230.0,564.9 1250.0,564.5 1251.5,571.0 1230.0,571.7" fill="#c6c6c6" stroke="#000" stroke-width="1" />
<polygon points="1226.5,563.0 1230.0,563.0 1230.0,574.0 1226.5,574.0" fill="#c6c6c6" stroke="#000" stroke-width="1" />
<line x1="900.0" y1="654.0" x2="900.0" y2="590.0" stroke="#20b8b8" stroke-width="2.4" />
<polygon points="896.6,592.0 900.0,582.0 903.4,592.0" fill="#20c8c8" stroke="none" stroke-width="0" />
<line x1="900.0" y1="654.5" x2="858.0" y2="655.5" stroke="#2cc02c" stroke-width="2.4" />
<polygon points="851.0,655.7 860.0,652.0 860.0,659.0" fill="#30d030" stroke="none" stroke-width="0" />
<ellipse cx="894.7" cy="645.5" rx="2.6" ry="3.6" fill="#c02020" stroke="none" stroke-width="0" shape-rendering="auto" opacity="0.8"/>
<text x="888.3" y="643.2" font-size="10" fill="#e81818" font-family="Liberation Sans, sans-serif">X</text>
<ellipse cx="900.5" cy="654.5" rx="4.0" ry="4.0" fill="#777" stroke="none" stroke-width="0" shape-rendering="auto" />
<rect x="94.9" y="918.2" width="22.1" height="23.1" fill="rgba(255,255,255,0.18)" stroke="#d8d8d8" stroke-width="1" />
<polygon points="90.0,934.0 112.0,934.0 117.0,941.0 94.5,941.0" fill="rgba(170,170,90,0.75)" stroke="#f0e800" stroke-width="1" />
<line x1="120.3" y1="940.0" x2="120.3" y2="880.0" stroke="#00c4cc" stroke-width="3" />
<polygon points="116.0,881.5 120.3,870.5 124.6,881.5" fill="#10e0e8" stroke="none" stroke-width="0" />
<line x1="118.0" y1="942.3" x2="78.0" y2="943.0" stroke="#18c818" stroke-width="3" />
<polygon points="70.5,943.2 81.0,938.5 81.0,947.6" fill="#20e020" stroke="none" stroke-width="0" />
<ellipse cx="115.5" cy="935.0" rx="3.2" ry="4.0" fill="#d03020" stroke="none" stroke-width="0" shape-rendering="auto" />
<text x="108.6" y="933.2" font-size="10.5" fill="#e82828" font-family="Liberation Sans, sans-serif">X</text>
<ellipse cx="120.3" cy="942.0" rx="3.8" ry="3.8" fill="#6c6c6c" stroke="none" stroke-width="0" shape-rendering="auto" />
<text x="116.5" y="868.5" font-size="11" fill="#d4d4d4" font-family="Liberation Sans, sans-serif">Z</text>
<text x="59.5" y="948" font-size="11" fill="#d4d4d4" font-family="Liberation Sans, sans-serif">Y</text>
<defs><linearGradient id="wm" x2="0" y2="1"><stop offset="0" stop-color="#f27a22"/><stop offset="1" stop-color="#f5a623"/></linearGradient><linearGradient id="wm2" x2="1" y2="1"><stop offset="0" stop-color="#f5b21e"/><stop offset="1" stop-color="#f07a20"/></linearGradient></defs>
<g shape-rendering="auto" opacity="0.9" fill="url(#wm)"><path d="M891.4 517.5l1.9 -1.2v21.2h-1.900z"/><path d="M895.200 513l2.300 -1.800v24.500h-2.300z"/><path d="M899 509.500l2.800 -2.200v27h-2.800z"/><path d="M936 517.500l-1.900 -1.200v21.200h1.900z"/><path d="M932.200 513l-2.300 -1.800v24.500h2.300z"/><path d="M928.400 509.500l-2.800 -2.200v27h2.800z"/><path d="M891.400 537.500h14l4.500 1.500h7.600l4.500 -1.500h14v2.300h-13.500l-4.600 1.500h-8.400l-4.600 -1.500h-13.500z"/><circle cx="912.7" cy="523.4" r="7.3" fill="none" stroke="url(#wm2)" stroke-width="3.6" stroke-dasharray="38 8" transform="rotate(-100 912.7 523.4)"/><path d="M909.6 515l4.6 -2.5l-0.6 20l-2.6 -1.5z" fill="url(#wm2)"/></g>
<text x="947" y="529.2" font-size="16.600" fill="#f28c22" opacity="0.92" shape-rendering="auto" font-family="Liberation Sans, Noto Sans CJK SC, sans-serif" font-weight="500" textLength="82" lengthAdjust="spacingAndGlyphs">智造资料网</text>
<text x="947.500" y="538" font-size="4.900" fill="#f28c22" opacity="0.92" font-family="Liberation Sans, sans-serif" font-weight="bold" textLength="81" lengthAdjust="spacingAndGlyphs">INTELLIGENT MANUFACTURING DATA</text>
</svg>

<svg class="abs" style="left:0;top:0" width="400" height="400" viewBox="0 0 400 400"><rect x="64" y="113" width="24" height="24" fill="#80859a"/>
<rect x="92" y="113" width="24" height="24" fill="#80859a"/>
<rect x="120" y="113" width="24" height="24" fill="#80859a"/>
<rect x="148" y="113" width="24" height="24" fill="#80859a"/>
<rect x="176" y="113" width="24" height="24" fill="#80859a"/>
<rect x="204" y="113" width="24" height="24" fill="#80859a"/>
<rect x="232" y="113" width="24" height="24" fill="#80859a"/>
<rect x="260" y="113" width="24" height="24" fill="#80859a"/>
<rect x="288" y="113" width="24" height="24" fill="#80859a"/>
<rect x="316" y="113" width="24" height="24" fill="#80859a"/>
<rect x="344" y="113" width="24" height="24" fill="#80859a"/>
<path d="M68 118.500h16M68 125h16M68 131.500h16" stroke="#3d5486" stroke-width="3.4"/><path d="M68 117.500h16M68 124h16M68 130.500h16" stroke="#6c82b4" stroke-width="0.8"/>
<rect x="98" y="120" width="12" height="10" fill="url(#pg)" stroke="#9098a8" stroke-width="1"/><path d="M94.4 116.4l3.2 3.2M97.6 116.4l-3.2 3.2" stroke="#2eb82e" stroke-width="1.6"/><rect x="95" y="117" width="2" height="2" fill="#1d8a1d"/><path d="M110.4 116.4l3.2 3.2M113.6 116.4l-3.2 3.2" stroke="#2eb82e" stroke-width="1.6"/><rect x="111" y="117" width="2" height="2" fill="#1d8a1d"/><path d="M94.4 130.4l3.2 3.2M97.6 130.4l-3.2 3.2" stroke="#2eb82e" stroke-width="1.6"/><rect x="95" y="131" width="2" height="2" fill="#1d8a1d"/><path d="M110.4 130.4l3.2 3.2M113.6 130.4l-3.2 3.2" stroke="#2eb82e" stroke-width="1.6"/><rect x="111" y="131" width="2" height="2" fill="#1d8a1d"/>
<g opacity="0.45"><path d="M125.5 125.5l-5 5" stroke="#8a8f99" stroke-width="3.2" stroke-linecap="round"/><path d="M125.5 125.5l-5 5" stroke="#d6d9df" stroke-width="1.2" stroke-linecap="round"/><circle cx="129" cy="122" r="5" fill="url(#mag)" stroke="#7d8aa0" stroke-width="1.6"/></g><g opacity="0.7"><path d="M128.0 126.0l-5 5" stroke="#8a8f99" stroke-width="3.2" stroke-linecap="round"/><path d="M128.0 126.0l-5 5" stroke="#d6d9df" stroke-width="1.2" stroke-linecap="round"/><circle cx="131.5" cy="122.5" r="5" fill="url(#mag)" stroke="#7d8aa0" stroke-width="1.6"/></g><path d="M130.7 126.8l-6 6" stroke="#8a8f99" stroke-width="3.2" stroke-linecap="round"/><path d="M130.7 126.8l-6 6" stroke="#d6d9df" stroke-width="1.2" stroke-linecap="round"/><circle cx="134.5" cy="123" r="5.4" fill="url(#mag)" stroke="#7d8aa0" stroke-width="1.6"/>
<g transform="translate(162,126) scale(0.9)"><path d="M-10 3l9 -6l11 3l-9 7z" fill="none" stroke="#555" stroke-width="0.7" fill-opacity="0.85"/><path d="M-3 3V-8" stroke="#1a6ae8" stroke-width="1.8"/><path d="M-3 -11l-2.5 4h5z" fill="#1a6ae8"/><path d="M-3 3L5 -3" stroke="#2eb82e" stroke-width="1.8"/><path d="M8 -5l-5 1l3 3z" fill="#2eb82e"/><path d="M-3 3L3 8" stroke="#e02020" stroke-width="1.8"/><path d="M5.5 10l-1 -5l-3.5 3.5z" fill="#e02020"/><circle cx="-3" cy="3" r="1.8" fill="#d8d8d0" stroke="#555" stroke-width="0.6"/></g>
<line x1="187.3" y1="116.3" x2="187.3" y2="126.3" stroke="#050505" stroke-width="1.4"/><line x1="179.0" y1="130.5" x2="187.3" y2="126.3" stroke="#050505" stroke-width="1.4"/><line x1="187.3" y1="126.3" x2="197.0" y2="129.7" stroke="#050505" stroke-width="1.4"/><polygon points="179.0,120.5 187.3,116.3 197.0,119.7 188.2,123.8" fill="url(#gcube)"/><line x1="179.0" y1="120.5" x2="187.3" y2="116.3" stroke="#050505" stroke-width="1.4"/><line x1="187.3" y1="116.3" x2="197.0" y2="119.7" stroke="#050505" stroke-width="1.4"/><line x1="197.0" y1="119.7" x2="188.2" y2="123.8" stroke="#050505" stroke-width="1.4"/><line x1="188.2" y1="123.8" x2="179.0" y2="120.5" stroke="#050505" stroke-width="1.4"/><line x1="197.0" y1="129.7" x2="188.2" y2="134.3" stroke="#050505" stroke-width="1.4"/><line x1="188.2" y1="134.3" x2="179.0" y2="130.5" stroke="#050505" stroke-width="1.4"/><line x1="179.0" y1="120.5" x2="179.0" y2="130.5" stroke="#050505" stroke-width="1.4"/><line x1="197.0" y1="119.7" x2="197.0" y2="129.7" stroke="#050505" stroke-width="1.4"/><line x1="188.2" y1="123.8" x2="188.2" y2="134.3" stroke="#050505" stroke-width="1.4"/>
<line x1="215.3" y1="116.3" x2="215.3" y2="126.3" stroke="#050505" stroke-width="1.4"/><line x1="207.0" y1="130.5" x2="215.3" y2="126.3" stroke="#050505" stroke-width="1.4"/><line x1="215.3" y1="126.3" x2="225.0" y2="129.7" stroke="#050505" stroke-width="1.4"/><polygon points="207.0,130.5 215.3,126.3 225.0,129.7 216.2,134.3" fill="url(#gcube)"/><line x1="207.0" y1="120.5" x2="215.3" y2="116.3" stroke="#050505" stroke-width="1.4"/><line x1="215.3" y1="116.3" x2="225.0" y2="119.7" stroke="#050505" stroke-width="1.4"/><line x1="225.0" y1="119.7" x2="216.2" y2="123.8" stroke="#050505" stroke-width="1.4"/><line x1="216.2" y1="123.8" x2="207.0" y2="120.5" stroke="#050505" stroke-width="1.4"/><line x1="225.0" y1="129.7" x2="216.2" y2="134.3" stroke="#050505" stroke-width="1.4"/><line x1="216.2" y1="134.3" x2="207.0" y2="130.5" stroke="#050505" stroke-width="1.4"/><line x1="207.0" y1="120.5" x2="207.0" y2="130.5" stroke="#050505" stroke-width="1.4"/><line x1="225.0" y1="119.7" x2="225.0" y2="129.7" stroke="#050505" stroke-width="1.4"/><line x1="216.2" y1="123.8" x2="216.2" y2="134.3" stroke="#050505" stroke-width="1.4"/>
<line x1="243.3" y1="116.3" x2="243.3" y2="126.3" stroke="#050505" stroke-width="1.4"/><line x1="235.0" y1="130.5" x2="243.3" y2="126.3" stroke="#050505" stroke-width="1.4"/><line x1="243.3" y1="126.3" x2="253.0" y2="129.7" stroke="#050505" stroke-width="1.4"/><polygon points="235.0,120.5 243.3,116.3 243.3,126.3 235.0,130.5" fill="url(#gcube)"/><line x1="235.0" y1="120.5" x2="243.3" y2="116.3" stroke="#050505" stroke-width="1.4"/><line x1="243.3" y1="116.3" x2="253.0" y2="119.7" stroke="#050505" stroke-width="1.4"/><line x1="253.0" y1="119.7" x2="244.2" y2="123.8" stroke="#050505" stroke-width="1.4"/><line x1="244.2" y1="123.8" x2="235.0" y2="120.5" stroke="#050505" stroke-width="1.4"/><line x1="253.0" y1="129.7" x2="244.2" y2="134.3" stroke="#050505" stroke-width="1.4"/><line x1="244.2" y1="134.3" x2="235.0" y2="130.5" stroke="#050505" stroke-width="1.4"/><line x1="235.0" y1="120.5" x2="235.0" y2="130.5" stroke="#050505" stroke-width="1.4"/><line x1="253.0" y1="119.7" x2="253.0" y2="129.7" stroke="#050505" stroke-width="1.4"/><line x1="244.2" y1="123.8" x2="244.2" y2="134.3" stroke="#050505" stroke-width="1.4"/>
<line x1="271.3" y1="116.3" x2="271.3" y2="126.3" stroke="#050505" stroke-width="1.4"/><line x1="263.0" y1="130.5" x2="271.3" y2="126.3" stroke="#050505" stroke-width="1.4"/><line x1="271.3" y1="126.3" x2="281.0" y2="129.7" stroke="#050505" stroke-width="1.4"/><polygon points="272.2,123.8 281.0,119.7 281.0,129.7 272.2,134.3" fill="url(#gcube)"/><line x1="263.0" y1="120.5" x2="271.3" y2="116.3" stroke="#050505" stroke-width="1.4"/><line x1="271.3" y1="116.3" x2="281.0" y2="119.7" stroke="#050505" stroke-width="1.4"/><line x1="281.0" y1="119.7" x2="272.2" y2="123.8" stroke="#050505" stroke-width="1.4"/><line x1="272.2" y1="123.8" x2="263.0" y2="120.5" stroke="#050505" stroke-width="1.4"/><line x1="281.0" y1="129.7" x2="272.2" y2="134.3" stroke="#050505" stroke-width="1.4"/><line x1="272.2" y1="134.3" x2="263.0" y2="130.5" stroke="#050505" stroke-width="1.4"/><line x1="263.0" y1="120.5" x2="263.0" y2="130.5" stroke="#050505" stroke-width="1.4"/><line x1="281.0" y1="119.7" x2="281.0" y2="129.7" stroke="#050505" stroke-width="1.4"/><line x1="272.2" y1="123.8" x2="272.2" y2="134.3" stroke="#050505" stroke-width="1.4"/>
<line x1="299.3" y1="116.3" x2="299.3" y2="126.3" stroke="#050505" stroke-width="1.4"/><line x1="291.0" y1="130.5" x2="299.3" y2="126.3" stroke="#050505" stroke-width="1.4"/><line x1="299.3" y1="126.3" x2="309.0" y2="129.7" stroke="#050505" stroke-width="1.4"/><polygon points="291.0,120.5 300.2,123.8 300.2,134.3 291.0,130.5" fill="url(#gcube)"/><line x1="291.0" y1="120.5" x2="299.3" y2="116.3" stroke="#050505" stroke-width="1.4"/><line x1="299.3" y1="116.3" x2="309.0" y2="119.7" stroke="#050505" stroke-width="1.4"/><line x1="309.0" y1="119.7" x2="300.2" y2="123.8" stroke="#050505" stroke-width="1.4"/><line x1="300.2" y1="123.8" x2="291.0" y2="120.5" stroke="#050505" stroke-width="1.4"/><line x1="309.0" y1="129.7" x2="300.2" y2="134.3" stroke="#050505" stroke-width="1.4"/><line x1="300.2" y1="134.3" x2="291.0" y2="130.5" stroke="#050505" stroke-width="1.4"/><line x1="291.0" y1="120.5" x2="291.0" y2="130.5" stroke="#050505" stroke-width="1.4"/><line x1="309.0" y1="119.7" x2="309.0" y2="129.7" stroke="#050505" stroke-width="1.4"/><line x1="300.2" y1="123.8" x2="300.2" y2="134.3" stroke="#050505" stroke-width="1.4"/>
<line x1="327.3" y1="116.3" x2="327.3" y2="126.3" stroke="#050505" stroke-width="1.4"/><line x1="319.0" y1="130.5" x2="327.3" y2="126.3" stroke="#050505" stroke-width="1.4"/><line x1="327.3" y1="126.3" x2="337.0" y2="129.7" stroke="#050505" stroke-width="1.4"/><polygon points="327.3,116.3 337.0,119.7 337.0,129.7 327.3,126.3" fill="url(#gcube)"/><line x1="319.0" y1="120.5" x2="327.3" y2="116.3" stroke="#050505" stroke-width="1.4"/><line x1="327.3" y1="116.3" x2="337.0" y2="119.7" stroke="#050505" stroke-width="1.4"/><line x1="337.0" y1="119.7" x2="328.2" y2="123.8" stroke="#050505" stroke-width="1.4"/><line x1="328.2" y1="123.8" x2="319.0" y2="120.5" stroke="#050505" stroke-width="1.4"/><line x1="337.0" y1="129.7" x2="328.2" y2="134.3" stroke="#050505" stroke-width="1.4"/><line x1="328.2" y1="134.3" x2="319.0" y2="130.5" stroke="#050505" stroke-width="1.4"/><line x1="319.0" y1="120.5" x2="319.0" y2="130.5" stroke="#050505" stroke-width="1.4"/><line x1="337.0" y1="119.7" x2="337.0" y2="129.7" stroke="#050505" stroke-width="1.4"/><line x1="328.2" y1="123.8" x2="328.2" y2="134.3" stroke="#050505" stroke-width="1.4"/>
<polygon points="347.0,120.5 355.3,116.3 365.0,119.7 356.2,123.8" fill="#4ee64e" stroke="#0c7a0c" stroke-width="0.8"/><polygon points="347.0,120.5 356.2,123.8 356.2,134.3 347.0,130.5" fill="#22c022" stroke="#0c7a0c" stroke-width="0.8"/><polygon points="356.2,123.8 365.0,119.7 365.0,129.7 356.2,134.3" fill="#2fd02f" stroke="#0c7a0c" stroke-width="0.8"/>
<rect x="64" y="141" width="24" height="24" fill="#80859a"/>
<rect x="64" y="169" width="24" height="24" fill="#80859a"/>
<rect x="64" y="197" width="24" height="24" fill="#c9b273" stroke="#f2d45c" stroke-width="1.4"/>
<rect x="64" y="225" width="24" height="24" fill="#80859a"/>
<rect x="64" y="253" width="24" height="24" fill="#80859a"/>
<g transform="translate(76.0,153.0) scale(1)"><path d="M-5 -6.5v13.0a5 2.4 0 0 0 10 0v-13.0" fill="none" stroke="#222" stroke-width="1.1"/><ellipse cx="0" cy="-6.5" rx="5" ry="2.4" fill="none" stroke="#222" stroke-width="1.1"/></g>
<g transform="translate(76.0,181.0) scale(1)"><path d="M-5 -6.5v13.0a5 2.4 0 0 0 10 0v-13.0" fill="none" stroke="#222" stroke-width="1.1"/><ellipse cx="0" cy="-6.5" rx="5" ry="2.4" fill="none" stroke="#222" stroke-width="1.1"/></g>
<g transform="translate(76.0,209.0) scale(1)"><path d="M-5 -6.5v13.0a5 2.4 0 0 0 10 0v-13.0" fill="url(#cb2)" stroke="#1b2a55" stroke-width="1.1"/><ellipse cx="0" cy="-6.5" rx="5" ry="2.4" fill="#8db0ee" stroke="#1b2a55" stroke-width="1.1"/></g>
<g transform="translate(76.0,237.0) scale(1)"><path d="M-5 -6.5v13.0a5 2.4 0 0 0 10 0v-13.0" fill="url(#ct)" stroke="#5c6684" stroke-width="1.1"/><ellipse cx="0" cy="-6.5" rx="5" ry="2.4" fill="#eef3fc" stroke="#5c6684" stroke-width="1.1"/></g>
<g transform="translate(76.0,265.0) scale(1)"><path d="M-5 -6.5v13.0a5 2.4 0 0 0 10 0v-13.0" fill="#8a8f9e" stroke="#222" stroke-width="1.1"/><ellipse cx="0" cy="-6.5" rx="5" ry="2.4" fill="#8a8f9e" stroke="#222" stroke-width="1.1"/><path d="M-3 -6l2 6l-3 7M1 -7l-2 7l3 7M4 -6l-1 6l2 7" fill="none" stroke="#222" stroke-width="0.7"/></g>
<rect x="0" y="109" width="60" height="9" fill="#4c5f86"/>
<path d="M2 122h56M2 375.500h56" stroke="#fff" stroke-width="2" stroke-dasharray="2 2"/><path d="M3 123h56M3 376.500h56" stroke="#a8b0c4" stroke-width="1" stroke-dasharray="2 2"/>
<g transform="translate(17.4,144.1) scale(0.9) translate(-17.4,-144.1)"><g opacity="0.45"><path d="M10.5 143.5l-5 5" stroke="#8a8f99" stroke-width="3.2" stroke-linecap="round"/><path d="M10.5 143.5l-5 5" stroke="#d6d9df" stroke-width="1.2" stroke-linecap="round"/><circle cx="14" cy="140" r="5" fill="url(#mag)" stroke="#7d8aa0" stroke-width="1.6"/></g><g opacity="0.7"><path d="M13.0 144.0l-5 5" stroke="#8a8f99" stroke-width="3.2" stroke-linecap="round"/><path d="M13.0 144.0l-5 5" stroke="#d6d9df" stroke-width="1.2" stroke-linecap="round"/><circle cx="16.5" cy="140.5" r="5" fill="url(#mag)" stroke="#7d8aa0" stroke-width="1.6"/></g><path d="M15.7 144.8l-6 6" stroke="#8a8f99" stroke-width="3.2" stroke-linecap="round"/><path d="M15.7 144.8l-6 6" stroke="#d6d9df" stroke-width="1.2" stroke-linecap="round"/><circle cx="19.5" cy="141" r="5.4" fill="url(#mag)" stroke="#7d8aa0" stroke-width="1.6"/></g>
<g transform="translate(43.8,144.1) scale(0.9) translate(-43.8,-144.1)"><path d="M34 135l17 18M36 148l6 -12" stroke="#3a70d8" stroke-width="1.6" stroke-dasharray="5 2"/><g transform="translate(43.8,143.3)"><path d="M-7 8l2.5 -5.5l11 -11l3 3l-11 11z" fill="#c8893a" stroke="#6a4418" stroke-width="0.7"/><path d="M-7 8l2.5 -5.5l3 3z" fill="#e8d8b0" stroke="#6a4418" stroke-width="0.5"/><path d="M-7 8l1.2 -2.4l1.2 1.2z" fill="#222"/><path d="M6.500 -8.500l3 3l1.800 -1.800l-3 -3z" fill="#d03030"/></g><path d="M48.8 132.3h6l-3 3.2z" fill="#000"/></g>
<g transform="translate(17.4,170.0) scale(0.9) translate(-17.4,-170.0)"><rect x="11.399999999999999" y="164.15" width="12" height="10" fill="url(#pg)" stroke="#9098a8" stroke-width="1"/><path d="M7.799999999999999 160.55l3.2 3.2M10.999999999999998 160.55l-3.2 3.2" stroke="#2eb82e" stroke-width="1.6"/><rect x="8.399999999999999" y="161.15" width="2" height="2" fill="#1d8a1d"/><path d="M23.799999999999997 160.55l3.2 3.2M27.0 160.55l-3.2 3.2" stroke="#2eb82e" stroke-width="1.6"/><rect x="24.4" y="161.15" width="2" height="2" fill="#1d8a1d"/><path d="M7.799999999999999 174.55l3.2 3.2M10.999999999999998 174.55l-3.2 3.2" stroke="#2eb82e" stroke-width="1.6"/><rect x="8.399999999999999" y="175.15" width="2" height="2" fill="#1d8a1d"/><path d="M23.799999999999997 174.55l3.2 3.2M27.0 174.55l-3.2 3.2" stroke="#2eb82e" stroke-width="1.6"/><rect x="24.4" y="175.15" width="2" height="2" fill="#1d8a1d"/></g>
<g transform="translate(43.8,170.0) scale(0.9) translate(-43.8,-170.0)"><path d="M40 160c-6 -1 -6 8 0 9c6 1 12 -4 12 3c0 5 -8 6 -10 1" fill="none" stroke="#3a70d8" stroke-width="1.8"/><g transform="translate(43.8,169.15)"><path d="M-7 8l2.5 -5.5l11 -11l3 3l-11 11z" fill="#c8893a" stroke="#6a4418" stroke-width="0.7"/><path d="M-7 8l2.5 -5.5l3 3z" fill="#e8d8b0" stroke="#6a4418" stroke-width="0.5"/><path d="M-7 8l1.2 -2.4l1.2 1.2z" fill="#222"/><path d="M6.500 -8.500l3 3l1.800 -1.800l-3 -3z" fill="#d03030"/></g><path d="M48.8 158.15h6l-3 3.2z" fill="#000"/></g>
<g transform="translate(17.4,195.8) scale(0.9) translate(-17.4,-195.8)"><path d="M18 198l5 -2l5 2v7l-5 3l-5 -3z" fill="#7c7f84" stroke="#333" stroke-width="0.6"/><path d="M23 200.5l5 -2.5v7l-5 3z" fill="#55585c"/><path d="M18 198l5 2.5l5 -2.5M23 200.5v7" fill="none" stroke="#333" stroke-width="0.6"/><path d="M15.2 196.8l-7 7" stroke="#8a8f99" stroke-width="3.2" stroke-linecap="round"/><path d="M15.2 196.8l-7 7" stroke="#d6d9df" stroke-width="1.2" stroke-linecap="round"/><circle cx="19" cy="193" r="5.5" fill="url(#mag)" stroke="#7d8aa0" stroke-width="1.6"/><path d="M17 190l4.500 3l-4.500 3z" fill="none" stroke="#6d86b8" stroke-width="0.8"/><path d="M7 186.500h4M9 184.500v4M7 190.500h4" stroke="#111" stroke-width="1"/><path d="M22.4 184.0h6l-3 3.2z" fill="#000"/></g>
<g transform="translate(43.8,195.8) scale(0.9) translate(-43.8,-195.8)"><path d="M36 187h15v7h-3v5h-12z" fill="#fdfdf0" stroke="#f0e800" stroke-width="1.8"/><path d="M39 194l3.500 4.500l6 -10" fill="none" stroke="#38c038" stroke-width="2.8"/><path d="M48.8 184.0h6l-3 3.2z" fill="#000"/></g>
<g transform="translate(17.4,221.7) scale(0.9) translate(-17.4,-221.7)"><g transform="translate(19,221.85000000000002) scale(1.05)"><path d="M-10 3l9 -6l11 3l-9 7z" fill="#e4ebf8" stroke="#b4bdd4" stroke-width="0.7" fill-opacity="0.85"/><path d="M-3 3V-8" stroke="#1a6ae8" stroke-width="1.8"/><path d="M-3 -11l-2.5 4h5z" fill="#1a6ae8"/><path d="M-3 3L5 -3" stroke="#2eb82e" stroke-width="1.8"/><path d="M8 -5l-5 1l3 3z" fill="#2eb82e"/><path d="M-3 3L3 8" stroke="#e02020" stroke-width="1.8"/><path d="M5.5 10l-1 -5l-3.5 3.5z" fill="#e02020"/><circle cx="-3" cy="3" r="1.8" fill="#d8d8d0" stroke="#555" stroke-width="0.6"/></g><path d="M22.4 209.85000000000002h6l-3 3.2z" fill="#000"/></g>
<g transform="translate(43.8,221.7) scale(0.9) translate(-43.8,-221.7)"><path d="M36 222c1 -14 6 -14 8 -2c2 12 7 12 8 0" fill="none" stroke="#3a70d8" stroke-width="1.8"/><g transform="translate(43.8,220.85000000000002)"><path d="M-7 8l2.5 -5.5l11 -11l3 3l-11 11z" fill="#c8893a" stroke="#6a4418" stroke-width="0.7"/><path d="M-7 8l2.5 -5.5l3 3z" fill="#e8d8b0" stroke="#6a4418" stroke-width="0.5"/><path d="M-7 8l1.2 -2.4l1.2 1.2z" fill="#222"/><path d="M6.500 -8.500l3 3l1.800 -1.800l-3 -3z" fill="#d03030"/></g><path d="M48.8 209.85000000000002h6l-3 3.2z" fill="#000"/></g>
<g transform="translate(17.4,247.5) scale(0.9) translate(-17.4,-247.5)"><g transform="translate(17.4,247.7) scale(1)"><path d="M-9 -9h12l3 2h-12z" fill="#6c86dc" stroke="#3d50a8" stroke-width="0.6"/><path d="M-9 -6h12l3 2h-12z" fill="#e8ecfa" stroke="#7d88b8" stroke-width="0.6"/><path d="M-9 -3h12l3 2h-12z" fill="#c8cee8" stroke="#7d88b8" stroke-width="0.6"/><ellipse cx="0" cy="5" rx="8" ry="5.5" fill="#c99a6a" stroke="#6a4a2a" stroke-width="0.8"/><circle cx="-4" cy="6" r="1.8" fill="#1a3ae0"/><circle cx="0.5" cy="7.5" r="1.8" fill="#18b028"/><circle cx="4" cy="4.500" r="1.8" fill="#e02020"/><path d="M9 -10L1 2" stroke="#c0702a" stroke-width="2"/><path d="M2 0l-2 4" stroke="#444" stroke-width="2"/></g><path d="M22.4 235.70000000000002h6l-3 3.2z" fill="#000"/></g>
<g transform="translate(43.8,247.5) scale(0.9) translate(-43.8,-247.5)"><g transform="translate(43.8,246.7) scale(1)"><path d="M-4 -8l13 -2l-4 17l-14 2z" fill="#a8d0f8" stroke="#2858d8" stroke-width="1.8"/><path d="M2.500 -9l-4.500 18M-6.500 0.500l13.500 -2" stroke="#eef6ff" stroke-width="1.6"/></g><path d="M48.8 235.70000000000002h6l-3 3.2z" fill="#000"/></g>
<g transform="translate(17.4,273.4) scale(0.9) translate(-17.4,-273.4)"><g transform="translate(17.4,273.6) scale(1)"><g transform="translate(0,0) scale(1.3)"><g transform="rotate(0)"><path d="M-5.9 -1.2A6 6 0 0 1 4.4 -4.1" fill="none" stroke="#2d5fa8" stroke-width="3.6"/><path d="M9 -5.4L1.8 -1.2L7.6 1.6Z" fill="#6fa4e6" stroke="#2d5fa8" stroke-width="0.7"/><path d="M-5.9 -1.2A6 6 0 0 1 4.4 -4.1" fill="none" stroke="#6fa4e6" stroke-width="2.4"/></g><g transform="rotate(180)"><path d="M-5.9 -1.2A6 6 0 0 1 4.4 -4.1" fill="none" stroke="#2d5fa8" stroke-width="3.6"/><path d="M9 -5.4L1.8 -1.2L7.6 1.6Z" fill="#8bb6ea" stroke="#2d5fa8" stroke-width="0.7"/><path d="M-5.9 -1.2A6 6 0 0 1 4.4 -4.1" fill="none" stroke="#8bb6ea" stroke-width="2.4"/></g></g></g><path d="M22.4 261.55h6l-3 3.2z" fill="#000"/></g>
<g transform="translate(43.8,273.4) scale(0.9) translate(-43.8,-273.4)"><g transform="translate(43.8,273.6) scale(1)"><path d="M-8 -5l8 -3.500l8 3.500v9l-8 4l-8 -4z" fill="#a4a6a2" stroke="#333" stroke-width="0.8"/><path d="M-8 -5l8 3.500l8 -3.500l-8 -3.500z" fill="#d4d6d2" stroke="#333" stroke-width="0.6"/><path d="M0 -1.500l8 -3.500v9l-8 4z" fill="#6c6e6a" stroke="#333" stroke-width="0.6"/></g><path d="M48.8 261.55h6l-3 3.2z" fill="#000"/></g>
<g transform="translate(17.4,299.2) scale(0.9) translate(-17.4,-299.2)"><ellipse cx="18" cy="308.40000000000003" rx="7" ry="1.6" fill="#7c8498" opacity="0.6"/><text x="10.500" y="307.40000000000003" font-size="24" font-weight="bold" fill="#5c8ad8" stroke="#2d5aa8" stroke-width="0.5" font-family="Liberation Sans, sans-serif">?</text><path d="M22.4 287.40000000000003h6l-3 3.2z" fill="#000"/></g>
<g transform="translate(43.8,299.2) scale(0.9) translate(-43.8,-299.2)"><path d="M35 292.40000000000003v15M52 292.40000000000003v15" stroke="#333" stroke-width="1.4"/><path d="M36 295.40000000000003h15" stroke="#e8e010" stroke-width="2"/><path d="M36 295.40000000000003l4 -2.500v5zM51 295.40000000000003l-4 -2.500v5z" fill="#e8e010" stroke="#8a8400" stroke-width="0.4"/><path d="M48.8 287.40000000000003h6l-3 3.2z" fill="#000"/></g>
<g transform="translate(17.4,325.1) scale(0.9) translate(-17.4,-325.1)"><g transform="translate(17.4,325.2) scale(1)"><ellipse cx="1" cy="9.500" rx="8" ry="1.800" fill="#7c8498" opacity="0.6"/><path d="M-7 -5h14l-2 14h-10z" fill="#a8d4f0" stroke="#4a7aa8" stroke-width="1"/><ellipse cx="0" cy="-5" rx="7" ry="2.200" fill="#d4ecfa" stroke="#4a7aa8" stroke-width="1"/><path d="M-2 -4l2 -5l2 5z" fill="#e8d020"/><path d="M-2 0l4 6M2 0l-4 6" stroke="#c8e048" stroke-width="1.6"/></g><path d="M22.4 313.25h6l-3 3.2z" fill="#000"/></g>
<g transform="translate(43.8,325.1) scale(0.9) translate(-43.8,-325.1)"><g transform="translate(43.8,324.25) scale(1.05)"><path d="M-8 -2l7 -7v4.500c6 0 9 4 8 11c-1.500 -4 -4 -5.500 -8 -5.500v4.500z" fill="#b0b3ba" stroke="#8a8e96" stroke-width="0.6"/></g><path d="M48.8 313.25h6l-3 3.2z" fill="#000"/></g>
<g transform="translate(17.4,350.9) scale(0.9) translate(-17.4,-350.9)"><g transform="translate(17.4,350.1) scale(1)"><rect x="-10" y="-11" width="4" height="14" fill="#8a98b0" stroke="#445" stroke-width="0.6"/><path d="M-10 3l2 5l2 -5z" fill="#e8c020"/><circle cx="1" cy="-2" r="6" fill="none" stroke="#8a4a28" stroke-width="1.2"/><path d="M1 -11v18M-8 -2h18M-5.500 -8.500l13 13M7.500 -8.500l-13 13" stroke="#8a4a28" stroke-width="0.9"/><circle cx="1" cy="-2" r="1.800" fill="#f0a020"/><path d="M-8 6l8 -3l9 3l-8 4z" fill="none" stroke="#f08818" stroke-width="1.4"/><path d="M-4 8l8 -4M-6 7l8 -4M0 9l7 -3.500" stroke="#f08818" stroke-width="1.2"/></g><path d="M22.4 339.1h6l-3 3.2z" fill="#000"/></g>
<g transform="translate(43.8,350.9) scale(0.9) translate(-43.8,-350.9)"><g transform="translate(43.8,350.1) scale(1)"><path d="M-7 2h12l3 3v7h-15z" fill="url(#pg)" stroke="#111" stroke-width="1.2"/><path d="M-9 -8l6 -2l2 2l8 -2l2 10l-15 4z" fill="url(#fold)" stroke="#b89428" stroke-width="0.8"/><path d="M-3 -6c2 -4 7 -4 9 -1l-3 3h-5z" fill="#38b050"/></g></g></svg>

<!--LEFTICONS-->
<div id="status1" class="abs"></div>
<div id="status2" class="abs"></div>
<div class="st" style="left:1485px;top:1004.5px;font-size:13px">绝对 XY 上视图</div>
<div class="st" style="left:1600.5px;top:1005px;font-size:12px">绝对视图</div>
<div class="st" style="left:1668.5px;top:1005px;font-size:12.5px;font-weight:bold;letter-spacing:-0.2px">LAYER0</div>
<div class="st" style="left:1141px;top:1024px;font-size:12px">拴牢</div>
<div class="st" style="left:1463px;top:1023px;font-size:13px">LS: 1.00 PS: 1.00</div>
<div class="st" style="left:1589.5px;top:1024px;font-size:12.3px">单位: 毫米</div>
<div class="st" style="left:1663px;top:1023.5px;font-size:13px;letter-spacing:-0.1px">X = 4332.502 <span style="color:#f01010">Y =-0386.904</span> Z = 0000.000</div>
<svg class="abs" style="left:0;top:0" width="1920" height="1048" viewBox="0 0 1920 1048"><path d="M1338 1003v16" stroke="#fff" stroke-width="2" stroke-dasharray="2 2"/><path d="M1339 1004v16" stroke="#a8b0c4" stroke-width="1" stroke-dasharray="2 2"/>
<rect x="1341" y="1003" width="131" height="16" fill="#fff"/>
<path d="M1477 1003v16M1660 1003v16" stroke="#a8b0c4" stroke-width="2" stroke-dasharray="1 1"/>
<path d="M0 1020.500h1920" stroke="#c4c8d4" stroke-width="1"/>
<path d="M1592.5 1003v15" stroke="#a0a4b0" stroke-width="1"/>
<path d="M1726.5 1003v15" stroke="#a0a4b0" stroke-width="1"/>
<path d="M1757.5 1003v15" stroke="#a0a4b0" stroke-width="1"/>
<path d="M1800 1003v15" stroke="#a0a4b0" stroke-width="1"/>
<path d="M1843 1003v15" stroke="#a0a4b0" stroke-width="1"/>
<path d="M1887 1003v15" stroke="#a0a4b0" stroke-width="1"/>
<rect x="1762" y="1005" width="32" height="12" fill="#44618b"/>
<rect x="1805" y="1005" width="32" height="12" fill="#44618b"/>
<rect x="1848" y="1005" width="32" height="12" fill="#44618b"/>
<circle cx="1900.500" cy="1009.500" r="6.500" fill="#1838c8" stroke="#0a1a60" stroke-width="0.8"/><path d="M1896 1006c2 -2 5 -2 6 0c1 2 -1 3 -2 5c-1 2 -3 1 -3 -1c0 -1.500 -2 -2 -1 -4z" fill="#28c828"/><path d="M1903 1011c1.500 -0.500 2.500 0.500 2 2c-1 1 -2.500 0 -2 -2z" fill="#28c828"/>
<path d="M1132.5 1023v16" stroke="#8f94a0" stroke-width="1"/>
<path d="M1175 1023v16" stroke="#8f94a0" stroke-width="1"/>
<path d="M1206.5 1023v16" stroke="#8f94a0" stroke-width="1"/>
<path d="M1237.5 1023v16" stroke="#8f94a0" stroke-width="1"/>
<path d="M1268.5 1023v16" stroke="#8f94a0" stroke-width="1"/>
<path d="M1299 1023v16" stroke="#8f94a0" stroke-width="1"/>
<path d="M1330.5 1023v16" stroke="#8f94a0" stroke-width="1"/>
<path d="M1361.5 1023v16" stroke="#8f94a0" stroke-width="1"/>
<path d="M1392 1023v16" stroke="#8f94a0" stroke-width="1"/>
<path d="M1423 1023v16" stroke="#8f94a0" stroke-width="1"/>
<path d="M1454.5 1023v16" stroke="#8f94a0" stroke-width="1"/>
<path d="M1580.5 1023v16" stroke="#8f94a0" stroke-width="1"/>
<path d="M1654.5 1023v16" stroke="#8f94a0" stroke-width="1"/>
<rect x="1182.500" y="1022.500" width="16" height="16" fill="#c4c4d4" stroke="#8a8ca0" stroke-width="1"/><g transform="translate(1190.5,1030.5) scale(1)"><g transform="translate(0,0) scale(0.8)"><g transform="rotate(0)"><path d="M-5.9 -1.2A6 6 0 0 1 4.4 -4.1" fill="none" stroke="#b03030" stroke-width="3.6"/><path d="M9 -5.4L1.8 -1.2L7.6 1.6Z" fill="#e86868" stroke="#b03030" stroke-width="0.7"/><path d="M-5.9 -1.2A6 6 0 0 1 4.4 -4.1" fill="none" stroke="#e86868" stroke-width="2.4"/></g><g transform="rotate(180)"><path d="M-5.9 -1.2A6 6 0 0 1 4.4 -4.1" fill="none" stroke="#b03030" stroke-width="3.6"/><path d="M9 -5.4L1.8 -1.2L7.6 1.6Z" fill="#e88888" stroke="#b03030" stroke-width="0.7"/><path d="M-5.9 -1.2A6 6 0 0 1 4.4 -4.1" fill="none" stroke="#e88888" stroke-width="2.4"/></g></g></g>
<rect x="1212" y="1021.500" width="18.500" height="17.500" fill="#fcd771"/><path d="M1221 1024l-3 3l-4 -1l2 3.500l-2 3.500l4 -0.500l2 3l1 -4l4 -1l-3 -2.500l1 -4z" fill="#e858d8" stroke="#b030a8" stroke-width="0.5"/><path d="M1221 1028l7 7l-3 0.300l1.500 3l-1.500 0.700l-1.500 -3l-2.500 2z" fill="#f4f4f4" stroke="#555" stroke-width="0.7"/>
<path d="M1247 1028l5 -4l8 -1l1 4l-6 2l-4 4z" fill="#e8b878" stroke="#8a5a28" stroke-width="0.8"/><rect x="1246" y="1031" width="9" height="7" fill="#dfe8fa" stroke="#5a78b8" stroke-width="0.8"/><path d="M1248 1033h2M1249 1032v2M1251.500 1035.500h2" stroke="#2060e0" stroke-width="0.9"/>
<ellipse cx="1284" cy="1037.500" rx="6" ry="1.400" fill="#7c8498" opacity="0.6"/><text x="1277.500" y="1037" font-size="19" font-weight="bold" fill="#5c8ad8" stroke="#2d5aa8" stroke-width="0.4" font-family="Liberation Sans, sans-serif">?</text>
<g transform="translate(1311,1026.5) scale(0.9)"><path d="M-5 -3l5 -2.500l5 2.500l-5 2.500z" fill="#78a8f0" stroke="#223" stroke-width="0.6"/><path d="M-5 -3l5 2.500v6l-5 -2.500z" fill="#3868c8" stroke="#223" stroke-width="0.6"/><path d="M5 -3l-5 2.500v6l5 -2.500z" fill="#2048a0" stroke="#223" stroke-width="0.6"/></g><g transform="translate(1317.5,1032.5) scale(0.95)"><path d="M-5 -3l5 -2.500l5 2.500l-5 2.500z" fill="#a8d0d8" stroke="#223" stroke-width="0.6"/><path d="M-5 -3l5 2.500v6l-5 -2.500z" fill="#487888" stroke="#223" stroke-width="0.6"/><path d="M5 -3l-5 2.500v6l5 -2.500z" fill="#305868" stroke="#223" stroke-width="0.6"/></g><path d="M1304 1032h7" stroke="#e01818" stroke-width="1.6"/><path d="M1313 1032l-4 -3v6z" fill="#e01818"/><path d="M1305 1028.500l4 3M1305 1035.500l4 -3" stroke="#e01818" stroke-width="1"/>
<rect x="1335.500" y="1021.500" width="19" height="17.500" fill="#fcd771"/><g transform="translate(1345,1030) scale(1.45)"><path d="M-5 -3l5 -2.500l5 2.500l-5 2.500z" fill="#e848e0" stroke="#223" stroke-width="0.6"/><path d="M-5 -3l5 2.500v6l-5 -2.500z" fill="#28a8c0" stroke="#223" stroke-width="0.6"/><path d="M5 -3l-5 2.500v6l5 -2.500z" fill="#187890" stroke="#223" stroke-width="0.6"/></g>
<rect x="1369" y="1026" width="11" height="11" fill="#dfe8fa" stroke="#555" stroke-width="1"/><circle cx="1407" cy="1028" r="7.500" fill="#f4f4f4" stroke="#38a838" stroke-width="2"/><path d="M1407 1024v5" stroke="#2858c8" stroke-width="1.600"/><path d="M1431 1026h14v11h-14zM1438 1026v11" fill="#eef2fa" stroke="#555" stroke-width="1"/>
<rect x="1376.500" y="1009.500" width="189" height="23" fill="#fff" stroke="#d8dbe2" stroke-width="1"/>
<g transform="translate(1373,1019.500) rotate(-8)"><rect x="-13" y="-12" width="26" height="24" rx="5" fill="#f4521e"/><text x="-9.500" y="9" font-size="26" font-weight="bold" font-style="italic" fill="#fff" font-family="Liberation Sans, sans-serif">S</text></g>
<text x="1392.500" y="1027" font-size="18" font-weight="bold" fill="#1c78d8" font-family="Liberation Sans, Noto Sans CJK SC, sans-serif">中</text>
<circle cx="1418.500" cy="1015.500" r="1.600" fill="none" stroke="#1c78d8" stroke-width="1.200"/><path d="M1425.500 1019.500q1.800 2.500 -1.500 5" fill="none" stroke="#1c78d8" stroke-width="2"/>
<circle cx="1444" cy="1020.500" r="7.200" fill="none" stroke="#1c78d8" stroke-width="1.500"/><circle cx="1441.300" cy="1018.500" r="1.100" fill="#1c78d8"/><circle cx="1446.700" cy="1018.500" r="1.100" fill="#1c78d8"/><path d="M1440.300 1022.500q3.700 3.400 7.400 0" fill="none" stroke="#1c78d8" stroke-width="1.300"/>
<rect x="1463" y="1012" width="6" height="11" rx="3" fill="#1c78d8"/><path d="M1460.500 1020.500a5.500 5.500 0 0 0 11 0M1466 1026v3" fill="none" stroke="#1c78d8" stroke-width="1.400"/>
<rect x="1480.500" y="1015" width="16" height="11" rx="1.500" fill="#1c78d8"/><path d="M1483 1018h11M1483 1020.500h11" stroke="#fff" stroke-width="1.200" stroke-dasharray="1.600 1.500"/><path d="M1485 1023.500h7" stroke="#fff" stroke-width="1.200"/>
<circle cx="1509" cy="1016.500" r="3.200" fill="#c8ccd4"/><path d="M1502.500 1027c0 -5 3 -7 6.500 -7s6.500 2 6.500 7z" fill="#c8ccd4"/><rect x="1510.500" y="1022.500" width="6.500" height="6" rx="1" fill="#e8eaee" stroke="#c0c4cc" stroke-width="0.500"/>
<path d="M1526.500 1014.500l-4.500 3.500l2 3l2 -1.200v8.200h10v-8.200l2 1.200l2 -3l-4.500 -3.500h-2.500q-2 2 -4 0z" fill="#1c78d8"/>
<rect x="1547" y="1014.500" width="5.500" height="5.500" fill="#1c78d8"/><rect x="1555" y="1015" width="4.500" height="4.500" fill="none" stroke="#1c78d8" stroke-width="1.200"/><rect x="1547" y="1022" width="5.500" height="5.500" fill="#1c78d8"/><rect x="1554.500" y="1022" width="5.500" height="5.500" fill="#1c78d8"/></svg>

<div id="taskbar" class="abs"></div>
<div class="abs" style="left:48px;top:1040px;width:342px;height:8px;background:#f1f1f1;border-top:1px solid #d8d8d8"></div><div class="abs" style="left:588px;top:1040px;width:48px;height:8px;background:#444"></div><div class="abs" style="left:1915px;top:1040px;width:1px;height:8px;background:#9a9a9a"></div><div class="abs" style="left:1818px;top:1043px;font-size:12px;color:#fff;line-height:14px">2:22</div>

</body>
</html>
